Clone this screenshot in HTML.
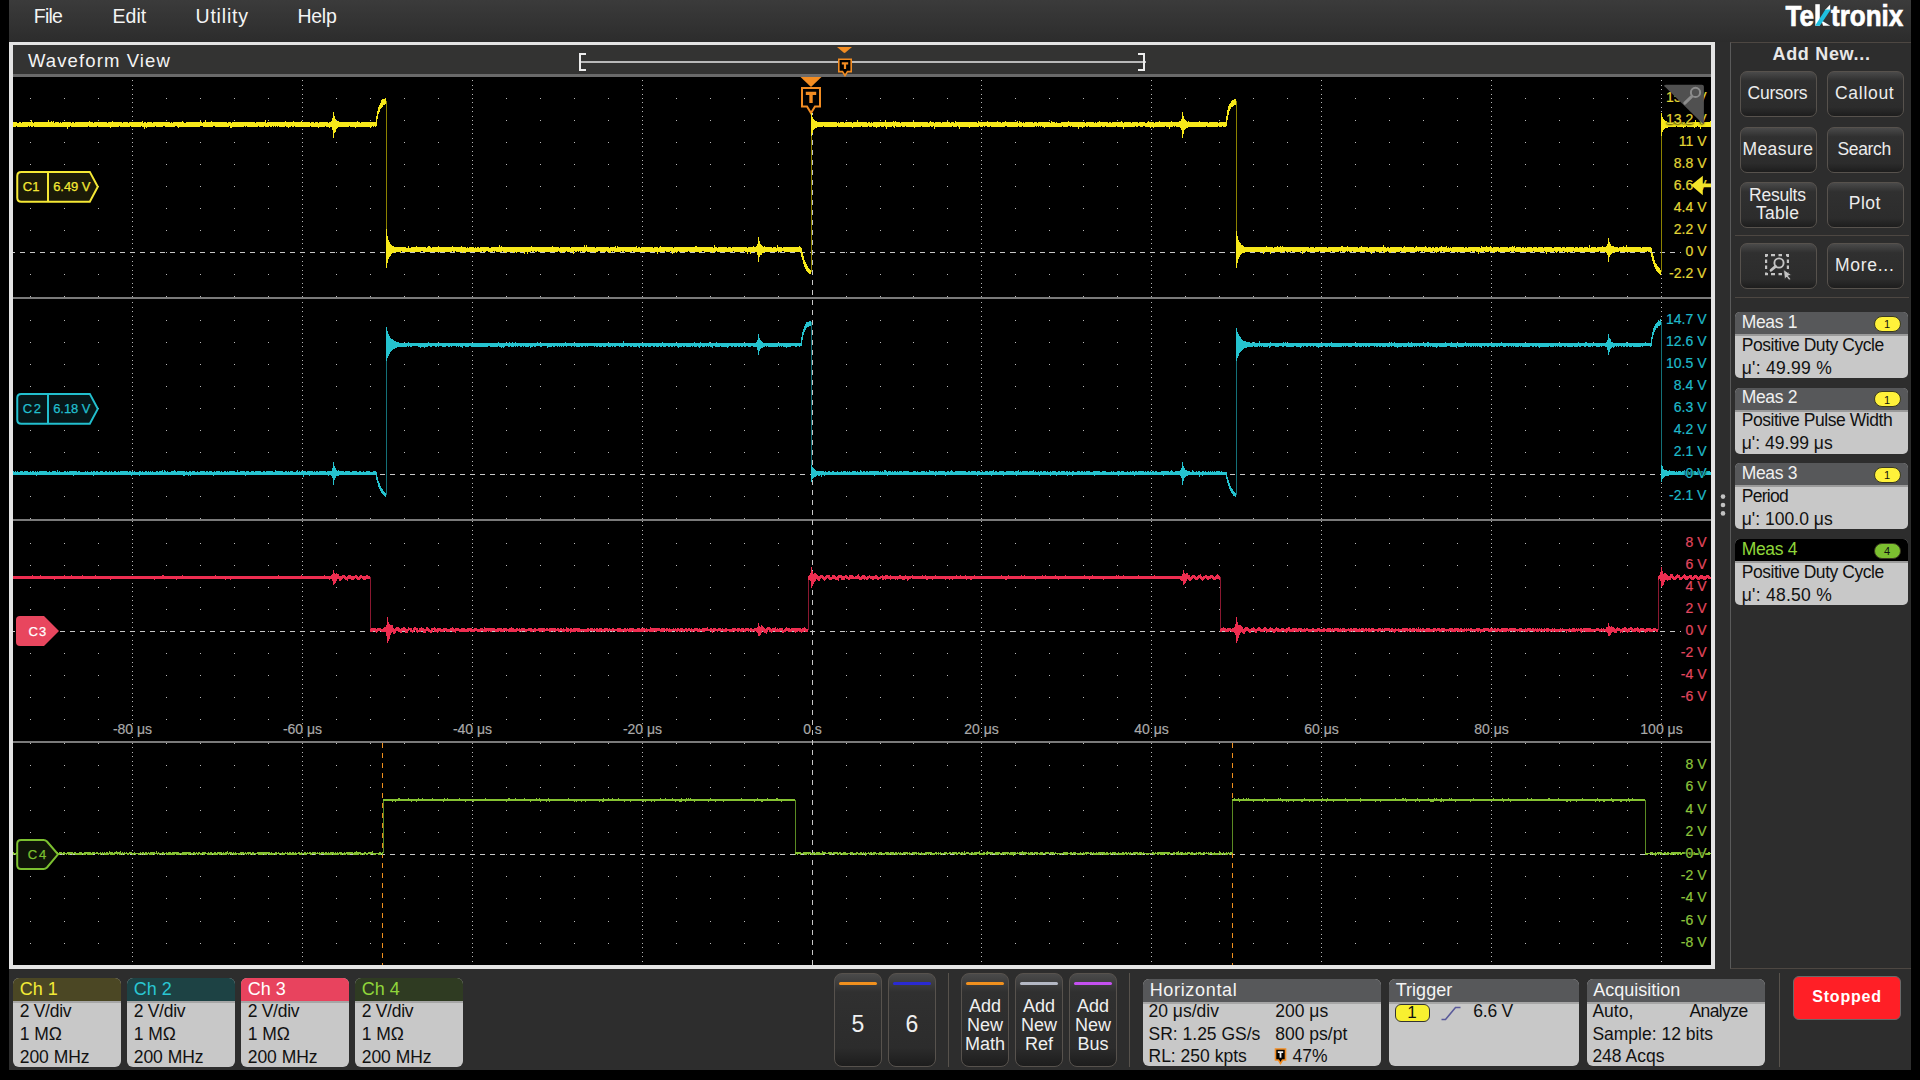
<!DOCTYPE html>
<html><head><meta charset="utf-8">
<style>
html,body{margin:0;padding:0;}
body{width:1920px;height:1080px;overflow:hidden;background:#000;position:relative;font-family:"Liberation Sans",sans-serif;}
.a{position:absolute;}
.t{position:absolute;white-space:pre;}
</style></head><body>
<div class="a" style="left:9px;top:0px;width:1902px;height:1070px;background:#2d2d2d;"></div>
<div class="a" style="left:9px;top:0px;width:1902px;height:42px;background:linear-gradient(#3b3b3b,#2c2c2c);"></div>
<div class="t" style="left:33.75px;top:6.59px;font-size:19.5px;line-height:19.5px;color:#f4f4f4;letter-spacing:-0.765px;">File</div>
<div class="t" style="left:112.50px;top:6.59px;font-size:19.5px;line-height:19.5px;color:#f4f4f4;letter-spacing:0.037px;">Edit</div>
<div class="t" style="left:195.50px;top:6.59px;font-size:19.5px;line-height:19.5px;color:#f4f4f4;letter-spacing:0.804px;">Utility</div>
<div class="t" style="left:297.60px;top:6.59px;font-size:19.5px;line-height:19.5px;color:#f4f4f4;letter-spacing:-0.324px;">Help</div>
<svg class="a" style="left:0;top:0" width="1920" height="40"><text x="1785.6" y="25.8" font-family="Liberation Sans" font-weight="bold" font-size="30" fill="#fff" stroke="#fff" stroke-width="0.7" textLength="28.5" lengthAdjust="spacingAndGlyphs">Te</text><rect x="1815.3" y="4.2" width="4.5" height="21.6" fill="#fff"/><path d="M1821.5 20.5 L1830.3 25.8 H1823 Z" fill="#fff"/><path d="M1825 10 L1830.2 4.6 V10 Z" fill="#fff"/><path d="M1815.1 25.8 H1819.9 L1830.8 9.4 H1825.4 Z" fill="#1fc0e0"/><text x="1831" y="25.8" font-family="Liberation Sans" font-weight="bold" font-size="30" fill="#fff" stroke="#fff" stroke-width="0.7" textLength="72.2" lengthAdjust="spacingAndGlyphs">tronix</text></svg>
<div class="a" style="left:9px;top:42px;width:1706px;height:927px;background:#e4e4e4;"></div>
<div class="a" style="left:13px;top:45px;width:1698px;height:29px;background:#333332;"></div>
<div class="a" style="left:13px;top:74px;width:1698px;height:3px;background:#6a6a6a;"></div>
<div class="a" style="left:13px;top:77px;width:1698px;height:888px;background:#000;"></div>
<div class="t" style="left:27.90px;top:51.74px;font-size:18.5px;line-height:18.5px;color:#f4f4f4;letter-spacing:1.119px;">Waveform View</div>
<svg class="a" style="left:0;top:0" width="1920" height="120" shape-rendering="crispEdges"><rect x="579" y="61" width="567" height="2" fill="#b9b9b9"/><path d="M579 53h7v1.6h-5.4V69.4H586V71h-7z" fill="#ececec"/><path d="M1145 53h-7v1.6h5.4V69.4H1138V71h7z" fill="#ececec"/></svg>
<svg class="a" style="left:0;top:0" width="1920" height="120"><path d="M837 47 H852 L845.5 52.5 Q844.5 53.3 843.5 52.5 Z" fill="#f28c22"/><path d="M838.8 59.2 H851.2 V71.6 H847.5 L845 75.5 L842.5 71.6 H838.8 Z" fill="#000" stroke="#f28c22" stroke-width="1.6"/><path d="M841.8 62.3 H848.2 V64.4 H846.1 V69 H843.9 V64.4 H841.8 Z" fill="#f28c22"/><path d="M800.5 77 H821.5 L811 87 Z" fill="#f28c22"/><path d="M802 88 H820 V106.5 H815 L811 113 L807 106.5 H802 Z" fill="#000" stroke="#f28c22" stroke-width="2"/><path d="M805.8 91.8 H816.2 V95 H812.7 V103 H809.3 V95 H805.8 Z" fill="#f28c22"/></svg>
<div class="a" style="left:1730px;top:42px;width:181px;height:927px;background:#2d2d2d;border-left:1px solid #5a5a5a;border-top:1px solid #4d4742;border-bottom:1px solid #4d4742;box-sizing:border-box;"></div>
<div class="t" style="left:1772.50px;top:45.36px;font-size:18px;line-height:18px;color:#e8e8e8;font-weight:bold;letter-spacing:0.683px;">Add New...</div>
<div class="a" style="left:1740px;top:71px;width:77px;height:46px;background:linear-gradient(#4a4a4a 0%,#303030 20%,#2c2c2c 80%,#1d1d1d 100%);border:1.6px solid #57524d;border-radius:7px;box-sizing:border-box;"></div>
<div class="t" style="left:1747.50px;top:84.54px;font-size:17.5px;line-height:17.5px;color:#ececec;letter-spacing:-0.208px;">Cursors</div>
<div class="a" style="left:1827px;top:71px;width:77px;height:46px;background:linear-gradient(#4a4a4a 0%,#303030 20%,#2c2c2c 80%,#1d1d1d 100%);border:1.6px solid #57524d;border-radius:7px;box-sizing:border-box;"></div>
<div class="t" style="left:1835.00px;top:84.54px;font-size:17.5px;line-height:17.5px;color:#ececec;letter-spacing:0.706px;">Callout</div>
<div class="a" style="left:1740px;top:127px;width:77px;height:46px;background:linear-gradient(#4a4a4a 0%,#303030 20%,#2c2c2c 80%,#1d1d1d 100%);border:1.6px solid #57524d;border-radius:7px;box-sizing:border-box;"></div>
<div class="t" style="left:1742.50px;top:140.79px;font-size:17.5px;line-height:17.5px;color:#ececec;letter-spacing:0.404px;">Measure</div>
<div class="a" style="left:1827px;top:127px;width:77px;height:46px;background:linear-gradient(#4a4a4a 0%,#303030 20%,#2c2c2c 80%,#1d1d1d 100%);border:1.6px solid #57524d;border-radius:7px;box-sizing:border-box;"></div>
<div class="t" style="left:1837.50px;top:140.79px;font-size:17.5px;line-height:17.5px;color:#ececec;letter-spacing:-0.345px;">Search</div>
<div class="a" style="left:1740px;top:182px;width:77px;height:46px;background:linear-gradient(#4a4a4a 0%,#303030 20%,#2c2c2c 80%,#1d1d1d 100%);border:1.6px solid #57524d;border-radius:7px;box-sizing:border-box;"></div>
<div class="t" style="left:1749.00px;top:187.04px;font-size:17.5px;line-height:17.5px;color:#ececec;letter-spacing:-0.227px;">Results</div>
<div class="a" style="left:1827px;top:182px;width:77px;height:46px;background:linear-gradient(#4a4a4a 0%,#303030 20%,#2c2c2c 80%,#1d1d1d 100%);border:1.6px solid #57524d;border-radius:7px;box-sizing:border-box;"></div>
<div class="t" style="left:1848.75px;top:194.79px;font-size:17.5px;line-height:17.5px;color:#ececec;letter-spacing:0.521px;">Plot</div>
<div class="a" style="left:1740px;top:243px;width:77px;height:46px;background:linear-gradient(#4a4a4a 0%,#303030 20%,#2c2c2c 80%,#1d1d1d 100%);border:1.6px solid #57524d;border-radius:7px;box-sizing:border-box;"></div>
<div class="a" style="left:1827px;top:243px;width:77px;height:46px;background:linear-gradient(#4a4a4a 0%,#303030 20%,#2c2c2c 80%,#1d1d1d 100%);border:1.6px solid #57524d;border-radius:7px;box-sizing:border-box;"></div>
<div class="t" style="left:1835.00px;top:256.79px;font-size:17.5px;line-height:17.5px;color:#ececec;letter-spacing:0.721px;">More...</div>
<div class="t" style="left:1756.00px;top:205.04px;font-size:17.5px;line-height:17.5px;color:#ececec;letter-spacing:0.294px;">Table</div>
<div class="a" style="left:1735px;top:235px;width:174px;height:1px;background:#4d4742;"></div>
<div class="a" style="left:1735px;top:297px;width:174px;height:1px;background:#4d4742;"></div>
<svg class="a" style="left:1760px;top:248px" width="40" height="36"><path d="M5 6h3v2.2h-3zM11 6h4v2.2h-4zM18.5 6h3.5v2.2h-3.5zM26 6h3v2.2h-3zM5 25h3v2.2h-3zM11 25h4v2.2h-4zM18.5 25h3.5v2.2h-3.5zM26 25h3v2.2h-3zM5 6h2.2v3h-2.2zM5 11.5h2.2v3.5h-2.2zM5 17.5h2.2v3.5h-2.2zM5 24.5h2.2v2.7h-2.2zM26.8 6h2.2v3h-2.2zM26.8 11.5h2.2v3.5h-2.2zM26.8 17.5h2.2v3.5h-2.2zM26.8 24.5h2.2v2.7h-2.2z" fill="#c4c4c4"/><circle cx="19" cy="15" r="4.6" fill="none" stroke="#c4c4c4" stroke-width="1.9"/><path d="M15.6 18.4 L11 22.3" stroke="#c4c4c4" stroke-width="2.8" stroke-linecap="round"/><path d="M23.5 21.5 L31.5 27 L28.3 27.8 L30.8 31 L29 32.3 L26.6 29 L24.6 31.5 Z" fill="#c4c4c4" stroke="#2c2c2c" stroke-width="0.8"/></svg>
<div class="a" style="left:1735px;top:312px;width:173px;height:66px;background:#c8c8c8;border-radius:5px;overflow:hidden;"></div>
<div class="a" style="left:1735px;top:312px;width:173px;height:22px;background:#57585a;border-radius:5px 5px 0 0;"></div>
<div class="a" style="left:1735px;top:334px;width:173px;height:2px;background:#9a9a9a;"></div>
<div class="a" style="left:1873.75px;top:315.5px;width:27px;height:16px;background:#fff23a;border:1px solid #3a3a20;border-radius:8px;box-sizing:border-box;"></div>
<div class="t" style="left:1883.95px;top:319.09px;font-size:11px;line-height:11px;color:#111;">1</div>
<div class="t" style="left:1741.70px;top:313.59px;font-size:17.5px;line-height:17.5px;color:#f0f0f0;letter-spacing:-0.320px;">Meas 1</div>
<div class="t" style="left:1741.70px;top:336.79px;font-size:17.5px;line-height:17.5px;color:#111;letter-spacing:-0.459px;">Positive Duty Cycle</div>
<div class="t" style="left:1741.70px;top:359.69px;font-size:17.5px;line-height:17.5px;color:#111;letter-spacing:0.267px;">μ': 49.99 %</div>
<div class="a" style="left:1735px;top:387.5px;width:173px;height:66px;background:#c8c8c8;border-radius:5px;overflow:hidden;"></div>
<div class="a" style="left:1735px;top:387.5px;width:173px;height:22px;background:#57585a;border-radius:5px 5px 0 0;"></div>
<div class="a" style="left:1735px;top:409.5px;width:173px;height:2px;background:#9a9a9a;"></div>
<div class="a" style="left:1873.75px;top:391.0px;width:27px;height:16px;background:#fff23a;border:1px solid #3a3a20;border-radius:8px;box-sizing:border-box;"></div>
<div class="t" style="left:1883.95px;top:394.59px;font-size:11px;line-height:11px;color:#111;">1</div>
<div class="t" style="left:1741.70px;top:389.09px;font-size:17.5px;line-height:17.5px;color:#f0f0f0;letter-spacing:-0.320px;">Meas 2</div>
<div class="t" style="left:1741.70px;top:412.29px;font-size:17.5px;line-height:17.5px;color:#111;letter-spacing:-0.448px;">Positive Pulse Width</div>
<div class="t" style="left:1741.70px;top:435.19px;font-size:17.5px;line-height:17.5px;color:#111;letter-spacing:0.032px;">μ': 49.99 μs</div>
<div class="a" style="left:1735px;top:463px;width:173px;height:66px;background:#c8c8c8;border-radius:5px;overflow:hidden;"></div>
<div class="a" style="left:1735px;top:463px;width:173px;height:22px;background:#57585a;border-radius:5px 5px 0 0;"></div>
<div class="a" style="left:1735px;top:485px;width:173px;height:2px;background:#9a9a9a;"></div>
<div class="a" style="left:1873.75px;top:466.5px;width:27px;height:16px;background:#fff23a;border:1px solid #3a3a20;border-radius:8px;box-sizing:border-box;"></div>
<div class="t" style="left:1883.95px;top:470.09px;font-size:11px;line-height:11px;color:#111;">1</div>
<div class="t" style="left:1741.70px;top:464.59px;font-size:17.5px;line-height:17.5px;color:#f0f0f0;letter-spacing:-0.320px;">Meas 3</div>
<div class="t" style="left:1741.70px;top:487.79px;font-size:17.5px;line-height:17.5px;color:#111;letter-spacing:-0.715px;">Period</div>
<div class="t" style="left:1741.70px;top:510.69px;font-size:17.5px;line-height:17.5px;color:#111;letter-spacing:0.032px;">μ': 100.0 μs</div>
<div class="a" style="left:1735px;top:539px;width:173px;height:66px;background:#c8c8c8;border-radius:5px;overflow:hidden;"></div>
<div class="a" style="left:1735px;top:539px;width:173px;height:22px;background:#000;border-radius:5px 5px 0 0;"></div>
<div class="a" style="left:1735px;top:561px;width:173px;height:2px;background:#9a9a9a;"></div>
<div class="a" style="left:1873.75px;top:542.5px;width:27px;height:16px;background:#7cc030;border:1px solid #3a3a20;border-radius:8px;box-sizing:border-box;"></div>
<div class="t" style="left:1883.95px;top:546.09px;font-size:11px;line-height:11px;color:#111;">4</div>
<div class="t" style="left:1741.70px;top:540.59px;font-size:17.5px;line-height:17.5px;color:#8fd63a;letter-spacing:-0.320px;">Meas 4</div>
<div class="t" style="left:1741.70px;top:563.79px;font-size:17.5px;line-height:17.5px;color:#111;letter-spacing:-0.459px;">Positive Duty Cycle</div>
<div class="t" style="left:1741.70px;top:586.69px;font-size:17.5px;line-height:17.5px;color:#111;letter-spacing:0.267px;">μ': 48.50 %</div>
<svg class="a" style="left:1718px;top:494px" width="10" height="24"><circle cx="5" cy="2.6" r="2.3" fill="#c2c2c2"/><circle cx="5" cy="11" r="2.3" fill="#c2c2c2"/><circle cx="5" cy="19.4" r="2.3" fill="#c2c2c2"/></svg>
<div class="a" style="left:13px;top:978px;width:108px;height:89px;background:#c8c8c8;border-radius:6px;overflow:hidden;"></div>
<div class="a" style="left:13px;top:978px;width:108px;height:22.7px;background:#4b4724;border-radius:6px 6px 0 0;"></div>
<div class="a" style="left:13px;top:1000.7px;width:108px;height:2.3px;background:#a6a6a6;"></div>
<div class="t" style="left:19.70px;top:980.36px;font-size:18px;line-height:18px;color:#f2ea36;">Ch 1</div>
<div class="t" style="left:19.70px;top:1003.49px;font-size:17.5px;line-height:17.5px;color:#111;letter-spacing:-0.277px;">2 V/div</div>
<div class="t" style="left:19.70px;top:1026.29px;font-size:17.5px;line-height:17.5px;color:#111;">1 MΩ</div>
<div class="t" style="left:19.70px;top:1048.79px;font-size:17.5px;line-height:17.5px;color:#111;letter-spacing:-0.017px;">200 MHz</div>
<div class="a" style="left:127px;top:978px;width:108px;height:89px;background:#c8c8c8;border-radius:6px;overflow:hidden;"></div>
<div class="a" style="left:127px;top:978px;width:108px;height:22.7px;background:#1d4244;border-radius:6px 6px 0 0;"></div>
<div class="a" style="left:127px;top:1000.7px;width:108px;height:2.3px;background:#a6a6a6;"></div>
<div class="t" style="left:133.70px;top:980.36px;font-size:18px;line-height:18px;color:#2ac7d3;">Ch 2</div>
<div class="t" style="left:133.70px;top:1003.49px;font-size:17.5px;line-height:17.5px;color:#111;letter-spacing:-0.277px;">2 V/div</div>
<div class="t" style="left:133.70px;top:1026.29px;font-size:17.5px;line-height:17.5px;color:#111;">1 MΩ</div>
<div class="t" style="left:133.70px;top:1048.79px;font-size:17.5px;line-height:17.5px;color:#111;letter-spacing:-0.017px;">200 MHz</div>
<div class="a" style="left:241px;top:978px;width:108px;height:89px;background:#c8c8c8;border-radius:6px;overflow:hidden;"></div>
<div class="a" style="left:241px;top:978px;width:108px;height:22.7px;background:#e8435e;border-radius:6px 6px 0 0;"></div>
<div class="a" style="left:241px;top:1000.7px;width:108px;height:2.3px;background:#a6a6a6;"></div>
<div class="t" style="left:247.70px;top:980.36px;font-size:18px;line-height:18px;color:#ffffff;">Ch 3</div>
<div class="t" style="left:247.70px;top:1003.49px;font-size:17.5px;line-height:17.5px;color:#111;letter-spacing:-0.277px;">2 V/div</div>
<div class="t" style="left:247.70px;top:1026.29px;font-size:17.5px;line-height:17.5px;color:#111;">1 MΩ</div>
<div class="t" style="left:247.70px;top:1048.79px;font-size:17.5px;line-height:17.5px;color:#111;letter-spacing:-0.017px;">200 MHz</div>
<div class="a" style="left:355px;top:978px;width:108px;height:89px;background:#c8c8c8;border-radius:6px;overflow:hidden;"></div>
<div class="a" style="left:355px;top:978px;width:108px;height:22.7px;background:#2f3b22;border-radius:6px 6px 0 0;"></div>
<div class="a" style="left:355px;top:1000.7px;width:108px;height:2.3px;background:#a6a6a6;"></div>
<div class="t" style="left:361.70px;top:980.36px;font-size:18px;line-height:18px;color:#8fd63a;">Ch 4</div>
<div class="t" style="left:361.70px;top:1003.49px;font-size:17.5px;line-height:17.5px;color:#111;letter-spacing:-0.277px;">2 V/div</div>
<div class="t" style="left:361.70px;top:1026.29px;font-size:17.5px;line-height:17.5px;color:#111;">1 MΩ</div>
<div class="t" style="left:361.70px;top:1048.79px;font-size:17.5px;line-height:17.5px;color:#111;letter-spacing:-0.017px;">200 MHz</div>
<div class="a" style="left:834px;top:973px;width:48px;height:94px;background:linear-gradient(#4a4a4a 0%,#303030 20%,#2c2c2c 80%,#1d1d1d 100%);border:1.6px solid #57524d;border-radius:7px;box-sizing:border-box;border-radius:8px;"></div>
<div class="a" style="left:839px;top:982px;width:38px;height:3px;background:#f0901e;border-radius:2px;"></div>
<div class="t" style="left:851.62px;top:1012.83px;font-size:23px;line-height:23px;color:#f0f0f0;">5</div>
<div class="a" style="left:888px;top:973px;width:48px;height:94px;background:linear-gradient(#4a4a4a 0%,#303030 20%,#2c2c2c 80%,#1d1d1d 100%);border:1.6px solid #57524d;border-radius:7px;box-sizing:border-box;border-radius:8px;"></div>
<div class="a" style="left:893px;top:982px;width:38px;height:3px;background:#2a2ad2;border-radius:2px;"></div>
<div class="t" style="left:905.62px;top:1012.83px;font-size:23px;line-height:23px;color:#f0f0f0;">6</div>
<div class="a" style="left:948px;top:973px;width:1px;height:94px;background:#57524c;"></div>
<div class="a" style="left:961px;top:973px;width:48px;height:94px;background:linear-gradient(#4a4a4a 0%,#303030 20%,#2c2c2c 80%,#1d1d1d 100%);border:1.6px solid #57524d;border-radius:7px;box-sizing:border-box;border-radius:8px;"></div>
<div class="a" style="left:966px;top:982px;width:38px;height:3px;background:#f0901e;border-radius:2px;"></div>
<div class="t" style="left:968.98px;top:997.06px;font-size:18px;line-height:18px;color:#f0f0f0;">Add</div>
<div class="t" style="left:966.96px;top:1016.16px;font-size:18px;line-height:18px;color:#f0f0f0;">New</div>
<div class="t" style="left:964.98px;top:1035.36px;font-size:18px;line-height:18px;color:#f0f0f0;">Math</div>
<div class="a" style="left:1015px;top:973px;width:48px;height:94px;background:linear-gradient(#4a4a4a 0%,#303030 20%,#2c2c2c 80%,#1d1d1d 100%);border:1.6px solid #57524d;border-radius:7px;box-sizing:border-box;border-radius:8px;"></div>
<div class="a" style="left:1020px;top:982px;width:38px;height:3px;background:#b4b8c4;border-radius:2px;"></div>
<div class="t" style="left:1022.98px;top:997.06px;font-size:18px;line-height:18px;color:#f0f0f0;">Add</div>
<div class="t" style="left:1020.96px;top:1016.16px;font-size:18px;line-height:18px;color:#f0f0f0;">New</div>
<div class="t" style="left:1024.96px;top:1035.36px;font-size:18px;line-height:18px;color:#f0f0f0;">Ref</div>
<div class="a" style="left:1069px;top:973px;width:48px;height:94px;background:linear-gradient(#4a4a4a 0%,#303030 20%,#2c2c2c 80%,#1d1d1d 100%);border:1.6px solid #57524d;border-radius:7px;box-sizing:border-box;border-radius:8px;"></div>
<div class="a" style="left:1074px;top:982px;width:38px;height:3px;background:#c450f0;border-radius:2px;"></div>
<div class="t" style="left:1076.98px;top:997.06px;font-size:18px;line-height:18px;color:#f0f0f0;">Add</div>
<div class="t" style="left:1074.95px;top:1016.16px;font-size:18px;line-height:18px;color:#f0f0f0;">New</div>
<div class="t" style="left:1077.47px;top:1035.36px;font-size:18px;line-height:18px;color:#f0f0f0;">Bus</div>
<div class="a" style="left:1129px;top:973px;width:1px;height:94px;background:#57524c;"></div>
<div class="a" style="left:1143px;top:979px;width:238px;height:87px;background:#c8c8c8;border-radius:6px;overflow:hidden;"></div>
<div class="a" style="left:1143px;top:979px;width:238px;height:22.7px;background:#57585a;border-radius:6px 6px 0 0;"></div>
<div class="a" style="left:1143px;top:1001.7px;width:238px;height:2.3px;background:#a6a6a6;"></div>
<div class="t" style="left:1149.70px;top:980.86px;font-size:18px;line-height:18px;color:#f4f4f4;letter-spacing:0.667px;">Horizontal</div>
<div class="t" style="left:1148.50px;top:1003.29px;font-size:17.5px;line-height:17.5px;color:#111;">20 μs/div</div>
<div class="t" style="left:1148.50px;top:1026.29px;font-size:17.5px;line-height:17.5px;color:#111;">SR: 1.25 GS/s</div>
<div class="t" style="left:1148.50px;top:1047.79px;font-size:17.5px;line-height:17.5px;color:#111;">RL: 250 kpts</div>
<div class="t" style="left:1275.30px;top:1003.29px;font-size:17.5px;line-height:17.5px;color:#111;">200 μs</div>
<div class="t" style="left:1275.30px;top:1026.29px;font-size:17.5px;line-height:17.5px;color:#111;">800 ps/pt</div>
<div class="t" style="left:1292.50px;top:1047.79px;font-size:17.5px;line-height:17.5px;color:#111;">47%</div>
<svg class="a" style="left:1274px;top:1048px" width="14" height="18"><path d="M1.5 1 H11.5 V12 H8.5 L6.5 15.5 L4.5 12 H1.5 Z" fill="#000" stroke="#f28c22" stroke-width="1.6"/><path d="M3.8 3.2 H9.2 V5 H7.4 V9.8 H5.6 V5 H3.8 Z" fill="#f0f0f0"/></svg>
<div class="a" style="left:1389px;top:979px;width:190px;height:87px;background:#c8c8c8;border-radius:6px;overflow:hidden;"></div>
<div class="a" style="left:1389px;top:979px;width:190px;height:22.7px;background:#57585a;border-radius:6px 6px 0 0;"></div>
<div class="a" style="left:1389px;top:1001.7px;width:190px;height:2.3px;background:#a6a6a6;"></div>
<div class="t" style="left:1395.80px;top:980.86px;font-size:18px;line-height:18px;color:#f4f4f4;">Trigger</div>
<div class="a" style="left:1394.7px;top:1003.7px;width:35px;height:18px;background:#f8f030;border:1px solid #333;border-radius:6px;box-sizing:border-box;"></div>
<div class="t" style="left:1407.28px;top:1003.71px;font-size:17px;line-height:17px;color:#111;">1</div>
<svg class="a" style="left:1440px;top:1005px" width="24" height="17"><path d="M1.5 14.5 H5.5 L15.5 2.5 H20.5" fill="none" stroke="#5a5a9a" stroke-width="1.6"/></svg>
<div class="t" style="left:1473.30px;top:1003.29px;font-size:17.5px;line-height:17.5px;color:#111;letter-spacing:-0.216px;">6.6 V</div>
<div class="a" style="left:1587px;top:979px;width:178px;height:87px;background:#c8c8c8;border-radius:6px;overflow:hidden;"></div>
<div class="a" style="left:1587px;top:979px;width:178px;height:22.7px;background:#57585a;border-radius:6px 6px 0 0;"></div>
<div class="a" style="left:1587px;top:1001.7px;width:178px;height:2.3px;background:#a6a6a6;"></div>
<div class="t" style="left:1593.30px;top:981.36px;font-size:18px;line-height:18px;color:#f4f4f4;">Acquisition</div>
<div class="t" style="left:1592.40px;top:1003.29px;font-size:17.5px;line-height:17.5px;color:#111;">Auto,</div>
<div class="t" style="left:1689.40px;top:1003.29px;font-size:17.5px;line-height:17.5px;color:#111;letter-spacing:-0.583px;">Analyze</div>
<div class="t" style="left:1592.40px;top:1025.79px;font-size:17.5px;line-height:17.5px;color:#111;">Sample: 12 bits</div>
<div class="t" style="left:1592.40px;top:1047.79px;font-size:17.5px;line-height:17.5px;color:#111;">248 Acqs</div>
<div class="a" style="left:1779px;top:973px;width:1px;height:94px;background:#57524c;"></div>
<div class="a" style="left:1792.5px;top:976.3px;width:108px;height:44px;background:#ff1f26;border:1.5px solid #6a6a6a;border-radius:6px;box-sizing:border-box;"></div>
<div class="t" style="left:1812.30px;top:989.06px;font-size:16px;line-height:16px;color:#ffffff;font-weight:bold;letter-spacing:0.783px;">Stopped</div>
<svg class="a" style="left:0;top:0" width="1920" height="1080" shape-rendering="crispEdges">
<defs><clipPath id="pc"><rect x="13" y="77" width="1698" height="888"/></clipPath></defs>
<g clip-path="url(#pc)">
<path d="M30 98h1v1h-1zM64 98h1v1h-1zM98 98h1v1h-1zM166 98h1v1h-1zM200 98h1v1h-1zM234 98h1v1h-1zM268 98h1v1h-1zM336 98h1v1h-1zM370 98h1v1h-1zM404 98h1v1h-1zM438 98h1v1h-1zM506 98h1v1h-1zM540 98h1v1h-1zM574 98h1v1h-1zM608 98h1v1h-1zM676 98h1v1h-1zM710 98h1v1h-1zM744 98h1v1h-1zM778 98h1v1h-1zM846 98h1v1h-1zM880 98h1v1h-1zM913 98h1v1h-1zM947 98h1v1h-1zM1015 98h1v1h-1zM1049 98h1v1h-1zM1083 98h1v1h-1zM1117 98h1v1h-1zM1185 98h1v1h-1zM1219 98h1v1h-1zM1253 98h1v1h-1zM1287 98h1v1h-1zM1355 98h1v1h-1zM1389 98h1v1h-1zM1423 98h1v1h-1zM1457 98h1v1h-1zM1525 98h1v1h-1zM1559 98h1v1h-1zM1593 98h1v1h-1zM1627 98h1v1h-1zM30 120h1v1h-1zM64 120h1v1h-1zM98 120h1v1h-1zM166 120h1v1h-1zM200 120h1v1h-1zM234 120h1v1h-1zM268 120h1v1h-1zM336 120h1v1h-1zM370 120h1v1h-1zM404 120h1v1h-1zM438 120h1v1h-1zM506 120h1v1h-1zM540 120h1v1h-1zM574 120h1v1h-1zM608 120h1v1h-1zM676 120h1v1h-1zM710 120h1v1h-1zM744 120h1v1h-1zM778 120h1v1h-1zM846 120h1v1h-1zM880 120h1v1h-1zM913 120h1v1h-1zM947 120h1v1h-1zM1015 120h1v1h-1zM1049 120h1v1h-1zM1083 120h1v1h-1zM1117 120h1v1h-1zM1185 120h1v1h-1zM1219 120h1v1h-1zM1253 120h1v1h-1zM1287 120h1v1h-1zM1355 120h1v1h-1zM1389 120h1v1h-1zM1423 120h1v1h-1zM1457 120h1v1h-1zM1525 120h1v1h-1zM1559 120h1v1h-1zM1593 120h1v1h-1zM1627 120h1v1h-1zM30 142h1v1h-1zM64 142h1v1h-1zM98 142h1v1h-1zM166 142h1v1h-1zM200 142h1v1h-1zM234 142h1v1h-1zM268 142h1v1h-1zM336 142h1v1h-1zM370 142h1v1h-1zM404 142h1v1h-1zM438 142h1v1h-1zM506 142h1v1h-1zM540 142h1v1h-1zM574 142h1v1h-1zM608 142h1v1h-1zM676 142h1v1h-1zM710 142h1v1h-1zM744 142h1v1h-1zM778 142h1v1h-1zM846 142h1v1h-1zM880 142h1v1h-1zM913 142h1v1h-1zM947 142h1v1h-1zM1015 142h1v1h-1zM1049 142h1v1h-1zM1083 142h1v1h-1zM1117 142h1v1h-1zM1185 142h1v1h-1zM1219 142h1v1h-1zM1253 142h1v1h-1zM1287 142h1v1h-1zM1355 142h1v1h-1zM1389 142h1v1h-1zM1423 142h1v1h-1zM1457 142h1v1h-1zM1525 142h1v1h-1zM1559 142h1v1h-1zM1593 142h1v1h-1zM1627 142h1v1h-1zM30 164h1v1h-1zM64 164h1v1h-1zM98 164h1v1h-1zM166 164h1v1h-1zM200 164h1v1h-1zM234 164h1v1h-1zM268 164h1v1h-1zM336 164h1v1h-1zM370 164h1v1h-1zM404 164h1v1h-1zM438 164h1v1h-1zM506 164h1v1h-1zM540 164h1v1h-1zM574 164h1v1h-1zM608 164h1v1h-1zM676 164h1v1h-1zM710 164h1v1h-1zM744 164h1v1h-1zM778 164h1v1h-1zM846 164h1v1h-1zM880 164h1v1h-1zM913 164h1v1h-1zM947 164h1v1h-1zM1015 164h1v1h-1zM1049 164h1v1h-1zM1083 164h1v1h-1zM1117 164h1v1h-1zM1185 164h1v1h-1zM1219 164h1v1h-1zM1253 164h1v1h-1zM1287 164h1v1h-1zM1355 164h1v1h-1zM1389 164h1v1h-1zM1423 164h1v1h-1zM1457 164h1v1h-1zM1525 164h1v1h-1zM1559 164h1v1h-1zM1593 164h1v1h-1zM1627 164h1v1h-1zM30 186h1v1h-1zM64 186h1v1h-1zM98 186h1v1h-1zM166 186h1v1h-1zM200 186h1v1h-1zM234 186h1v1h-1zM268 186h1v1h-1zM336 186h1v1h-1zM370 186h1v1h-1zM404 186h1v1h-1zM438 186h1v1h-1zM506 186h1v1h-1zM540 186h1v1h-1zM574 186h1v1h-1zM608 186h1v1h-1zM676 186h1v1h-1zM710 186h1v1h-1zM744 186h1v1h-1zM778 186h1v1h-1zM846 186h1v1h-1zM880 186h1v1h-1zM913 186h1v1h-1zM947 186h1v1h-1zM1015 186h1v1h-1zM1049 186h1v1h-1zM1083 186h1v1h-1zM1117 186h1v1h-1zM1185 186h1v1h-1zM1219 186h1v1h-1zM1253 186h1v1h-1zM1287 186h1v1h-1zM1355 186h1v1h-1zM1389 186h1v1h-1zM1423 186h1v1h-1zM1457 186h1v1h-1zM1525 186h1v1h-1zM1559 186h1v1h-1zM1593 186h1v1h-1zM1627 186h1v1h-1zM30 208h1v1h-1zM64 208h1v1h-1zM98 208h1v1h-1zM166 208h1v1h-1zM200 208h1v1h-1zM234 208h1v1h-1zM268 208h1v1h-1zM336 208h1v1h-1zM370 208h1v1h-1zM404 208h1v1h-1zM438 208h1v1h-1zM506 208h1v1h-1zM540 208h1v1h-1zM574 208h1v1h-1zM608 208h1v1h-1zM676 208h1v1h-1zM710 208h1v1h-1zM744 208h1v1h-1zM778 208h1v1h-1zM846 208h1v1h-1zM880 208h1v1h-1zM913 208h1v1h-1zM947 208h1v1h-1zM1015 208h1v1h-1zM1049 208h1v1h-1zM1083 208h1v1h-1zM1117 208h1v1h-1zM1185 208h1v1h-1zM1219 208h1v1h-1zM1253 208h1v1h-1zM1287 208h1v1h-1zM1355 208h1v1h-1zM1389 208h1v1h-1zM1423 208h1v1h-1zM1457 208h1v1h-1zM1525 208h1v1h-1zM1559 208h1v1h-1zM1593 208h1v1h-1zM1627 208h1v1h-1zM30 230h1v1h-1zM64 230h1v1h-1zM98 230h1v1h-1zM166 230h1v1h-1zM200 230h1v1h-1zM234 230h1v1h-1zM268 230h1v1h-1zM336 230h1v1h-1zM370 230h1v1h-1zM404 230h1v1h-1zM438 230h1v1h-1zM506 230h1v1h-1zM540 230h1v1h-1zM574 230h1v1h-1zM608 230h1v1h-1zM676 230h1v1h-1zM710 230h1v1h-1zM744 230h1v1h-1zM778 230h1v1h-1zM846 230h1v1h-1zM880 230h1v1h-1zM913 230h1v1h-1zM947 230h1v1h-1zM1015 230h1v1h-1zM1049 230h1v1h-1zM1083 230h1v1h-1zM1117 230h1v1h-1zM1185 230h1v1h-1zM1219 230h1v1h-1zM1253 230h1v1h-1zM1287 230h1v1h-1zM1355 230h1v1h-1zM1389 230h1v1h-1zM1423 230h1v1h-1zM1457 230h1v1h-1zM1525 230h1v1h-1zM1559 230h1v1h-1zM1593 230h1v1h-1zM1627 230h1v1h-1zM30 252h1v1h-1zM64 252h1v1h-1zM98 252h1v1h-1zM166 252h1v1h-1zM200 252h1v1h-1zM234 252h1v1h-1zM268 252h1v1h-1zM336 252h1v1h-1zM370 252h1v1h-1zM404 252h1v1h-1zM438 252h1v1h-1zM506 252h1v1h-1zM540 252h1v1h-1zM574 252h1v1h-1zM608 252h1v1h-1zM676 252h1v1h-1zM710 252h1v1h-1zM744 252h1v1h-1zM778 252h1v1h-1zM846 252h1v1h-1zM880 252h1v1h-1zM913 252h1v1h-1zM947 252h1v1h-1zM1015 252h1v1h-1zM1049 252h1v1h-1zM1083 252h1v1h-1zM1117 252h1v1h-1zM1185 252h1v1h-1zM1219 252h1v1h-1zM1253 252h1v1h-1zM1287 252h1v1h-1zM1355 252h1v1h-1zM1389 252h1v1h-1zM1423 252h1v1h-1zM1457 252h1v1h-1zM1525 252h1v1h-1zM1559 252h1v1h-1zM1593 252h1v1h-1zM1627 252h1v1h-1zM30 274h1v1h-1zM64 274h1v1h-1zM98 274h1v1h-1zM166 274h1v1h-1zM200 274h1v1h-1zM234 274h1v1h-1zM268 274h1v1h-1zM336 274h1v1h-1zM370 274h1v1h-1zM404 274h1v1h-1zM438 274h1v1h-1zM506 274h1v1h-1zM540 274h1v1h-1zM574 274h1v1h-1zM608 274h1v1h-1zM676 274h1v1h-1zM710 274h1v1h-1zM744 274h1v1h-1zM778 274h1v1h-1zM846 274h1v1h-1zM880 274h1v1h-1zM913 274h1v1h-1zM947 274h1v1h-1zM1015 274h1v1h-1zM1049 274h1v1h-1zM1083 274h1v1h-1zM1117 274h1v1h-1zM1185 274h1v1h-1zM1219 274h1v1h-1zM1253 274h1v1h-1zM1287 274h1v1h-1zM1355 274h1v1h-1zM1389 274h1v1h-1zM1423 274h1v1h-1zM1457 274h1v1h-1zM1525 274h1v1h-1zM1559 274h1v1h-1zM1593 274h1v1h-1zM1627 274h1v1h-1zM30 296h1v1h-1zM64 296h1v1h-1zM98 296h1v1h-1zM166 296h1v1h-1zM200 296h1v1h-1zM234 296h1v1h-1zM268 296h1v1h-1zM336 296h1v1h-1zM370 296h1v1h-1zM404 296h1v1h-1zM438 296h1v1h-1zM506 296h1v1h-1zM540 296h1v1h-1zM574 296h1v1h-1zM608 296h1v1h-1zM676 296h1v1h-1zM710 296h1v1h-1zM744 296h1v1h-1zM778 296h1v1h-1zM846 296h1v1h-1zM880 296h1v1h-1zM913 296h1v1h-1zM947 296h1v1h-1zM1015 296h1v1h-1zM1049 296h1v1h-1zM1083 296h1v1h-1zM1117 296h1v1h-1zM1185 296h1v1h-1zM1219 296h1v1h-1zM1253 296h1v1h-1zM1287 296h1v1h-1zM1355 296h1v1h-1zM1389 296h1v1h-1zM1423 296h1v1h-1zM1457 296h1v1h-1zM1525 296h1v1h-1zM1559 296h1v1h-1zM1593 296h1v1h-1zM1627 296h1v1h-1zM30 320h1v1h-1zM64 320h1v1h-1zM98 320h1v1h-1zM166 320h1v1h-1zM200 320h1v1h-1zM234 320h1v1h-1zM268 320h1v1h-1zM336 320h1v1h-1zM370 320h1v1h-1zM404 320h1v1h-1zM438 320h1v1h-1zM506 320h1v1h-1zM540 320h1v1h-1zM574 320h1v1h-1zM608 320h1v1h-1zM676 320h1v1h-1zM710 320h1v1h-1zM744 320h1v1h-1zM778 320h1v1h-1zM846 320h1v1h-1zM880 320h1v1h-1zM913 320h1v1h-1zM947 320h1v1h-1zM1015 320h1v1h-1zM1049 320h1v1h-1zM1083 320h1v1h-1zM1117 320h1v1h-1zM1185 320h1v1h-1zM1219 320h1v1h-1zM1253 320h1v1h-1zM1287 320h1v1h-1zM1355 320h1v1h-1zM1389 320h1v1h-1zM1423 320h1v1h-1zM1457 320h1v1h-1zM1525 320h1v1h-1zM1559 320h1v1h-1zM1593 320h1v1h-1zM1627 320h1v1h-1zM30 342h1v1h-1zM64 342h1v1h-1zM98 342h1v1h-1zM166 342h1v1h-1zM200 342h1v1h-1zM234 342h1v1h-1zM268 342h1v1h-1zM336 342h1v1h-1zM370 342h1v1h-1zM404 342h1v1h-1zM438 342h1v1h-1zM506 342h1v1h-1zM540 342h1v1h-1zM574 342h1v1h-1zM608 342h1v1h-1zM676 342h1v1h-1zM710 342h1v1h-1zM744 342h1v1h-1zM778 342h1v1h-1zM846 342h1v1h-1zM880 342h1v1h-1zM913 342h1v1h-1zM947 342h1v1h-1zM1015 342h1v1h-1zM1049 342h1v1h-1zM1083 342h1v1h-1zM1117 342h1v1h-1zM1185 342h1v1h-1zM1219 342h1v1h-1zM1253 342h1v1h-1zM1287 342h1v1h-1zM1355 342h1v1h-1zM1389 342h1v1h-1zM1423 342h1v1h-1zM1457 342h1v1h-1zM1525 342h1v1h-1zM1559 342h1v1h-1zM1593 342h1v1h-1zM1627 342h1v1h-1zM30 364h1v1h-1zM64 364h1v1h-1zM98 364h1v1h-1zM166 364h1v1h-1zM200 364h1v1h-1zM234 364h1v1h-1zM268 364h1v1h-1zM336 364h1v1h-1zM370 364h1v1h-1zM404 364h1v1h-1zM438 364h1v1h-1zM506 364h1v1h-1zM540 364h1v1h-1zM574 364h1v1h-1zM608 364h1v1h-1zM676 364h1v1h-1zM710 364h1v1h-1zM744 364h1v1h-1zM778 364h1v1h-1zM846 364h1v1h-1zM880 364h1v1h-1zM913 364h1v1h-1zM947 364h1v1h-1zM1015 364h1v1h-1zM1049 364h1v1h-1zM1083 364h1v1h-1zM1117 364h1v1h-1zM1185 364h1v1h-1zM1219 364h1v1h-1zM1253 364h1v1h-1zM1287 364h1v1h-1zM1355 364h1v1h-1zM1389 364h1v1h-1zM1423 364h1v1h-1zM1457 364h1v1h-1zM1525 364h1v1h-1zM1559 364h1v1h-1zM1593 364h1v1h-1zM1627 364h1v1h-1zM30 386h1v1h-1zM64 386h1v1h-1zM98 386h1v1h-1zM166 386h1v1h-1zM200 386h1v1h-1zM234 386h1v1h-1zM268 386h1v1h-1zM336 386h1v1h-1zM370 386h1v1h-1zM404 386h1v1h-1zM438 386h1v1h-1zM506 386h1v1h-1zM540 386h1v1h-1zM574 386h1v1h-1zM608 386h1v1h-1zM676 386h1v1h-1zM710 386h1v1h-1zM744 386h1v1h-1zM778 386h1v1h-1zM846 386h1v1h-1zM880 386h1v1h-1zM913 386h1v1h-1zM947 386h1v1h-1zM1015 386h1v1h-1zM1049 386h1v1h-1zM1083 386h1v1h-1zM1117 386h1v1h-1zM1185 386h1v1h-1zM1219 386h1v1h-1zM1253 386h1v1h-1zM1287 386h1v1h-1zM1355 386h1v1h-1zM1389 386h1v1h-1zM1423 386h1v1h-1zM1457 386h1v1h-1zM1525 386h1v1h-1zM1559 386h1v1h-1zM1593 386h1v1h-1zM1627 386h1v1h-1zM30 408h1v1h-1zM64 408h1v1h-1zM98 408h1v1h-1zM166 408h1v1h-1zM200 408h1v1h-1zM234 408h1v1h-1zM268 408h1v1h-1zM336 408h1v1h-1zM370 408h1v1h-1zM404 408h1v1h-1zM438 408h1v1h-1zM506 408h1v1h-1zM540 408h1v1h-1zM574 408h1v1h-1zM608 408h1v1h-1zM676 408h1v1h-1zM710 408h1v1h-1zM744 408h1v1h-1zM778 408h1v1h-1zM846 408h1v1h-1zM880 408h1v1h-1zM913 408h1v1h-1zM947 408h1v1h-1zM1015 408h1v1h-1zM1049 408h1v1h-1zM1083 408h1v1h-1zM1117 408h1v1h-1zM1185 408h1v1h-1zM1219 408h1v1h-1zM1253 408h1v1h-1zM1287 408h1v1h-1zM1355 408h1v1h-1zM1389 408h1v1h-1zM1423 408h1v1h-1zM1457 408h1v1h-1zM1525 408h1v1h-1zM1559 408h1v1h-1zM1593 408h1v1h-1zM1627 408h1v1h-1zM30 430h1v1h-1zM64 430h1v1h-1zM98 430h1v1h-1zM166 430h1v1h-1zM200 430h1v1h-1zM234 430h1v1h-1zM268 430h1v1h-1zM336 430h1v1h-1zM370 430h1v1h-1zM404 430h1v1h-1zM438 430h1v1h-1zM506 430h1v1h-1zM540 430h1v1h-1zM574 430h1v1h-1zM608 430h1v1h-1zM676 430h1v1h-1zM710 430h1v1h-1zM744 430h1v1h-1zM778 430h1v1h-1zM846 430h1v1h-1zM880 430h1v1h-1zM913 430h1v1h-1zM947 430h1v1h-1zM1015 430h1v1h-1zM1049 430h1v1h-1zM1083 430h1v1h-1zM1117 430h1v1h-1zM1185 430h1v1h-1zM1219 430h1v1h-1zM1253 430h1v1h-1zM1287 430h1v1h-1zM1355 430h1v1h-1zM1389 430h1v1h-1zM1423 430h1v1h-1zM1457 430h1v1h-1zM1525 430h1v1h-1zM1559 430h1v1h-1zM1593 430h1v1h-1zM1627 430h1v1h-1zM30 452h1v1h-1zM64 452h1v1h-1zM98 452h1v1h-1zM166 452h1v1h-1zM200 452h1v1h-1zM234 452h1v1h-1zM268 452h1v1h-1zM336 452h1v1h-1zM370 452h1v1h-1zM404 452h1v1h-1zM438 452h1v1h-1zM506 452h1v1h-1zM540 452h1v1h-1zM574 452h1v1h-1zM608 452h1v1h-1zM676 452h1v1h-1zM710 452h1v1h-1zM744 452h1v1h-1zM778 452h1v1h-1zM846 452h1v1h-1zM880 452h1v1h-1zM913 452h1v1h-1zM947 452h1v1h-1zM1015 452h1v1h-1zM1049 452h1v1h-1zM1083 452h1v1h-1zM1117 452h1v1h-1zM1185 452h1v1h-1zM1219 452h1v1h-1zM1253 452h1v1h-1zM1287 452h1v1h-1zM1355 452h1v1h-1zM1389 452h1v1h-1zM1423 452h1v1h-1zM1457 452h1v1h-1zM1525 452h1v1h-1zM1559 452h1v1h-1zM1593 452h1v1h-1zM1627 452h1v1h-1zM30 474h1v1h-1zM64 474h1v1h-1zM98 474h1v1h-1zM166 474h1v1h-1zM200 474h1v1h-1zM234 474h1v1h-1zM268 474h1v1h-1zM336 474h1v1h-1zM370 474h1v1h-1zM404 474h1v1h-1zM438 474h1v1h-1zM506 474h1v1h-1zM540 474h1v1h-1zM574 474h1v1h-1zM608 474h1v1h-1zM676 474h1v1h-1zM710 474h1v1h-1zM744 474h1v1h-1zM778 474h1v1h-1zM846 474h1v1h-1zM880 474h1v1h-1zM913 474h1v1h-1zM947 474h1v1h-1zM1015 474h1v1h-1zM1049 474h1v1h-1zM1083 474h1v1h-1zM1117 474h1v1h-1zM1185 474h1v1h-1zM1219 474h1v1h-1zM1253 474h1v1h-1zM1287 474h1v1h-1zM1355 474h1v1h-1zM1389 474h1v1h-1zM1423 474h1v1h-1zM1457 474h1v1h-1zM1525 474h1v1h-1zM1559 474h1v1h-1zM1593 474h1v1h-1zM1627 474h1v1h-1zM30 496h1v1h-1zM64 496h1v1h-1zM98 496h1v1h-1zM166 496h1v1h-1zM200 496h1v1h-1zM234 496h1v1h-1zM268 496h1v1h-1zM336 496h1v1h-1zM370 496h1v1h-1zM404 496h1v1h-1zM438 496h1v1h-1zM506 496h1v1h-1zM540 496h1v1h-1zM574 496h1v1h-1zM608 496h1v1h-1zM676 496h1v1h-1zM710 496h1v1h-1zM744 496h1v1h-1zM778 496h1v1h-1zM846 496h1v1h-1zM880 496h1v1h-1zM913 496h1v1h-1zM947 496h1v1h-1zM1015 496h1v1h-1zM1049 496h1v1h-1zM1083 496h1v1h-1zM1117 496h1v1h-1zM1185 496h1v1h-1zM1219 496h1v1h-1zM1253 496h1v1h-1zM1287 496h1v1h-1zM1355 496h1v1h-1zM1389 496h1v1h-1zM1423 496h1v1h-1zM1457 496h1v1h-1zM1525 496h1v1h-1zM1559 496h1v1h-1zM1593 496h1v1h-1zM1627 496h1v1h-1zM30 518h1v1h-1zM64 518h1v1h-1zM98 518h1v1h-1zM166 518h1v1h-1zM200 518h1v1h-1zM234 518h1v1h-1zM268 518h1v1h-1zM336 518h1v1h-1zM370 518h1v1h-1zM404 518h1v1h-1zM438 518h1v1h-1zM506 518h1v1h-1zM540 518h1v1h-1zM574 518h1v1h-1zM608 518h1v1h-1zM676 518h1v1h-1zM710 518h1v1h-1zM744 518h1v1h-1zM778 518h1v1h-1zM846 518h1v1h-1zM880 518h1v1h-1zM913 518h1v1h-1zM947 518h1v1h-1zM1015 518h1v1h-1zM1049 518h1v1h-1zM1083 518h1v1h-1zM1117 518h1v1h-1zM1185 518h1v1h-1zM1219 518h1v1h-1zM1253 518h1v1h-1zM1287 518h1v1h-1zM1355 518h1v1h-1zM1389 518h1v1h-1zM1423 518h1v1h-1zM1457 518h1v1h-1zM1525 518h1v1h-1zM1559 518h1v1h-1zM1593 518h1v1h-1zM1627 518h1v1h-1zM30 543h1v1h-1zM64 543h1v1h-1zM98 543h1v1h-1zM166 543h1v1h-1zM200 543h1v1h-1zM234 543h1v1h-1zM268 543h1v1h-1zM336 543h1v1h-1zM370 543h1v1h-1zM404 543h1v1h-1zM438 543h1v1h-1zM506 543h1v1h-1zM540 543h1v1h-1zM574 543h1v1h-1zM608 543h1v1h-1zM676 543h1v1h-1zM710 543h1v1h-1zM744 543h1v1h-1zM778 543h1v1h-1zM846 543h1v1h-1zM880 543h1v1h-1zM913 543h1v1h-1zM947 543h1v1h-1zM1015 543h1v1h-1zM1049 543h1v1h-1zM1083 543h1v1h-1zM1117 543h1v1h-1zM1185 543h1v1h-1zM1219 543h1v1h-1zM1253 543h1v1h-1zM1287 543h1v1h-1zM1355 543h1v1h-1zM1389 543h1v1h-1zM1423 543h1v1h-1zM1457 543h1v1h-1zM1525 543h1v1h-1zM1559 543h1v1h-1zM1593 543h1v1h-1zM1627 543h1v1h-1zM30 565h1v1h-1zM64 565h1v1h-1zM98 565h1v1h-1zM166 565h1v1h-1zM200 565h1v1h-1zM234 565h1v1h-1zM268 565h1v1h-1zM336 565h1v1h-1zM370 565h1v1h-1zM404 565h1v1h-1zM438 565h1v1h-1zM506 565h1v1h-1zM540 565h1v1h-1zM574 565h1v1h-1zM608 565h1v1h-1zM676 565h1v1h-1zM710 565h1v1h-1zM744 565h1v1h-1zM778 565h1v1h-1zM846 565h1v1h-1zM880 565h1v1h-1zM913 565h1v1h-1zM947 565h1v1h-1zM1015 565h1v1h-1zM1049 565h1v1h-1zM1083 565h1v1h-1zM1117 565h1v1h-1zM1185 565h1v1h-1zM1219 565h1v1h-1zM1253 565h1v1h-1zM1287 565h1v1h-1zM1355 565h1v1h-1zM1389 565h1v1h-1zM1423 565h1v1h-1zM1457 565h1v1h-1zM1525 565h1v1h-1zM1559 565h1v1h-1zM1593 565h1v1h-1zM1627 565h1v1h-1zM30 587h1v1h-1zM64 587h1v1h-1zM98 587h1v1h-1zM166 587h1v1h-1zM200 587h1v1h-1zM234 587h1v1h-1zM268 587h1v1h-1zM336 587h1v1h-1zM370 587h1v1h-1zM404 587h1v1h-1zM438 587h1v1h-1zM506 587h1v1h-1zM540 587h1v1h-1zM574 587h1v1h-1zM608 587h1v1h-1zM676 587h1v1h-1zM710 587h1v1h-1zM744 587h1v1h-1zM778 587h1v1h-1zM846 587h1v1h-1zM880 587h1v1h-1zM913 587h1v1h-1zM947 587h1v1h-1zM1015 587h1v1h-1zM1049 587h1v1h-1zM1083 587h1v1h-1zM1117 587h1v1h-1zM1185 587h1v1h-1zM1219 587h1v1h-1zM1253 587h1v1h-1zM1287 587h1v1h-1zM1355 587h1v1h-1zM1389 587h1v1h-1zM1423 587h1v1h-1zM1457 587h1v1h-1zM1525 587h1v1h-1zM1559 587h1v1h-1zM1593 587h1v1h-1zM1627 587h1v1h-1zM30 609h1v1h-1zM64 609h1v1h-1zM98 609h1v1h-1zM166 609h1v1h-1zM200 609h1v1h-1zM234 609h1v1h-1zM268 609h1v1h-1zM336 609h1v1h-1zM370 609h1v1h-1zM404 609h1v1h-1zM438 609h1v1h-1zM506 609h1v1h-1zM540 609h1v1h-1zM574 609h1v1h-1zM608 609h1v1h-1zM676 609h1v1h-1zM710 609h1v1h-1zM744 609h1v1h-1zM778 609h1v1h-1zM846 609h1v1h-1zM880 609h1v1h-1zM913 609h1v1h-1zM947 609h1v1h-1zM1015 609h1v1h-1zM1049 609h1v1h-1zM1083 609h1v1h-1zM1117 609h1v1h-1zM1185 609h1v1h-1zM1219 609h1v1h-1zM1253 609h1v1h-1zM1287 609h1v1h-1zM1355 609h1v1h-1zM1389 609h1v1h-1zM1423 609h1v1h-1zM1457 609h1v1h-1zM1525 609h1v1h-1zM1559 609h1v1h-1zM1593 609h1v1h-1zM1627 609h1v1h-1zM30 631h1v1h-1zM64 631h1v1h-1zM98 631h1v1h-1zM166 631h1v1h-1zM200 631h1v1h-1zM234 631h1v1h-1zM268 631h1v1h-1zM336 631h1v1h-1zM370 631h1v1h-1zM404 631h1v1h-1zM438 631h1v1h-1zM506 631h1v1h-1zM540 631h1v1h-1zM574 631h1v1h-1zM608 631h1v1h-1zM676 631h1v1h-1zM710 631h1v1h-1zM744 631h1v1h-1zM778 631h1v1h-1zM846 631h1v1h-1zM880 631h1v1h-1zM913 631h1v1h-1zM947 631h1v1h-1zM1015 631h1v1h-1zM1049 631h1v1h-1zM1083 631h1v1h-1zM1117 631h1v1h-1zM1185 631h1v1h-1zM1219 631h1v1h-1zM1253 631h1v1h-1zM1287 631h1v1h-1zM1355 631h1v1h-1zM1389 631h1v1h-1zM1423 631h1v1h-1zM1457 631h1v1h-1zM1525 631h1v1h-1zM1559 631h1v1h-1zM1593 631h1v1h-1zM1627 631h1v1h-1zM30 653h1v1h-1zM64 653h1v1h-1zM98 653h1v1h-1zM166 653h1v1h-1zM200 653h1v1h-1zM234 653h1v1h-1zM268 653h1v1h-1zM336 653h1v1h-1zM370 653h1v1h-1zM404 653h1v1h-1zM438 653h1v1h-1zM506 653h1v1h-1zM540 653h1v1h-1zM574 653h1v1h-1zM608 653h1v1h-1zM676 653h1v1h-1zM710 653h1v1h-1zM744 653h1v1h-1zM778 653h1v1h-1zM846 653h1v1h-1zM880 653h1v1h-1zM913 653h1v1h-1zM947 653h1v1h-1zM1015 653h1v1h-1zM1049 653h1v1h-1zM1083 653h1v1h-1zM1117 653h1v1h-1zM1185 653h1v1h-1zM1219 653h1v1h-1zM1253 653h1v1h-1zM1287 653h1v1h-1zM1355 653h1v1h-1zM1389 653h1v1h-1zM1423 653h1v1h-1zM1457 653h1v1h-1zM1525 653h1v1h-1zM1559 653h1v1h-1zM1593 653h1v1h-1zM1627 653h1v1h-1zM30 675h1v1h-1zM64 675h1v1h-1zM98 675h1v1h-1zM166 675h1v1h-1zM200 675h1v1h-1zM234 675h1v1h-1zM268 675h1v1h-1zM336 675h1v1h-1zM370 675h1v1h-1zM404 675h1v1h-1zM438 675h1v1h-1zM506 675h1v1h-1zM540 675h1v1h-1zM574 675h1v1h-1zM608 675h1v1h-1zM676 675h1v1h-1zM710 675h1v1h-1zM744 675h1v1h-1zM778 675h1v1h-1zM846 675h1v1h-1zM880 675h1v1h-1zM913 675h1v1h-1zM947 675h1v1h-1zM1015 675h1v1h-1zM1049 675h1v1h-1zM1083 675h1v1h-1zM1117 675h1v1h-1zM1185 675h1v1h-1zM1219 675h1v1h-1zM1253 675h1v1h-1zM1287 675h1v1h-1zM1355 675h1v1h-1zM1389 675h1v1h-1zM1423 675h1v1h-1zM1457 675h1v1h-1zM1525 675h1v1h-1zM1559 675h1v1h-1zM1593 675h1v1h-1zM1627 675h1v1h-1zM30 697h1v1h-1zM64 697h1v1h-1zM98 697h1v1h-1zM166 697h1v1h-1zM200 697h1v1h-1zM234 697h1v1h-1zM268 697h1v1h-1zM336 697h1v1h-1zM370 697h1v1h-1zM404 697h1v1h-1zM438 697h1v1h-1zM506 697h1v1h-1zM540 697h1v1h-1zM574 697h1v1h-1zM608 697h1v1h-1zM676 697h1v1h-1zM710 697h1v1h-1zM744 697h1v1h-1zM778 697h1v1h-1zM846 697h1v1h-1zM880 697h1v1h-1zM913 697h1v1h-1zM947 697h1v1h-1zM1015 697h1v1h-1zM1049 697h1v1h-1zM1083 697h1v1h-1zM1117 697h1v1h-1zM1185 697h1v1h-1zM1219 697h1v1h-1zM1253 697h1v1h-1zM1287 697h1v1h-1zM1355 697h1v1h-1zM1389 697h1v1h-1zM1423 697h1v1h-1zM1457 697h1v1h-1zM1525 697h1v1h-1zM1559 697h1v1h-1zM1593 697h1v1h-1zM1627 697h1v1h-1zM30 719h1v1h-1zM64 719h1v1h-1zM98 719h1v1h-1zM166 719h1v1h-1zM200 719h1v1h-1zM234 719h1v1h-1zM268 719h1v1h-1zM336 719h1v1h-1zM370 719h1v1h-1zM404 719h1v1h-1zM438 719h1v1h-1zM506 719h1v1h-1zM540 719h1v1h-1zM574 719h1v1h-1zM608 719h1v1h-1zM676 719h1v1h-1zM710 719h1v1h-1zM744 719h1v1h-1zM778 719h1v1h-1zM846 719h1v1h-1zM880 719h1v1h-1zM913 719h1v1h-1zM947 719h1v1h-1zM1015 719h1v1h-1zM1049 719h1v1h-1zM1083 719h1v1h-1zM1117 719h1v1h-1zM1185 719h1v1h-1zM1219 719h1v1h-1zM1253 719h1v1h-1zM1287 719h1v1h-1zM1355 719h1v1h-1zM1389 719h1v1h-1zM1423 719h1v1h-1zM1457 719h1v1h-1zM1525 719h1v1h-1zM1559 719h1v1h-1zM1593 719h1v1h-1zM1627 719h1v1h-1zM30 743h1v1h-1zM64 743h1v1h-1zM98 743h1v1h-1zM166 743h1v1h-1zM200 743h1v1h-1zM234 743h1v1h-1zM268 743h1v1h-1zM336 743h1v1h-1zM370 743h1v1h-1zM404 743h1v1h-1zM438 743h1v1h-1zM506 743h1v1h-1zM540 743h1v1h-1zM574 743h1v1h-1zM608 743h1v1h-1zM676 743h1v1h-1zM710 743h1v1h-1zM744 743h1v1h-1zM778 743h1v1h-1zM846 743h1v1h-1zM880 743h1v1h-1zM913 743h1v1h-1zM947 743h1v1h-1zM1015 743h1v1h-1zM1049 743h1v1h-1zM1083 743h1v1h-1zM1117 743h1v1h-1zM1185 743h1v1h-1zM1219 743h1v1h-1zM1253 743h1v1h-1zM1287 743h1v1h-1zM1355 743h1v1h-1zM1389 743h1v1h-1zM1423 743h1v1h-1zM1457 743h1v1h-1zM1525 743h1v1h-1zM1559 743h1v1h-1zM1593 743h1v1h-1zM1627 743h1v1h-1zM30 765h1v1h-1zM64 765h1v1h-1zM98 765h1v1h-1zM166 765h1v1h-1zM200 765h1v1h-1zM234 765h1v1h-1zM268 765h1v1h-1zM336 765h1v1h-1zM370 765h1v1h-1zM404 765h1v1h-1zM438 765h1v1h-1zM506 765h1v1h-1zM540 765h1v1h-1zM574 765h1v1h-1zM608 765h1v1h-1zM676 765h1v1h-1zM710 765h1v1h-1zM744 765h1v1h-1zM778 765h1v1h-1zM846 765h1v1h-1zM880 765h1v1h-1zM913 765h1v1h-1zM947 765h1v1h-1zM1015 765h1v1h-1zM1049 765h1v1h-1zM1083 765h1v1h-1zM1117 765h1v1h-1zM1185 765h1v1h-1zM1219 765h1v1h-1zM1253 765h1v1h-1zM1287 765h1v1h-1zM1355 765h1v1h-1zM1389 765h1v1h-1zM1423 765h1v1h-1zM1457 765h1v1h-1zM1525 765h1v1h-1zM1559 765h1v1h-1zM1593 765h1v1h-1zM1627 765h1v1h-1zM30 787h1v1h-1zM64 787h1v1h-1zM98 787h1v1h-1zM166 787h1v1h-1zM200 787h1v1h-1zM234 787h1v1h-1zM268 787h1v1h-1zM336 787h1v1h-1zM370 787h1v1h-1zM404 787h1v1h-1zM438 787h1v1h-1zM506 787h1v1h-1zM540 787h1v1h-1zM574 787h1v1h-1zM608 787h1v1h-1zM676 787h1v1h-1zM710 787h1v1h-1zM744 787h1v1h-1zM778 787h1v1h-1zM846 787h1v1h-1zM880 787h1v1h-1zM913 787h1v1h-1zM947 787h1v1h-1zM1015 787h1v1h-1zM1049 787h1v1h-1zM1083 787h1v1h-1zM1117 787h1v1h-1zM1185 787h1v1h-1zM1219 787h1v1h-1zM1253 787h1v1h-1zM1287 787h1v1h-1zM1355 787h1v1h-1zM1389 787h1v1h-1zM1423 787h1v1h-1zM1457 787h1v1h-1zM1525 787h1v1h-1zM1559 787h1v1h-1zM1593 787h1v1h-1zM1627 787h1v1h-1zM30 810h1v1h-1zM64 810h1v1h-1zM98 810h1v1h-1zM166 810h1v1h-1zM200 810h1v1h-1zM234 810h1v1h-1zM268 810h1v1h-1zM336 810h1v1h-1zM370 810h1v1h-1zM404 810h1v1h-1zM438 810h1v1h-1zM506 810h1v1h-1zM540 810h1v1h-1zM574 810h1v1h-1zM608 810h1v1h-1zM676 810h1v1h-1zM710 810h1v1h-1zM744 810h1v1h-1zM778 810h1v1h-1zM846 810h1v1h-1zM880 810h1v1h-1zM913 810h1v1h-1zM947 810h1v1h-1zM1015 810h1v1h-1zM1049 810h1v1h-1zM1083 810h1v1h-1zM1117 810h1v1h-1zM1185 810h1v1h-1zM1219 810h1v1h-1zM1253 810h1v1h-1zM1287 810h1v1h-1zM1355 810h1v1h-1zM1389 810h1v1h-1zM1423 810h1v1h-1zM1457 810h1v1h-1zM1525 810h1v1h-1zM1559 810h1v1h-1zM1593 810h1v1h-1zM1627 810h1v1h-1zM30 832h1v1h-1zM64 832h1v1h-1zM98 832h1v1h-1zM166 832h1v1h-1zM200 832h1v1h-1zM234 832h1v1h-1zM268 832h1v1h-1zM336 832h1v1h-1zM370 832h1v1h-1zM404 832h1v1h-1zM438 832h1v1h-1zM506 832h1v1h-1zM540 832h1v1h-1zM574 832h1v1h-1zM608 832h1v1h-1zM676 832h1v1h-1zM710 832h1v1h-1zM744 832h1v1h-1zM778 832h1v1h-1zM846 832h1v1h-1zM880 832h1v1h-1zM913 832h1v1h-1zM947 832h1v1h-1zM1015 832h1v1h-1zM1049 832h1v1h-1zM1083 832h1v1h-1zM1117 832h1v1h-1zM1185 832h1v1h-1zM1219 832h1v1h-1zM1253 832h1v1h-1zM1287 832h1v1h-1zM1355 832h1v1h-1zM1389 832h1v1h-1zM1423 832h1v1h-1zM1457 832h1v1h-1zM1525 832h1v1h-1zM1559 832h1v1h-1zM1593 832h1v1h-1zM1627 832h1v1h-1zM30 854h1v1h-1zM64 854h1v1h-1zM98 854h1v1h-1zM166 854h1v1h-1zM200 854h1v1h-1zM234 854h1v1h-1zM268 854h1v1h-1zM336 854h1v1h-1zM370 854h1v1h-1zM404 854h1v1h-1zM438 854h1v1h-1zM506 854h1v1h-1zM540 854h1v1h-1zM574 854h1v1h-1zM608 854h1v1h-1zM676 854h1v1h-1zM710 854h1v1h-1zM744 854h1v1h-1zM778 854h1v1h-1zM846 854h1v1h-1zM880 854h1v1h-1zM913 854h1v1h-1zM947 854h1v1h-1zM1015 854h1v1h-1zM1049 854h1v1h-1zM1083 854h1v1h-1zM1117 854h1v1h-1zM1185 854h1v1h-1zM1219 854h1v1h-1zM1253 854h1v1h-1zM1287 854h1v1h-1zM1355 854h1v1h-1zM1389 854h1v1h-1zM1423 854h1v1h-1zM1457 854h1v1h-1zM1525 854h1v1h-1zM1559 854h1v1h-1zM1593 854h1v1h-1zM1627 854h1v1h-1zM30 876h1v1h-1zM64 876h1v1h-1zM98 876h1v1h-1zM166 876h1v1h-1zM200 876h1v1h-1zM234 876h1v1h-1zM268 876h1v1h-1zM336 876h1v1h-1zM370 876h1v1h-1zM404 876h1v1h-1zM438 876h1v1h-1zM506 876h1v1h-1zM540 876h1v1h-1zM574 876h1v1h-1zM608 876h1v1h-1zM676 876h1v1h-1zM710 876h1v1h-1zM744 876h1v1h-1zM778 876h1v1h-1zM846 876h1v1h-1zM880 876h1v1h-1zM913 876h1v1h-1zM947 876h1v1h-1zM1015 876h1v1h-1zM1049 876h1v1h-1zM1083 876h1v1h-1zM1117 876h1v1h-1zM1185 876h1v1h-1zM1219 876h1v1h-1zM1253 876h1v1h-1zM1287 876h1v1h-1zM1355 876h1v1h-1zM1389 876h1v1h-1zM1423 876h1v1h-1zM1457 876h1v1h-1zM1525 876h1v1h-1zM1559 876h1v1h-1zM1593 876h1v1h-1zM1627 876h1v1h-1zM30 898h1v1h-1zM64 898h1v1h-1zM98 898h1v1h-1zM166 898h1v1h-1zM200 898h1v1h-1zM234 898h1v1h-1zM268 898h1v1h-1zM336 898h1v1h-1zM370 898h1v1h-1zM404 898h1v1h-1zM438 898h1v1h-1zM506 898h1v1h-1zM540 898h1v1h-1zM574 898h1v1h-1zM608 898h1v1h-1zM676 898h1v1h-1zM710 898h1v1h-1zM744 898h1v1h-1zM778 898h1v1h-1zM846 898h1v1h-1zM880 898h1v1h-1zM913 898h1v1h-1zM947 898h1v1h-1zM1015 898h1v1h-1zM1049 898h1v1h-1zM1083 898h1v1h-1zM1117 898h1v1h-1zM1185 898h1v1h-1zM1219 898h1v1h-1zM1253 898h1v1h-1zM1287 898h1v1h-1zM1355 898h1v1h-1zM1389 898h1v1h-1zM1423 898h1v1h-1zM1457 898h1v1h-1zM1525 898h1v1h-1zM1559 898h1v1h-1zM1593 898h1v1h-1zM1627 898h1v1h-1zM30 921h1v1h-1zM64 921h1v1h-1zM98 921h1v1h-1zM166 921h1v1h-1zM200 921h1v1h-1zM234 921h1v1h-1zM268 921h1v1h-1zM336 921h1v1h-1zM370 921h1v1h-1zM404 921h1v1h-1zM438 921h1v1h-1zM506 921h1v1h-1zM540 921h1v1h-1zM574 921h1v1h-1zM608 921h1v1h-1zM676 921h1v1h-1zM710 921h1v1h-1zM744 921h1v1h-1zM778 921h1v1h-1zM846 921h1v1h-1zM880 921h1v1h-1zM913 921h1v1h-1zM947 921h1v1h-1zM1015 921h1v1h-1zM1049 921h1v1h-1zM1083 921h1v1h-1zM1117 921h1v1h-1zM1185 921h1v1h-1zM1219 921h1v1h-1zM1253 921h1v1h-1zM1287 921h1v1h-1zM1355 921h1v1h-1zM1389 921h1v1h-1zM1423 921h1v1h-1zM1457 921h1v1h-1zM1525 921h1v1h-1zM1559 921h1v1h-1zM1593 921h1v1h-1zM1627 921h1v1h-1zM30 943h1v1h-1zM64 943h1v1h-1zM98 943h1v1h-1zM166 943h1v1h-1zM200 943h1v1h-1zM234 943h1v1h-1zM268 943h1v1h-1zM336 943h1v1h-1zM370 943h1v1h-1zM404 943h1v1h-1zM438 943h1v1h-1zM506 943h1v1h-1zM540 943h1v1h-1zM574 943h1v1h-1zM608 943h1v1h-1zM676 943h1v1h-1zM710 943h1v1h-1zM744 943h1v1h-1zM778 943h1v1h-1zM846 943h1v1h-1zM880 943h1v1h-1zM913 943h1v1h-1zM947 943h1v1h-1zM1015 943h1v1h-1zM1049 943h1v1h-1zM1083 943h1v1h-1zM1117 943h1v1h-1zM1185 943h1v1h-1zM1219 943h1v1h-1zM1253 943h1v1h-1zM1287 943h1v1h-1zM1355 943h1v1h-1zM1389 943h1v1h-1zM1423 943h1v1h-1zM1457 943h1v1h-1zM1525 943h1v1h-1zM1559 943h1v1h-1zM1593 943h1v1h-1zM1627 943h1v1h-1zM132 80h1v1h-1zM132 85h1v1h-1zM132 89h1v1h-1zM132 94h1v1h-1zM132 98h1v1h-1zM132 102h1v1h-1zM132 107h1v1h-1zM132 111h1v1h-1zM132 116h1v1h-1zM132 120h1v1h-1zM132 124h1v1h-1zM132 129h1v1h-1zM132 133h1v1h-1zM132 138h1v1h-1zM132 142h1v1h-1zM132 146h1v1h-1zM132 151h1v1h-1zM132 155h1v1h-1zM132 160h1v1h-1zM132 164h1v1h-1zM132 168h1v1h-1zM132 173h1v1h-1zM132 177h1v1h-1zM132 182h1v1h-1zM132 186h1v1h-1zM132 190h1v1h-1zM132 195h1v1h-1zM132 199h1v1h-1zM132 204h1v1h-1zM132 208h1v1h-1zM132 212h1v1h-1zM132 217h1v1h-1zM132 221h1v1h-1zM132 226h1v1h-1zM132 230h1v1h-1zM132 234h1v1h-1zM132 239h1v1h-1zM132 243h1v1h-1zM132 248h1v1h-1zM132 252h1v1h-1zM132 256h1v1h-1zM132 261h1v1h-1zM132 265h1v1h-1zM132 270h1v1h-1zM132 274h1v1h-1zM132 278h1v1h-1zM132 283h1v1h-1zM132 287h1v1h-1zM132 292h1v1h-1zM132 296h1v1h-1zM302 80h1v1h-1zM302 85h1v1h-1zM302 89h1v1h-1zM302 94h1v1h-1zM302 98h1v1h-1zM302 102h1v1h-1zM302 107h1v1h-1zM302 111h1v1h-1zM302 116h1v1h-1zM302 120h1v1h-1zM302 124h1v1h-1zM302 129h1v1h-1zM302 133h1v1h-1zM302 138h1v1h-1zM302 142h1v1h-1zM302 146h1v1h-1zM302 151h1v1h-1zM302 155h1v1h-1zM302 160h1v1h-1zM302 164h1v1h-1zM302 168h1v1h-1zM302 173h1v1h-1zM302 177h1v1h-1zM302 182h1v1h-1zM302 186h1v1h-1zM302 190h1v1h-1zM302 195h1v1h-1zM302 199h1v1h-1zM302 204h1v1h-1zM302 208h1v1h-1zM302 212h1v1h-1zM302 217h1v1h-1zM302 221h1v1h-1zM302 226h1v1h-1zM302 230h1v1h-1zM302 234h1v1h-1zM302 239h1v1h-1zM302 243h1v1h-1zM302 248h1v1h-1zM302 252h1v1h-1zM302 256h1v1h-1zM302 261h1v1h-1zM302 265h1v1h-1zM302 270h1v1h-1zM302 274h1v1h-1zM302 278h1v1h-1zM302 283h1v1h-1zM302 287h1v1h-1zM302 292h1v1h-1zM302 296h1v1h-1zM472 80h1v1h-1zM472 85h1v1h-1zM472 89h1v1h-1zM472 94h1v1h-1zM472 98h1v1h-1zM472 102h1v1h-1zM472 107h1v1h-1zM472 111h1v1h-1zM472 116h1v1h-1zM472 120h1v1h-1zM472 124h1v1h-1zM472 129h1v1h-1zM472 133h1v1h-1zM472 138h1v1h-1zM472 142h1v1h-1zM472 146h1v1h-1zM472 151h1v1h-1zM472 155h1v1h-1zM472 160h1v1h-1zM472 164h1v1h-1zM472 168h1v1h-1zM472 173h1v1h-1zM472 177h1v1h-1zM472 182h1v1h-1zM472 186h1v1h-1zM472 190h1v1h-1zM472 195h1v1h-1zM472 199h1v1h-1zM472 204h1v1h-1zM472 208h1v1h-1zM472 212h1v1h-1zM472 217h1v1h-1zM472 221h1v1h-1zM472 226h1v1h-1zM472 230h1v1h-1zM472 234h1v1h-1zM472 239h1v1h-1zM472 243h1v1h-1zM472 248h1v1h-1zM472 252h1v1h-1zM472 256h1v1h-1zM472 261h1v1h-1zM472 265h1v1h-1zM472 270h1v1h-1zM472 274h1v1h-1zM472 278h1v1h-1zM472 283h1v1h-1zM472 287h1v1h-1zM472 292h1v1h-1zM472 296h1v1h-1zM642 80h1v1h-1zM642 85h1v1h-1zM642 89h1v1h-1zM642 94h1v1h-1zM642 98h1v1h-1zM642 102h1v1h-1zM642 107h1v1h-1zM642 111h1v1h-1zM642 116h1v1h-1zM642 120h1v1h-1zM642 124h1v1h-1zM642 129h1v1h-1zM642 133h1v1h-1zM642 138h1v1h-1zM642 142h1v1h-1zM642 146h1v1h-1zM642 151h1v1h-1zM642 155h1v1h-1zM642 160h1v1h-1zM642 164h1v1h-1zM642 168h1v1h-1zM642 173h1v1h-1zM642 177h1v1h-1zM642 182h1v1h-1zM642 186h1v1h-1zM642 190h1v1h-1zM642 195h1v1h-1zM642 199h1v1h-1zM642 204h1v1h-1zM642 208h1v1h-1zM642 212h1v1h-1zM642 217h1v1h-1zM642 221h1v1h-1zM642 226h1v1h-1zM642 230h1v1h-1zM642 234h1v1h-1zM642 239h1v1h-1zM642 243h1v1h-1zM642 248h1v1h-1zM642 252h1v1h-1zM642 256h1v1h-1zM642 261h1v1h-1zM642 265h1v1h-1zM642 270h1v1h-1zM642 274h1v1h-1zM642 278h1v1h-1zM642 283h1v1h-1zM642 287h1v1h-1zM642 292h1v1h-1zM642 296h1v1h-1zM981 80h1v1h-1zM981 85h1v1h-1zM981 89h1v1h-1zM981 94h1v1h-1zM981 98h1v1h-1zM981 102h1v1h-1zM981 107h1v1h-1zM981 111h1v1h-1zM981 116h1v1h-1zM981 120h1v1h-1zM981 124h1v1h-1zM981 129h1v1h-1zM981 133h1v1h-1zM981 138h1v1h-1zM981 142h1v1h-1zM981 146h1v1h-1zM981 151h1v1h-1zM981 155h1v1h-1zM981 160h1v1h-1zM981 164h1v1h-1zM981 168h1v1h-1zM981 173h1v1h-1zM981 177h1v1h-1zM981 182h1v1h-1zM981 186h1v1h-1zM981 190h1v1h-1zM981 195h1v1h-1zM981 199h1v1h-1zM981 204h1v1h-1zM981 208h1v1h-1zM981 212h1v1h-1zM981 217h1v1h-1zM981 221h1v1h-1zM981 226h1v1h-1zM981 230h1v1h-1zM981 234h1v1h-1zM981 239h1v1h-1zM981 243h1v1h-1zM981 248h1v1h-1zM981 252h1v1h-1zM981 256h1v1h-1zM981 261h1v1h-1zM981 265h1v1h-1zM981 270h1v1h-1zM981 274h1v1h-1zM981 278h1v1h-1zM981 283h1v1h-1zM981 287h1v1h-1zM981 292h1v1h-1zM981 296h1v1h-1zM1151 80h1v1h-1zM1151 85h1v1h-1zM1151 89h1v1h-1zM1151 94h1v1h-1zM1151 98h1v1h-1zM1151 102h1v1h-1zM1151 107h1v1h-1zM1151 111h1v1h-1zM1151 116h1v1h-1zM1151 120h1v1h-1zM1151 124h1v1h-1zM1151 129h1v1h-1zM1151 133h1v1h-1zM1151 138h1v1h-1zM1151 142h1v1h-1zM1151 146h1v1h-1zM1151 151h1v1h-1zM1151 155h1v1h-1zM1151 160h1v1h-1zM1151 164h1v1h-1zM1151 168h1v1h-1zM1151 173h1v1h-1zM1151 177h1v1h-1zM1151 182h1v1h-1zM1151 186h1v1h-1zM1151 190h1v1h-1zM1151 195h1v1h-1zM1151 199h1v1h-1zM1151 204h1v1h-1zM1151 208h1v1h-1zM1151 212h1v1h-1zM1151 217h1v1h-1zM1151 221h1v1h-1zM1151 226h1v1h-1zM1151 230h1v1h-1zM1151 234h1v1h-1zM1151 239h1v1h-1zM1151 243h1v1h-1zM1151 248h1v1h-1zM1151 252h1v1h-1zM1151 256h1v1h-1zM1151 261h1v1h-1zM1151 265h1v1h-1zM1151 270h1v1h-1zM1151 274h1v1h-1zM1151 278h1v1h-1zM1151 283h1v1h-1zM1151 287h1v1h-1zM1151 292h1v1h-1zM1151 296h1v1h-1zM1321 80h1v1h-1zM1321 85h1v1h-1zM1321 89h1v1h-1zM1321 94h1v1h-1zM1321 98h1v1h-1zM1321 102h1v1h-1zM1321 107h1v1h-1zM1321 111h1v1h-1zM1321 116h1v1h-1zM1321 120h1v1h-1zM1321 124h1v1h-1zM1321 129h1v1h-1zM1321 133h1v1h-1zM1321 138h1v1h-1zM1321 142h1v1h-1zM1321 146h1v1h-1zM1321 151h1v1h-1zM1321 155h1v1h-1zM1321 160h1v1h-1zM1321 164h1v1h-1zM1321 168h1v1h-1zM1321 173h1v1h-1zM1321 177h1v1h-1zM1321 182h1v1h-1zM1321 186h1v1h-1zM1321 190h1v1h-1zM1321 195h1v1h-1zM1321 199h1v1h-1zM1321 204h1v1h-1zM1321 208h1v1h-1zM1321 212h1v1h-1zM1321 217h1v1h-1zM1321 221h1v1h-1zM1321 226h1v1h-1zM1321 230h1v1h-1zM1321 234h1v1h-1zM1321 239h1v1h-1zM1321 243h1v1h-1zM1321 248h1v1h-1zM1321 252h1v1h-1zM1321 256h1v1h-1zM1321 261h1v1h-1zM1321 265h1v1h-1zM1321 270h1v1h-1zM1321 274h1v1h-1zM1321 278h1v1h-1zM1321 283h1v1h-1zM1321 287h1v1h-1zM1321 292h1v1h-1zM1321 296h1v1h-1zM1491 80h1v1h-1zM1491 85h1v1h-1zM1491 89h1v1h-1zM1491 94h1v1h-1zM1491 98h1v1h-1zM1491 102h1v1h-1zM1491 107h1v1h-1zM1491 111h1v1h-1zM1491 116h1v1h-1zM1491 120h1v1h-1zM1491 124h1v1h-1zM1491 129h1v1h-1zM1491 133h1v1h-1zM1491 138h1v1h-1zM1491 142h1v1h-1zM1491 146h1v1h-1zM1491 151h1v1h-1zM1491 155h1v1h-1zM1491 160h1v1h-1zM1491 164h1v1h-1zM1491 168h1v1h-1zM1491 173h1v1h-1zM1491 177h1v1h-1zM1491 182h1v1h-1zM1491 186h1v1h-1zM1491 190h1v1h-1zM1491 195h1v1h-1zM1491 199h1v1h-1zM1491 204h1v1h-1zM1491 208h1v1h-1zM1491 212h1v1h-1zM1491 217h1v1h-1zM1491 221h1v1h-1zM1491 226h1v1h-1zM1491 230h1v1h-1zM1491 234h1v1h-1zM1491 239h1v1h-1zM1491 243h1v1h-1zM1491 248h1v1h-1zM1491 252h1v1h-1zM1491 256h1v1h-1zM1491 261h1v1h-1zM1491 265h1v1h-1zM1491 270h1v1h-1zM1491 274h1v1h-1zM1491 278h1v1h-1zM1491 283h1v1h-1zM1491 287h1v1h-1zM1491 292h1v1h-1zM1491 296h1v1h-1zM1661 80h1v1h-1zM1661 85h1v1h-1zM1661 89h1v1h-1zM1661 94h1v1h-1zM1661 98h1v1h-1zM1661 102h1v1h-1zM1661 107h1v1h-1zM1661 111h1v1h-1zM1661 116h1v1h-1zM1661 120h1v1h-1zM1661 124h1v1h-1zM1661 129h1v1h-1zM1661 133h1v1h-1zM1661 138h1v1h-1zM1661 142h1v1h-1zM1661 146h1v1h-1zM1661 151h1v1h-1zM1661 155h1v1h-1zM1661 160h1v1h-1zM1661 164h1v1h-1zM1661 168h1v1h-1zM1661 173h1v1h-1zM1661 177h1v1h-1zM1661 182h1v1h-1zM1661 186h1v1h-1zM1661 190h1v1h-1zM1661 195h1v1h-1zM1661 199h1v1h-1zM1661 204h1v1h-1zM1661 208h1v1h-1zM1661 212h1v1h-1zM1661 217h1v1h-1zM1661 221h1v1h-1zM1661 226h1v1h-1zM1661 230h1v1h-1zM1661 234h1v1h-1zM1661 239h1v1h-1zM1661 243h1v1h-1zM1661 248h1v1h-1zM1661 252h1v1h-1zM1661 256h1v1h-1zM1661 261h1v1h-1zM1661 265h1v1h-1zM1661 270h1v1h-1zM1661 274h1v1h-1zM1661 278h1v1h-1zM1661 283h1v1h-1zM1661 287h1v1h-1zM1661 292h1v1h-1zM1661 296h1v1h-1zM132 302h1v1h-1zM132 307h1v1h-1zM132 311h1v1h-1zM132 316h1v1h-1zM132 320h1v1h-1zM132 324h1v1h-1zM132 329h1v1h-1zM132 333h1v1h-1zM132 338h1v1h-1zM132 342h1v1h-1zM132 346h1v1h-1zM132 351h1v1h-1zM132 355h1v1h-1zM132 360h1v1h-1zM132 364h1v1h-1zM132 368h1v1h-1zM132 373h1v1h-1zM132 377h1v1h-1zM132 382h1v1h-1zM132 386h1v1h-1zM132 390h1v1h-1zM132 395h1v1h-1zM132 399h1v1h-1zM132 404h1v1h-1zM132 408h1v1h-1zM132 412h1v1h-1zM132 417h1v1h-1zM132 421h1v1h-1zM132 426h1v1h-1zM132 430h1v1h-1zM132 434h1v1h-1zM132 439h1v1h-1zM132 443h1v1h-1zM132 448h1v1h-1zM132 452h1v1h-1zM132 456h1v1h-1zM132 461h1v1h-1zM132 465h1v1h-1zM132 470h1v1h-1zM132 474h1v1h-1zM132 478h1v1h-1zM132 483h1v1h-1zM132 487h1v1h-1zM132 492h1v1h-1zM132 496h1v1h-1zM132 500h1v1h-1zM132 505h1v1h-1zM132 509h1v1h-1zM132 514h1v1h-1zM132 518h1v1h-1zM302 302h1v1h-1zM302 307h1v1h-1zM302 311h1v1h-1zM302 316h1v1h-1zM302 320h1v1h-1zM302 324h1v1h-1zM302 329h1v1h-1zM302 333h1v1h-1zM302 338h1v1h-1zM302 342h1v1h-1zM302 346h1v1h-1zM302 351h1v1h-1zM302 355h1v1h-1zM302 360h1v1h-1zM302 364h1v1h-1zM302 368h1v1h-1zM302 373h1v1h-1zM302 377h1v1h-1zM302 382h1v1h-1zM302 386h1v1h-1zM302 390h1v1h-1zM302 395h1v1h-1zM302 399h1v1h-1zM302 404h1v1h-1zM302 408h1v1h-1zM302 412h1v1h-1zM302 417h1v1h-1zM302 421h1v1h-1zM302 426h1v1h-1zM302 430h1v1h-1zM302 434h1v1h-1zM302 439h1v1h-1zM302 443h1v1h-1zM302 448h1v1h-1zM302 452h1v1h-1zM302 456h1v1h-1zM302 461h1v1h-1zM302 465h1v1h-1zM302 470h1v1h-1zM302 474h1v1h-1zM302 478h1v1h-1zM302 483h1v1h-1zM302 487h1v1h-1zM302 492h1v1h-1zM302 496h1v1h-1zM302 500h1v1h-1zM302 505h1v1h-1zM302 509h1v1h-1zM302 514h1v1h-1zM302 518h1v1h-1zM472 302h1v1h-1zM472 307h1v1h-1zM472 311h1v1h-1zM472 316h1v1h-1zM472 320h1v1h-1zM472 324h1v1h-1zM472 329h1v1h-1zM472 333h1v1h-1zM472 338h1v1h-1zM472 342h1v1h-1zM472 346h1v1h-1zM472 351h1v1h-1zM472 355h1v1h-1zM472 360h1v1h-1zM472 364h1v1h-1zM472 368h1v1h-1zM472 373h1v1h-1zM472 377h1v1h-1zM472 382h1v1h-1zM472 386h1v1h-1zM472 390h1v1h-1zM472 395h1v1h-1zM472 399h1v1h-1zM472 404h1v1h-1zM472 408h1v1h-1zM472 412h1v1h-1zM472 417h1v1h-1zM472 421h1v1h-1zM472 426h1v1h-1zM472 430h1v1h-1zM472 434h1v1h-1zM472 439h1v1h-1zM472 443h1v1h-1zM472 448h1v1h-1zM472 452h1v1h-1zM472 456h1v1h-1zM472 461h1v1h-1zM472 465h1v1h-1zM472 470h1v1h-1zM472 474h1v1h-1zM472 478h1v1h-1zM472 483h1v1h-1zM472 487h1v1h-1zM472 492h1v1h-1zM472 496h1v1h-1zM472 500h1v1h-1zM472 505h1v1h-1zM472 509h1v1h-1zM472 514h1v1h-1zM472 518h1v1h-1zM642 302h1v1h-1zM642 307h1v1h-1zM642 311h1v1h-1zM642 316h1v1h-1zM642 320h1v1h-1zM642 324h1v1h-1zM642 329h1v1h-1zM642 333h1v1h-1zM642 338h1v1h-1zM642 342h1v1h-1zM642 346h1v1h-1zM642 351h1v1h-1zM642 355h1v1h-1zM642 360h1v1h-1zM642 364h1v1h-1zM642 368h1v1h-1zM642 373h1v1h-1zM642 377h1v1h-1zM642 382h1v1h-1zM642 386h1v1h-1zM642 390h1v1h-1zM642 395h1v1h-1zM642 399h1v1h-1zM642 404h1v1h-1zM642 408h1v1h-1zM642 412h1v1h-1zM642 417h1v1h-1zM642 421h1v1h-1zM642 426h1v1h-1zM642 430h1v1h-1zM642 434h1v1h-1zM642 439h1v1h-1zM642 443h1v1h-1zM642 448h1v1h-1zM642 452h1v1h-1zM642 456h1v1h-1zM642 461h1v1h-1zM642 465h1v1h-1zM642 470h1v1h-1zM642 474h1v1h-1zM642 478h1v1h-1zM642 483h1v1h-1zM642 487h1v1h-1zM642 492h1v1h-1zM642 496h1v1h-1zM642 500h1v1h-1zM642 505h1v1h-1zM642 509h1v1h-1zM642 514h1v1h-1zM642 518h1v1h-1zM981 302h1v1h-1zM981 307h1v1h-1zM981 311h1v1h-1zM981 316h1v1h-1zM981 320h1v1h-1zM981 324h1v1h-1zM981 329h1v1h-1zM981 333h1v1h-1zM981 338h1v1h-1zM981 342h1v1h-1zM981 346h1v1h-1zM981 351h1v1h-1zM981 355h1v1h-1zM981 360h1v1h-1zM981 364h1v1h-1zM981 368h1v1h-1zM981 373h1v1h-1zM981 377h1v1h-1zM981 382h1v1h-1zM981 386h1v1h-1zM981 390h1v1h-1zM981 395h1v1h-1zM981 399h1v1h-1zM981 404h1v1h-1zM981 408h1v1h-1zM981 412h1v1h-1zM981 417h1v1h-1zM981 421h1v1h-1zM981 426h1v1h-1zM981 430h1v1h-1zM981 434h1v1h-1zM981 439h1v1h-1zM981 443h1v1h-1zM981 448h1v1h-1zM981 452h1v1h-1zM981 456h1v1h-1zM981 461h1v1h-1zM981 465h1v1h-1zM981 470h1v1h-1zM981 474h1v1h-1zM981 478h1v1h-1zM981 483h1v1h-1zM981 487h1v1h-1zM981 492h1v1h-1zM981 496h1v1h-1zM981 500h1v1h-1zM981 505h1v1h-1zM981 509h1v1h-1zM981 514h1v1h-1zM981 518h1v1h-1zM1151 302h1v1h-1zM1151 307h1v1h-1zM1151 311h1v1h-1zM1151 316h1v1h-1zM1151 320h1v1h-1zM1151 324h1v1h-1zM1151 329h1v1h-1zM1151 333h1v1h-1zM1151 338h1v1h-1zM1151 342h1v1h-1zM1151 346h1v1h-1zM1151 351h1v1h-1zM1151 355h1v1h-1zM1151 360h1v1h-1zM1151 364h1v1h-1zM1151 368h1v1h-1zM1151 373h1v1h-1zM1151 377h1v1h-1zM1151 382h1v1h-1zM1151 386h1v1h-1zM1151 390h1v1h-1zM1151 395h1v1h-1zM1151 399h1v1h-1zM1151 404h1v1h-1zM1151 408h1v1h-1zM1151 412h1v1h-1zM1151 417h1v1h-1zM1151 421h1v1h-1zM1151 426h1v1h-1zM1151 430h1v1h-1zM1151 434h1v1h-1zM1151 439h1v1h-1zM1151 443h1v1h-1zM1151 448h1v1h-1zM1151 452h1v1h-1zM1151 456h1v1h-1zM1151 461h1v1h-1zM1151 465h1v1h-1zM1151 470h1v1h-1zM1151 474h1v1h-1zM1151 478h1v1h-1zM1151 483h1v1h-1zM1151 487h1v1h-1zM1151 492h1v1h-1zM1151 496h1v1h-1zM1151 500h1v1h-1zM1151 505h1v1h-1zM1151 509h1v1h-1zM1151 514h1v1h-1zM1151 518h1v1h-1zM1321 302h1v1h-1zM1321 307h1v1h-1zM1321 311h1v1h-1zM1321 316h1v1h-1zM1321 320h1v1h-1zM1321 324h1v1h-1zM1321 329h1v1h-1zM1321 333h1v1h-1zM1321 338h1v1h-1zM1321 342h1v1h-1zM1321 346h1v1h-1zM1321 351h1v1h-1zM1321 355h1v1h-1zM1321 360h1v1h-1zM1321 364h1v1h-1zM1321 368h1v1h-1zM1321 373h1v1h-1zM1321 377h1v1h-1zM1321 382h1v1h-1zM1321 386h1v1h-1zM1321 390h1v1h-1zM1321 395h1v1h-1zM1321 399h1v1h-1zM1321 404h1v1h-1zM1321 408h1v1h-1zM1321 412h1v1h-1zM1321 417h1v1h-1zM1321 421h1v1h-1zM1321 426h1v1h-1zM1321 430h1v1h-1zM1321 434h1v1h-1zM1321 439h1v1h-1zM1321 443h1v1h-1zM1321 448h1v1h-1zM1321 452h1v1h-1zM1321 456h1v1h-1zM1321 461h1v1h-1zM1321 465h1v1h-1zM1321 470h1v1h-1zM1321 474h1v1h-1zM1321 478h1v1h-1zM1321 483h1v1h-1zM1321 487h1v1h-1zM1321 492h1v1h-1zM1321 496h1v1h-1zM1321 500h1v1h-1zM1321 505h1v1h-1zM1321 509h1v1h-1zM1321 514h1v1h-1zM1321 518h1v1h-1zM1491 302h1v1h-1zM1491 307h1v1h-1zM1491 311h1v1h-1zM1491 316h1v1h-1zM1491 320h1v1h-1zM1491 324h1v1h-1zM1491 329h1v1h-1zM1491 333h1v1h-1zM1491 338h1v1h-1zM1491 342h1v1h-1zM1491 346h1v1h-1zM1491 351h1v1h-1zM1491 355h1v1h-1zM1491 360h1v1h-1zM1491 364h1v1h-1zM1491 368h1v1h-1zM1491 373h1v1h-1zM1491 377h1v1h-1zM1491 382h1v1h-1zM1491 386h1v1h-1zM1491 390h1v1h-1zM1491 395h1v1h-1zM1491 399h1v1h-1zM1491 404h1v1h-1zM1491 408h1v1h-1zM1491 412h1v1h-1zM1491 417h1v1h-1zM1491 421h1v1h-1zM1491 426h1v1h-1zM1491 430h1v1h-1zM1491 434h1v1h-1zM1491 439h1v1h-1zM1491 443h1v1h-1zM1491 448h1v1h-1zM1491 452h1v1h-1zM1491 456h1v1h-1zM1491 461h1v1h-1zM1491 465h1v1h-1zM1491 470h1v1h-1zM1491 474h1v1h-1zM1491 478h1v1h-1zM1491 483h1v1h-1zM1491 487h1v1h-1zM1491 492h1v1h-1zM1491 496h1v1h-1zM1491 500h1v1h-1zM1491 505h1v1h-1zM1491 509h1v1h-1zM1491 514h1v1h-1zM1491 518h1v1h-1zM1661 302h1v1h-1zM1661 307h1v1h-1zM1661 311h1v1h-1zM1661 316h1v1h-1zM1661 320h1v1h-1zM1661 324h1v1h-1zM1661 329h1v1h-1zM1661 333h1v1h-1zM1661 338h1v1h-1zM1661 342h1v1h-1zM1661 346h1v1h-1zM1661 351h1v1h-1zM1661 355h1v1h-1zM1661 360h1v1h-1zM1661 364h1v1h-1zM1661 368h1v1h-1zM1661 373h1v1h-1zM1661 377h1v1h-1zM1661 382h1v1h-1zM1661 386h1v1h-1zM1661 390h1v1h-1zM1661 395h1v1h-1zM1661 399h1v1h-1zM1661 404h1v1h-1zM1661 408h1v1h-1zM1661 412h1v1h-1zM1661 417h1v1h-1zM1661 421h1v1h-1zM1661 426h1v1h-1zM1661 430h1v1h-1zM1661 434h1v1h-1zM1661 439h1v1h-1zM1661 443h1v1h-1zM1661 448h1v1h-1zM1661 452h1v1h-1zM1661 456h1v1h-1zM1661 461h1v1h-1zM1661 465h1v1h-1zM1661 470h1v1h-1zM1661 474h1v1h-1zM1661 478h1v1h-1zM1661 483h1v1h-1zM1661 487h1v1h-1zM1661 492h1v1h-1zM1661 496h1v1h-1zM1661 500h1v1h-1zM1661 505h1v1h-1zM1661 509h1v1h-1zM1661 514h1v1h-1zM1661 518h1v1h-1zM132 521h1v1h-1zM132 525h1v1h-1zM132 530h1v1h-1zM132 534h1v1h-1zM132 539h1v1h-1zM132 543h1v1h-1zM132 547h1v1h-1zM132 552h1v1h-1zM132 556h1v1h-1zM132 561h1v1h-1zM132 565h1v1h-1zM132 569h1v1h-1zM132 574h1v1h-1zM132 578h1v1h-1zM132 583h1v1h-1zM132 587h1v1h-1zM132 591h1v1h-1zM132 596h1v1h-1zM132 600h1v1h-1zM132 605h1v1h-1zM132 609h1v1h-1zM132 613h1v1h-1zM132 618h1v1h-1zM132 622h1v1h-1zM132 627h1v1h-1zM132 631h1v1h-1zM132 635h1v1h-1zM132 640h1v1h-1zM132 644h1v1h-1zM132 649h1v1h-1zM132 653h1v1h-1zM132 657h1v1h-1zM132 662h1v1h-1zM132 666h1v1h-1zM132 671h1v1h-1zM132 675h1v1h-1zM132 679h1v1h-1zM132 684h1v1h-1zM132 688h1v1h-1zM132 693h1v1h-1zM132 697h1v1h-1zM132 701h1v1h-1zM132 706h1v1h-1zM132 710h1v1h-1zM132 715h1v1h-1zM132 719h1v1h-1zM132 723h1v1h-1zM132 728h1v1h-1zM132 732h1v1h-1zM132 737h1v1h-1zM302 521h1v1h-1zM302 525h1v1h-1zM302 530h1v1h-1zM302 534h1v1h-1zM302 539h1v1h-1zM302 543h1v1h-1zM302 547h1v1h-1zM302 552h1v1h-1zM302 556h1v1h-1zM302 561h1v1h-1zM302 565h1v1h-1zM302 569h1v1h-1zM302 574h1v1h-1zM302 578h1v1h-1zM302 583h1v1h-1zM302 587h1v1h-1zM302 591h1v1h-1zM302 596h1v1h-1zM302 600h1v1h-1zM302 605h1v1h-1zM302 609h1v1h-1zM302 613h1v1h-1zM302 618h1v1h-1zM302 622h1v1h-1zM302 627h1v1h-1zM302 631h1v1h-1zM302 635h1v1h-1zM302 640h1v1h-1zM302 644h1v1h-1zM302 649h1v1h-1zM302 653h1v1h-1zM302 657h1v1h-1zM302 662h1v1h-1zM302 666h1v1h-1zM302 671h1v1h-1zM302 675h1v1h-1zM302 679h1v1h-1zM302 684h1v1h-1zM302 688h1v1h-1zM302 693h1v1h-1zM302 697h1v1h-1zM302 701h1v1h-1zM302 706h1v1h-1zM302 710h1v1h-1zM302 715h1v1h-1zM302 719h1v1h-1zM302 723h1v1h-1zM302 728h1v1h-1zM302 732h1v1h-1zM302 737h1v1h-1zM472 521h1v1h-1zM472 525h1v1h-1zM472 530h1v1h-1zM472 534h1v1h-1zM472 539h1v1h-1zM472 543h1v1h-1zM472 547h1v1h-1zM472 552h1v1h-1zM472 556h1v1h-1zM472 561h1v1h-1zM472 565h1v1h-1zM472 569h1v1h-1zM472 574h1v1h-1zM472 578h1v1h-1zM472 583h1v1h-1zM472 587h1v1h-1zM472 591h1v1h-1zM472 596h1v1h-1zM472 600h1v1h-1zM472 605h1v1h-1zM472 609h1v1h-1zM472 613h1v1h-1zM472 618h1v1h-1zM472 622h1v1h-1zM472 627h1v1h-1zM472 631h1v1h-1zM472 635h1v1h-1zM472 640h1v1h-1zM472 644h1v1h-1zM472 649h1v1h-1zM472 653h1v1h-1zM472 657h1v1h-1zM472 662h1v1h-1zM472 666h1v1h-1zM472 671h1v1h-1zM472 675h1v1h-1zM472 679h1v1h-1zM472 684h1v1h-1zM472 688h1v1h-1zM472 693h1v1h-1zM472 697h1v1h-1zM472 701h1v1h-1zM472 706h1v1h-1zM472 710h1v1h-1zM472 715h1v1h-1zM472 719h1v1h-1zM472 723h1v1h-1zM472 728h1v1h-1zM472 732h1v1h-1zM472 737h1v1h-1zM642 521h1v1h-1zM642 525h1v1h-1zM642 530h1v1h-1zM642 534h1v1h-1zM642 539h1v1h-1zM642 543h1v1h-1zM642 547h1v1h-1zM642 552h1v1h-1zM642 556h1v1h-1zM642 561h1v1h-1zM642 565h1v1h-1zM642 569h1v1h-1zM642 574h1v1h-1zM642 578h1v1h-1zM642 583h1v1h-1zM642 587h1v1h-1zM642 591h1v1h-1zM642 596h1v1h-1zM642 600h1v1h-1zM642 605h1v1h-1zM642 609h1v1h-1zM642 613h1v1h-1zM642 618h1v1h-1zM642 622h1v1h-1zM642 627h1v1h-1zM642 631h1v1h-1zM642 635h1v1h-1zM642 640h1v1h-1zM642 644h1v1h-1zM642 649h1v1h-1zM642 653h1v1h-1zM642 657h1v1h-1zM642 662h1v1h-1zM642 666h1v1h-1zM642 671h1v1h-1zM642 675h1v1h-1zM642 679h1v1h-1zM642 684h1v1h-1zM642 688h1v1h-1zM642 693h1v1h-1zM642 697h1v1h-1zM642 701h1v1h-1zM642 706h1v1h-1zM642 710h1v1h-1zM642 715h1v1h-1zM642 719h1v1h-1zM642 723h1v1h-1zM642 728h1v1h-1zM642 732h1v1h-1zM642 737h1v1h-1zM981 521h1v1h-1zM981 525h1v1h-1zM981 530h1v1h-1zM981 534h1v1h-1zM981 539h1v1h-1zM981 543h1v1h-1zM981 547h1v1h-1zM981 552h1v1h-1zM981 556h1v1h-1zM981 561h1v1h-1zM981 565h1v1h-1zM981 569h1v1h-1zM981 574h1v1h-1zM981 578h1v1h-1zM981 583h1v1h-1zM981 587h1v1h-1zM981 591h1v1h-1zM981 596h1v1h-1zM981 600h1v1h-1zM981 605h1v1h-1zM981 609h1v1h-1zM981 613h1v1h-1zM981 618h1v1h-1zM981 622h1v1h-1zM981 627h1v1h-1zM981 631h1v1h-1zM981 635h1v1h-1zM981 640h1v1h-1zM981 644h1v1h-1zM981 649h1v1h-1zM981 653h1v1h-1zM981 657h1v1h-1zM981 662h1v1h-1zM981 666h1v1h-1zM981 671h1v1h-1zM981 675h1v1h-1zM981 679h1v1h-1zM981 684h1v1h-1zM981 688h1v1h-1zM981 693h1v1h-1zM981 697h1v1h-1zM981 701h1v1h-1zM981 706h1v1h-1zM981 710h1v1h-1zM981 715h1v1h-1zM981 719h1v1h-1zM981 723h1v1h-1zM981 728h1v1h-1zM981 732h1v1h-1zM981 737h1v1h-1zM1151 521h1v1h-1zM1151 525h1v1h-1zM1151 530h1v1h-1zM1151 534h1v1h-1zM1151 539h1v1h-1zM1151 543h1v1h-1zM1151 547h1v1h-1zM1151 552h1v1h-1zM1151 556h1v1h-1zM1151 561h1v1h-1zM1151 565h1v1h-1zM1151 569h1v1h-1zM1151 574h1v1h-1zM1151 578h1v1h-1zM1151 583h1v1h-1zM1151 587h1v1h-1zM1151 591h1v1h-1zM1151 596h1v1h-1zM1151 600h1v1h-1zM1151 605h1v1h-1zM1151 609h1v1h-1zM1151 613h1v1h-1zM1151 618h1v1h-1zM1151 622h1v1h-1zM1151 627h1v1h-1zM1151 631h1v1h-1zM1151 635h1v1h-1zM1151 640h1v1h-1zM1151 644h1v1h-1zM1151 649h1v1h-1zM1151 653h1v1h-1zM1151 657h1v1h-1zM1151 662h1v1h-1zM1151 666h1v1h-1zM1151 671h1v1h-1zM1151 675h1v1h-1zM1151 679h1v1h-1zM1151 684h1v1h-1zM1151 688h1v1h-1zM1151 693h1v1h-1zM1151 697h1v1h-1zM1151 701h1v1h-1zM1151 706h1v1h-1zM1151 710h1v1h-1zM1151 715h1v1h-1zM1151 719h1v1h-1zM1151 723h1v1h-1zM1151 728h1v1h-1zM1151 732h1v1h-1zM1151 737h1v1h-1zM1321 521h1v1h-1zM1321 525h1v1h-1zM1321 530h1v1h-1zM1321 534h1v1h-1zM1321 539h1v1h-1zM1321 543h1v1h-1zM1321 547h1v1h-1zM1321 552h1v1h-1zM1321 556h1v1h-1zM1321 561h1v1h-1zM1321 565h1v1h-1zM1321 569h1v1h-1zM1321 574h1v1h-1zM1321 578h1v1h-1zM1321 583h1v1h-1zM1321 587h1v1h-1zM1321 591h1v1h-1zM1321 596h1v1h-1zM1321 600h1v1h-1zM1321 605h1v1h-1zM1321 609h1v1h-1zM1321 613h1v1h-1zM1321 618h1v1h-1zM1321 622h1v1h-1zM1321 627h1v1h-1zM1321 631h1v1h-1zM1321 635h1v1h-1zM1321 640h1v1h-1zM1321 644h1v1h-1zM1321 649h1v1h-1zM1321 653h1v1h-1zM1321 657h1v1h-1zM1321 662h1v1h-1zM1321 666h1v1h-1zM1321 671h1v1h-1zM1321 675h1v1h-1zM1321 679h1v1h-1zM1321 684h1v1h-1zM1321 688h1v1h-1zM1321 693h1v1h-1zM1321 697h1v1h-1zM1321 701h1v1h-1zM1321 706h1v1h-1zM1321 710h1v1h-1zM1321 715h1v1h-1zM1321 719h1v1h-1zM1321 723h1v1h-1zM1321 728h1v1h-1zM1321 732h1v1h-1zM1321 737h1v1h-1zM1491 521h1v1h-1zM1491 525h1v1h-1zM1491 530h1v1h-1zM1491 534h1v1h-1zM1491 539h1v1h-1zM1491 543h1v1h-1zM1491 547h1v1h-1zM1491 552h1v1h-1zM1491 556h1v1h-1zM1491 561h1v1h-1zM1491 565h1v1h-1zM1491 569h1v1h-1zM1491 574h1v1h-1zM1491 578h1v1h-1zM1491 583h1v1h-1zM1491 587h1v1h-1zM1491 591h1v1h-1zM1491 596h1v1h-1zM1491 600h1v1h-1zM1491 605h1v1h-1zM1491 609h1v1h-1zM1491 613h1v1h-1zM1491 618h1v1h-1zM1491 622h1v1h-1zM1491 627h1v1h-1zM1491 631h1v1h-1zM1491 635h1v1h-1zM1491 640h1v1h-1zM1491 644h1v1h-1zM1491 649h1v1h-1zM1491 653h1v1h-1zM1491 657h1v1h-1zM1491 662h1v1h-1zM1491 666h1v1h-1zM1491 671h1v1h-1zM1491 675h1v1h-1zM1491 679h1v1h-1zM1491 684h1v1h-1zM1491 688h1v1h-1zM1491 693h1v1h-1zM1491 697h1v1h-1zM1491 701h1v1h-1zM1491 706h1v1h-1zM1491 710h1v1h-1zM1491 715h1v1h-1zM1491 719h1v1h-1zM1491 723h1v1h-1zM1491 728h1v1h-1zM1491 732h1v1h-1zM1491 737h1v1h-1zM1661 521h1v1h-1zM1661 525h1v1h-1zM1661 530h1v1h-1zM1661 534h1v1h-1zM1661 539h1v1h-1zM1661 543h1v1h-1zM1661 547h1v1h-1zM1661 552h1v1h-1zM1661 556h1v1h-1zM1661 561h1v1h-1zM1661 565h1v1h-1zM1661 569h1v1h-1zM1661 574h1v1h-1zM1661 578h1v1h-1zM1661 583h1v1h-1zM1661 587h1v1h-1zM1661 591h1v1h-1zM1661 596h1v1h-1zM1661 600h1v1h-1zM1661 605h1v1h-1zM1661 609h1v1h-1zM1661 613h1v1h-1zM1661 618h1v1h-1zM1661 622h1v1h-1zM1661 627h1v1h-1zM1661 631h1v1h-1zM1661 635h1v1h-1zM1661 640h1v1h-1zM1661 644h1v1h-1zM1661 649h1v1h-1zM1661 653h1v1h-1zM1661 657h1v1h-1zM1661 662h1v1h-1zM1661 666h1v1h-1zM1661 671h1v1h-1zM1661 675h1v1h-1zM1661 679h1v1h-1zM1661 684h1v1h-1zM1661 688h1v1h-1zM1661 693h1v1h-1zM1661 697h1v1h-1zM1661 701h1v1h-1zM1661 706h1v1h-1zM1661 710h1v1h-1zM1661 715h1v1h-1zM1661 719h1v1h-1zM1661 723h1v1h-1zM1661 728h1v1h-1zM1661 732h1v1h-1zM1661 737h1v1h-1zM132 743h1v1h-1zM132 747h1v1h-1zM132 752h1v1h-1zM132 756h1v1h-1zM132 761h1v1h-1zM132 765h1v1h-1zM132 770h1v1h-1zM132 774h1v1h-1zM132 779h1v1h-1zM132 783h1v1h-1zM132 787h1v1h-1zM132 792h1v1h-1zM132 796h1v1h-1zM132 801h1v1h-1zM132 805h1v1h-1zM132 810h1v1h-1zM132 814h1v1h-1zM132 818h1v1h-1zM132 823h1v1h-1zM132 827h1v1h-1zM132 832h1v1h-1zM132 836h1v1h-1zM132 841h1v1h-1zM132 845h1v1h-1zM132 850h1v1h-1zM132 854h1v1h-1zM132 858h1v1h-1zM132 863h1v1h-1zM132 867h1v1h-1zM132 872h1v1h-1zM132 876h1v1h-1zM132 881h1v1h-1zM132 885h1v1h-1zM132 890h1v1h-1zM132 894h1v1h-1zM132 898h1v1h-1zM132 903h1v1h-1zM132 907h1v1h-1zM132 912h1v1h-1zM132 916h1v1h-1zM132 921h1v1h-1zM132 925h1v1h-1zM132 929h1v1h-1zM132 934h1v1h-1zM132 938h1v1h-1zM132 943h1v1h-1zM132 947h1v1h-1zM132 952h1v1h-1zM132 956h1v1h-1zM132 961h1v1h-1zM302 743h1v1h-1zM302 747h1v1h-1zM302 752h1v1h-1zM302 756h1v1h-1zM302 761h1v1h-1zM302 765h1v1h-1zM302 770h1v1h-1zM302 774h1v1h-1zM302 779h1v1h-1zM302 783h1v1h-1zM302 787h1v1h-1zM302 792h1v1h-1zM302 796h1v1h-1zM302 801h1v1h-1zM302 805h1v1h-1zM302 810h1v1h-1zM302 814h1v1h-1zM302 818h1v1h-1zM302 823h1v1h-1zM302 827h1v1h-1zM302 832h1v1h-1zM302 836h1v1h-1zM302 841h1v1h-1zM302 845h1v1h-1zM302 850h1v1h-1zM302 854h1v1h-1zM302 858h1v1h-1zM302 863h1v1h-1zM302 867h1v1h-1zM302 872h1v1h-1zM302 876h1v1h-1zM302 881h1v1h-1zM302 885h1v1h-1zM302 890h1v1h-1zM302 894h1v1h-1zM302 898h1v1h-1zM302 903h1v1h-1zM302 907h1v1h-1zM302 912h1v1h-1zM302 916h1v1h-1zM302 921h1v1h-1zM302 925h1v1h-1zM302 929h1v1h-1zM302 934h1v1h-1zM302 938h1v1h-1zM302 943h1v1h-1zM302 947h1v1h-1zM302 952h1v1h-1zM302 956h1v1h-1zM302 961h1v1h-1zM472 743h1v1h-1zM472 747h1v1h-1zM472 752h1v1h-1zM472 756h1v1h-1zM472 761h1v1h-1zM472 765h1v1h-1zM472 770h1v1h-1zM472 774h1v1h-1zM472 779h1v1h-1zM472 783h1v1h-1zM472 787h1v1h-1zM472 792h1v1h-1zM472 796h1v1h-1zM472 801h1v1h-1zM472 805h1v1h-1zM472 810h1v1h-1zM472 814h1v1h-1zM472 818h1v1h-1zM472 823h1v1h-1zM472 827h1v1h-1zM472 832h1v1h-1zM472 836h1v1h-1zM472 841h1v1h-1zM472 845h1v1h-1zM472 850h1v1h-1zM472 854h1v1h-1zM472 858h1v1h-1zM472 863h1v1h-1zM472 867h1v1h-1zM472 872h1v1h-1zM472 876h1v1h-1zM472 881h1v1h-1zM472 885h1v1h-1zM472 890h1v1h-1zM472 894h1v1h-1zM472 898h1v1h-1zM472 903h1v1h-1zM472 907h1v1h-1zM472 912h1v1h-1zM472 916h1v1h-1zM472 921h1v1h-1zM472 925h1v1h-1zM472 929h1v1h-1zM472 934h1v1h-1zM472 938h1v1h-1zM472 943h1v1h-1zM472 947h1v1h-1zM472 952h1v1h-1zM472 956h1v1h-1zM472 961h1v1h-1zM642 743h1v1h-1zM642 747h1v1h-1zM642 752h1v1h-1zM642 756h1v1h-1zM642 761h1v1h-1zM642 765h1v1h-1zM642 770h1v1h-1zM642 774h1v1h-1zM642 779h1v1h-1zM642 783h1v1h-1zM642 787h1v1h-1zM642 792h1v1h-1zM642 796h1v1h-1zM642 801h1v1h-1zM642 805h1v1h-1zM642 810h1v1h-1zM642 814h1v1h-1zM642 818h1v1h-1zM642 823h1v1h-1zM642 827h1v1h-1zM642 832h1v1h-1zM642 836h1v1h-1zM642 841h1v1h-1zM642 845h1v1h-1zM642 850h1v1h-1zM642 854h1v1h-1zM642 858h1v1h-1zM642 863h1v1h-1zM642 867h1v1h-1zM642 872h1v1h-1zM642 876h1v1h-1zM642 881h1v1h-1zM642 885h1v1h-1zM642 890h1v1h-1zM642 894h1v1h-1zM642 898h1v1h-1zM642 903h1v1h-1zM642 907h1v1h-1zM642 912h1v1h-1zM642 916h1v1h-1zM642 921h1v1h-1zM642 925h1v1h-1zM642 929h1v1h-1zM642 934h1v1h-1zM642 938h1v1h-1zM642 943h1v1h-1zM642 947h1v1h-1zM642 952h1v1h-1zM642 956h1v1h-1zM642 961h1v1h-1zM981 743h1v1h-1zM981 747h1v1h-1zM981 752h1v1h-1zM981 756h1v1h-1zM981 761h1v1h-1zM981 765h1v1h-1zM981 770h1v1h-1zM981 774h1v1h-1zM981 779h1v1h-1zM981 783h1v1h-1zM981 787h1v1h-1zM981 792h1v1h-1zM981 796h1v1h-1zM981 801h1v1h-1zM981 805h1v1h-1zM981 810h1v1h-1zM981 814h1v1h-1zM981 818h1v1h-1zM981 823h1v1h-1zM981 827h1v1h-1zM981 832h1v1h-1zM981 836h1v1h-1zM981 841h1v1h-1zM981 845h1v1h-1zM981 850h1v1h-1zM981 854h1v1h-1zM981 858h1v1h-1zM981 863h1v1h-1zM981 867h1v1h-1zM981 872h1v1h-1zM981 876h1v1h-1zM981 881h1v1h-1zM981 885h1v1h-1zM981 890h1v1h-1zM981 894h1v1h-1zM981 898h1v1h-1zM981 903h1v1h-1zM981 907h1v1h-1zM981 912h1v1h-1zM981 916h1v1h-1zM981 921h1v1h-1zM981 925h1v1h-1zM981 929h1v1h-1zM981 934h1v1h-1zM981 938h1v1h-1zM981 943h1v1h-1zM981 947h1v1h-1zM981 952h1v1h-1zM981 956h1v1h-1zM981 961h1v1h-1zM1151 743h1v1h-1zM1151 747h1v1h-1zM1151 752h1v1h-1zM1151 756h1v1h-1zM1151 761h1v1h-1zM1151 765h1v1h-1zM1151 770h1v1h-1zM1151 774h1v1h-1zM1151 779h1v1h-1zM1151 783h1v1h-1zM1151 787h1v1h-1zM1151 792h1v1h-1zM1151 796h1v1h-1zM1151 801h1v1h-1zM1151 805h1v1h-1zM1151 810h1v1h-1zM1151 814h1v1h-1zM1151 818h1v1h-1zM1151 823h1v1h-1zM1151 827h1v1h-1zM1151 832h1v1h-1zM1151 836h1v1h-1zM1151 841h1v1h-1zM1151 845h1v1h-1zM1151 850h1v1h-1zM1151 854h1v1h-1zM1151 858h1v1h-1zM1151 863h1v1h-1zM1151 867h1v1h-1zM1151 872h1v1h-1zM1151 876h1v1h-1zM1151 881h1v1h-1zM1151 885h1v1h-1zM1151 890h1v1h-1zM1151 894h1v1h-1zM1151 898h1v1h-1zM1151 903h1v1h-1zM1151 907h1v1h-1zM1151 912h1v1h-1zM1151 916h1v1h-1zM1151 921h1v1h-1zM1151 925h1v1h-1zM1151 929h1v1h-1zM1151 934h1v1h-1zM1151 938h1v1h-1zM1151 943h1v1h-1zM1151 947h1v1h-1zM1151 952h1v1h-1zM1151 956h1v1h-1zM1151 961h1v1h-1zM1321 743h1v1h-1zM1321 747h1v1h-1zM1321 752h1v1h-1zM1321 756h1v1h-1zM1321 761h1v1h-1zM1321 765h1v1h-1zM1321 770h1v1h-1zM1321 774h1v1h-1zM1321 779h1v1h-1zM1321 783h1v1h-1zM1321 787h1v1h-1zM1321 792h1v1h-1zM1321 796h1v1h-1zM1321 801h1v1h-1zM1321 805h1v1h-1zM1321 810h1v1h-1zM1321 814h1v1h-1zM1321 818h1v1h-1zM1321 823h1v1h-1zM1321 827h1v1h-1zM1321 832h1v1h-1zM1321 836h1v1h-1zM1321 841h1v1h-1zM1321 845h1v1h-1zM1321 850h1v1h-1zM1321 854h1v1h-1zM1321 858h1v1h-1zM1321 863h1v1h-1zM1321 867h1v1h-1zM1321 872h1v1h-1zM1321 876h1v1h-1zM1321 881h1v1h-1zM1321 885h1v1h-1zM1321 890h1v1h-1zM1321 894h1v1h-1zM1321 898h1v1h-1zM1321 903h1v1h-1zM1321 907h1v1h-1zM1321 912h1v1h-1zM1321 916h1v1h-1zM1321 921h1v1h-1zM1321 925h1v1h-1zM1321 929h1v1h-1zM1321 934h1v1h-1zM1321 938h1v1h-1zM1321 943h1v1h-1zM1321 947h1v1h-1zM1321 952h1v1h-1zM1321 956h1v1h-1zM1321 961h1v1h-1zM1491 743h1v1h-1zM1491 747h1v1h-1zM1491 752h1v1h-1zM1491 756h1v1h-1zM1491 761h1v1h-1zM1491 765h1v1h-1zM1491 770h1v1h-1zM1491 774h1v1h-1zM1491 779h1v1h-1zM1491 783h1v1h-1zM1491 787h1v1h-1zM1491 792h1v1h-1zM1491 796h1v1h-1zM1491 801h1v1h-1zM1491 805h1v1h-1zM1491 810h1v1h-1zM1491 814h1v1h-1zM1491 818h1v1h-1zM1491 823h1v1h-1zM1491 827h1v1h-1zM1491 832h1v1h-1zM1491 836h1v1h-1zM1491 841h1v1h-1zM1491 845h1v1h-1zM1491 850h1v1h-1zM1491 854h1v1h-1zM1491 858h1v1h-1zM1491 863h1v1h-1zM1491 867h1v1h-1zM1491 872h1v1h-1zM1491 876h1v1h-1zM1491 881h1v1h-1zM1491 885h1v1h-1zM1491 890h1v1h-1zM1491 894h1v1h-1zM1491 898h1v1h-1zM1491 903h1v1h-1zM1491 907h1v1h-1zM1491 912h1v1h-1zM1491 916h1v1h-1zM1491 921h1v1h-1zM1491 925h1v1h-1zM1491 929h1v1h-1zM1491 934h1v1h-1zM1491 938h1v1h-1zM1491 943h1v1h-1zM1491 947h1v1h-1zM1491 952h1v1h-1zM1491 956h1v1h-1zM1491 961h1v1h-1zM1661 743h1v1h-1zM1661 747h1v1h-1zM1661 752h1v1h-1zM1661 756h1v1h-1zM1661 761h1v1h-1zM1661 765h1v1h-1zM1661 770h1v1h-1zM1661 774h1v1h-1zM1661 779h1v1h-1zM1661 783h1v1h-1zM1661 787h1v1h-1zM1661 792h1v1h-1zM1661 796h1v1h-1zM1661 801h1v1h-1zM1661 805h1v1h-1zM1661 810h1v1h-1zM1661 814h1v1h-1zM1661 818h1v1h-1zM1661 823h1v1h-1zM1661 827h1v1h-1zM1661 832h1v1h-1zM1661 836h1v1h-1zM1661 841h1v1h-1zM1661 845h1v1h-1zM1661 850h1v1h-1zM1661 854h1v1h-1zM1661 858h1v1h-1zM1661 863h1v1h-1zM1661 867h1v1h-1zM1661 872h1v1h-1zM1661 876h1v1h-1zM1661 881h1v1h-1zM1661 885h1v1h-1zM1661 890h1v1h-1zM1661 894h1v1h-1zM1661 898h1v1h-1zM1661 903h1v1h-1zM1661 907h1v1h-1zM1661 912h1v1h-1zM1661 916h1v1h-1zM1661 921h1v1h-1zM1661 925h1v1h-1zM1661 929h1v1h-1zM1661 934h1v1h-1zM1661 938h1v1h-1zM1661 943h1v1h-1zM1661 947h1v1h-1zM1661 952h1v1h-1zM1661 956h1v1h-1zM1661 961h1v1h-1z" fill="#b8b8b8"/>
<rect x="13" y="297" width="1698" height="2" fill="#7a7a7a"/>
<rect x="13" y="519" width="1698" height="2" fill="#7a7a7a"/>
<rect x="13" y="741" width="1698" height="2" fill="#7a7a7a"/>
<path d="M13 252h2v1h-2zM20 252h5v1h-5zM30 252h5v1h-5zM40 252h5v1h-5zM50 252h5v1h-5zM60 252h5v1h-5zM70 252h5v1h-5zM80 252h5v1h-5zM90 252h5v1h-5zM100 252h5v1h-5zM110 252h5v1h-5zM120 252h5v1h-5zM130 252h5v1h-5zM140 252h5v1h-5zM150 252h5v1h-5zM160 252h5v1h-5zM170 252h5v1h-5zM180 252h5v1h-5zM190 252h5v1h-5zM200 252h5v1h-5zM210 252h5v1h-5zM220 252h5v1h-5zM230 252h5v1h-5zM240 252h5v1h-5zM250 252h5v1h-5zM260 252h5v1h-5zM270 252h5v1h-5zM280 252h5v1h-5zM290 252h5v1h-5zM300 252h5v1h-5zM310 252h5v1h-5zM320 252h5v1h-5zM330 252h5v1h-5zM340 252h5v1h-5zM350 252h5v1h-5zM360 252h5v1h-5zM370 252h5v1h-5zM380 252h5v1h-5zM390 252h5v1h-5zM400 252h5v1h-5zM410 252h5v1h-5zM420 252h5v1h-5zM430 252h5v1h-5zM440 252h5v1h-5zM450 252h5v1h-5zM460 252h5v1h-5zM470 252h5v1h-5zM480 252h5v1h-5zM490 252h5v1h-5zM500 252h5v1h-5zM510 252h5v1h-5zM520 252h5v1h-5zM530 252h5v1h-5zM540 252h5v1h-5zM550 252h5v1h-5zM560 252h5v1h-5zM570 252h5v1h-5zM580 252h5v1h-5zM590 252h5v1h-5zM600 252h5v1h-5zM610 252h5v1h-5zM620 252h5v1h-5zM630 252h5v1h-5zM640 252h5v1h-5zM650 252h5v1h-5zM660 252h5v1h-5zM670 252h5v1h-5zM680 252h5v1h-5zM690 252h5v1h-5zM700 252h5v1h-5zM710 252h5v1h-5zM720 252h5v1h-5zM730 252h5v1h-5zM740 252h5v1h-5zM750 252h5v1h-5zM760 252h5v1h-5zM770 252h5v1h-5zM780 252h5v1h-5zM790 252h5v1h-5zM800 252h5v1h-5zM810 252h5v1h-5zM820 252h5v1h-5zM830 252h5v1h-5zM840 252h5v1h-5zM850 252h5v1h-5zM860 252h5v1h-5zM870 252h5v1h-5zM880 252h5v1h-5zM890 252h5v1h-5zM900 252h5v1h-5zM910 252h5v1h-5zM920 252h5v1h-5zM930 252h5v1h-5zM940 252h5v1h-5zM950 252h5v1h-5zM960 252h5v1h-5zM970 252h5v1h-5zM980 252h5v1h-5zM990 252h5v1h-5zM1000 252h5v1h-5zM1010 252h5v1h-5zM1020 252h5v1h-5zM1030 252h5v1h-5zM1040 252h5v1h-5zM1050 252h5v1h-5zM1060 252h5v1h-5zM1070 252h5v1h-5zM1080 252h5v1h-5zM1090 252h5v1h-5zM1100 252h5v1h-5zM1110 252h5v1h-5zM1120 252h5v1h-5zM1130 252h5v1h-5zM1140 252h5v1h-5zM1150 252h5v1h-5zM1160 252h5v1h-5zM1170 252h5v1h-5zM1180 252h5v1h-5zM1190 252h5v1h-5zM1200 252h5v1h-5zM1210 252h5v1h-5zM1220 252h5v1h-5zM1230 252h5v1h-5zM1240 252h5v1h-5zM1250 252h5v1h-5zM1260 252h5v1h-5zM1270 252h5v1h-5zM1280 252h5v1h-5zM1290 252h5v1h-5zM1300 252h5v1h-5zM1310 252h5v1h-5zM1320 252h5v1h-5zM1330 252h5v1h-5zM1340 252h5v1h-5zM1350 252h5v1h-5zM1360 252h5v1h-5zM1370 252h5v1h-5zM1380 252h5v1h-5zM1390 252h5v1h-5zM1400 252h5v1h-5zM1410 252h5v1h-5zM1420 252h5v1h-5zM1430 252h5v1h-5zM1440 252h5v1h-5zM1450 252h5v1h-5zM1460 252h5v1h-5zM1470 252h5v1h-5zM1480 252h5v1h-5zM1490 252h5v1h-5zM1500 252h5v1h-5zM1510 252h5v1h-5zM1520 252h5v1h-5zM1530 252h5v1h-5zM1540 252h5v1h-5zM1550 252h5v1h-5zM1560 252h5v1h-5zM1570 252h5v1h-5zM1580 252h5v1h-5zM1590 252h5v1h-5zM1600 252h5v1h-5zM1610 252h5v1h-5zM1620 252h5v1h-5zM1630 252h5v1h-5zM1640 252h5v1h-5zM1650 252h5v1h-5zM1660 252h5v1h-5zM1670 252h5v1h-5zM1680 252h1v1h-1z" fill="#c8c8c8"/>
<path d="M13 474h2v1h-2zM20 474h5v1h-5zM30 474h5v1h-5zM40 474h5v1h-5zM50 474h5v1h-5zM60 474h5v1h-5zM70 474h5v1h-5zM80 474h5v1h-5zM90 474h5v1h-5zM100 474h5v1h-5zM110 474h5v1h-5zM120 474h5v1h-5zM130 474h5v1h-5zM140 474h5v1h-5zM150 474h5v1h-5zM160 474h5v1h-5zM170 474h5v1h-5zM180 474h5v1h-5zM190 474h5v1h-5zM200 474h5v1h-5zM210 474h5v1h-5zM220 474h5v1h-5zM230 474h5v1h-5zM240 474h5v1h-5zM250 474h5v1h-5zM260 474h5v1h-5zM270 474h5v1h-5zM280 474h5v1h-5zM290 474h5v1h-5zM300 474h5v1h-5zM310 474h5v1h-5zM320 474h5v1h-5zM330 474h5v1h-5zM340 474h5v1h-5zM350 474h5v1h-5zM360 474h5v1h-5zM370 474h5v1h-5zM380 474h5v1h-5zM390 474h5v1h-5zM400 474h5v1h-5zM410 474h5v1h-5zM420 474h5v1h-5zM430 474h5v1h-5zM440 474h5v1h-5zM450 474h5v1h-5zM460 474h5v1h-5zM470 474h5v1h-5zM480 474h5v1h-5zM490 474h5v1h-5zM500 474h5v1h-5zM510 474h5v1h-5zM520 474h5v1h-5zM530 474h5v1h-5zM540 474h5v1h-5zM550 474h5v1h-5zM560 474h5v1h-5zM570 474h5v1h-5zM580 474h5v1h-5zM590 474h5v1h-5zM600 474h5v1h-5zM610 474h5v1h-5zM620 474h5v1h-5zM630 474h5v1h-5zM640 474h5v1h-5zM650 474h5v1h-5zM660 474h5v1h-5zM670 474h5v1h-5zM680 474h5v1h-5zM690 474h5v1h-5zM700 474h5v1h-5zM710 474h5v1h-5zM720 474h5v1h-5zM730 474h5v1h-5zM740 474h5v1h-5zM750 474h5v1h-5zM760 474h5v1h-5zM770 474h5v1h-5zM780 474h5v1h-5zM790 474h5v1h-5zM800 474h5v1h-5zM810 474h5v1h-5zM820 474h5v1h-5zM830 474h5v1h-5zM840 474h5v1h-5zM850 474h5v1h-5zM860 474h5v1h-5zM870 474h5v1h-5zM880 474h5v1h-5zM890 474h5v1h-5zM900 474h5v1h-5zM910 474h5v1h-5zM920 474h5v1h-5zM930 474h5v1h-5zM940 474h5v1h-5zM950 474h5v1h-5zM960 474h5v1h-5zM970 474h5v1h-5zM980 474h5v1h-5zM990 474h5v1h-5zM1000 474h5v1h-5zM1010 474h5v1h-5zM1020 474h5v1h-5zM1030 474h5v1h-5zM1040 474h5v1h-5zM1050 474h5v1h-5zM1060 474h5v1h-5zM1070 474h5v1h-5zM1080 474h5v1h-5zM1090 474h5v1h-5zM1100 474h5v1h-5zM1110 474h5v1h-5zM1120 474h5v1h-5zM1130 474h5v1h-5zM1140 474h5v1h-5zM1150 474h5v1h-5zM1160 474h5v1h-5zM1170 474h5v1h-5zM1180 474h5v1h-5zM1190 474h5v1h-5zM1200 474h5v1h-5zM1210 474h5v1h-5zM1220 474h5v1h-5zM1230 474h5v1h-5zM1240 474h5v1h-5zM1250 474h5v1h-5zM1260 474h5v1h-5zM1270 474h5v1h-5zM1280 474h5v1h-5zM1290 474h5v1h-5zM1300 474h5v1h-5zM1310 474h5v1h-5zM1320 474h5v1h-5zM1330 474h5v1h-5zM1340 474h5v1h-5zM1350 474h5v1h-5zM1360 474h5v1h-5zM1370 474h5v1h-5zM1380 474h5v1h-5zM1390 474h5v1h-5zM1400 474h5v1h-5zM1410 474h5v1h-5zM1420 474h5v1h-5zM1430 474h5v1h-5zM1440 474h5v1h-5zM1450 474h5v1h-5zM1460 474h5v1h-5zM1470 474h5v1h-5zM1480 474h5v1h-5zM1490 474h5v1h-5zM1500 474h5v1h-5zM1510 474h5v1h-5zM1520 474h5v1h-5zM1530 474h5v1h-5zM1540 474h5v1h-5zM1550 474h5v1h-5zM1560 474h5v1h-5zM1570 474h5v1h-5zM1580 474h5v1h-5zM1590 474h5v1h-5zM1600 474h5v1h-5zM1610 474h5v1h-5zM1620 474h5v1h-5zM1630 474h5v1h-5zM1640 474h5v1h-5zM1650 474h5v1h-5zM1660 474h5v1h-5zM1670 474h5v1h-5zM1680 474h1v1h-1z" fill="#c8c8c8"/>
<path d="M13 631h2v1h-2zM20 631h5v1h-5zM30 631h5v1h-5zM40 631h5v1h-5zM50 631h5v1h-5zM60 631h5v1h-5zM70 631h5v1h-5zM80 631h5v1h-5zM90 631h5v1h-5zM100 631h5v1h-5zM110 631h5v1h-5zM120 631h5v1h-5zM130 631h5v1h-5zM140 631h5v1h-5zM150 631h5v1h-5zM160 631h5v1h-5zM170 631h5v1h-5zM180 631h5v1h-5zM190 631h5v1h-5zM200 631h5v1h-5zM210 631h5v1h-5zM220 631h5v1h-5zM230 631h5v1h-5zM240 631h5v1h-5zM250 631h5v1h-5zM260 631h5v1h-5zM270 631h5v1h-5zM280 631h5v1h-5zM290 631h5v1h-5zM300 631h5v1h-5zM310 631h5v1h-5zM320 631h5v1h-5zM330 631h5v1h-5zM340 631h5v1h-5zM350 631h5v1h-5zM360 631h5v1h-5zM370 631h5v1h-5zM380 631h5v1h-5zM390 631h5v1h-5zM400 631h5v1h-5zM410 631h5v1h-5zM420 631h5v1h-5zM430 631h5v1h-5zM440 631h5v1h-5zM450 631h5v1h-5zM460 631h5v1h-5zM470 631h5v1h-5zM480 631h5v1h-5zM490 631h5v1h-5zM500 631h5v1h-5zM510 631h5v1h-5zM520 631h5v1h-5zM530 631h5v1h-5zM540 631h5v1h-5zM550 631h5v1h-5zM560 631h5v1h-5zM570 631h5v1h-5zM580 631h5v1h-5zM590 631h5v1h-5zM600 631h5v1h-5zM610 631h5v1h-5zM620 631h5v1h-5zM630 631h5v1h-5zM640 631h5v1h-5zM650 631h5v1h-5zM660 631h5v1h-5zM670 631h5v1h-5zM680 631h5v1h-5zM690 631h5v1h-5zM700 631h5v1h-5zM710 631h5v1h-5zM720 631h5v1h-5zM730 631h5v1h-5zM740 631h5v1h-5zM750 631h5v1h-5zM760 631h5v1h-5zM770 631h5v1h-5zM780 631h5v1h-5zM790 631h5v1h-5zM800 631h5v1h-5zM810 631h5v1h-5zM820 631h5v1h-5zM830 631h5v1h-5zM840 631h5v1h-5zM850 631h5v1h-5zM860 631h5v1h-5zM870 631h5v1h-5zM880 631h5v1h-5zM890 631h5v1h-5zM900 631h5v1h-5zM910 631h5v1h-5zM920 631h5v1h-5zM930 631h5v1h-5zM940 631h5v1h-5zM950 631h5v1h-5zM960 631h5v1h-5zM970 631h5v1h-5zM980 631h5v1h-5zM990 631h5v1h-5zM1000 631h5v1h-5zM1010 631h5v1h-5zM1020 631h5v1h-5zM1030 631h5v1h-5zM1040 631h5v1h-5zM1050 631h5v1h-5zM1060 631h5v1h-5zM1070 631h5v1h-5zM1080 631h5v1h-5zM1090 631h5v1h-5zM1100 631h5v1h-5zM1110 631h5v1h-5zM1120 631h5v1h-5zM1130 631h5v1h-5zM1140 631h5v1h-5zM1150 631h5v1h-5zM1160 631h5v1h-5zM1170 631h5v1h-5zM1180 631h5v1h-5zM1190 631h5v1h-5zM1200 631h5v1h-5zM1210 631h5v1h-5zM1220 631h5v1h-5zM1230 631h5v1h-5zM1240 631h5v1h-5zM1250 631h5v1h-5zM1260 631h5v1h-5zM1270 631h5v1h-5zM1280 631h5v1h-5zM1290 631h5v1h-5zM1300 631h5v1h-5zM1310 631h5v1h-5zM1320 631h5v1h-5zM1330 631h5v1h-5zM1340 631h5v1h-5zM1350 631h5v1h-5zM1360 631h5v1h-5zM1370 631h5v1h-5zM1380 631h5v1h-5zM1390 631h5v1h-5zM1400 631h5v1h-5zM1410 631h5v1h-5zM1420 631h5v1h-5zM1430 631h5v1h-5zM1440 631h5v1h-5zM1450 631h5v1h-5zM1460 631h5v1h-5zM1470 631h5v1h-5zM1480 631h5v1h-5zM1490 631h5v1h-5zM1500 631h5v1h-5zM1510 631h5v1h-5zM1520 631h5v1h-5zM1530 631h5v1h-5zM1540 631h5v1h-5zM1550 631h5v1h-5zM1560 631h5v1h-5zM1570 631h5v1h-5zM1580 631h5v1h-5zM1590 631h5v1h-5zM1600 631h5v1h-5zM1610 631h5v1h-5zM1620 631h5v1h-5zM1630 631h5v1h-5zM1640 631h5v1h-5zM1650 631h5v1h-5zM1660 631h5v1h-5zM1670 631h5v1h-5zM1680 631h1v1h-1z" fill="#c8c8c8"/>
<path d="M13 854h2v1h-2zM20 854h5v1h-5zM30 854h5v1h-5zM40 854h5v1h-5zM50 854h5v1h-5zM60 854h5v1h-5zM70 854h5v1h-5zM80 854h5v1h-5zM90 854h5v1h-5zM100 854h5v1h-5zM110 854h5v1h-5zM120 854h5v1h-5zM130 854h5v1h-5zM140 854h5v1h-5zM150 854h5v1h-5zM160 854h5v1h-5zM170 854h5v1h-5zM180 854h5v1h-5zM190 854h5v1h-5zM200 854h5v1h-5zM210 854h5v1h-5zM220 854h5v1h-5zM230 854h5v1h-5zM240 854h5v1h-5zM250 854h5v1h-5zM260 854h5v1h-5zM270 854h5v1h-5zM280 854h5v1h-5zM290 854h5v1h-5zM300 854h5v1h-5zM310 854h5v1h-5zM320 854h5v1h-5zM330 854h5v1h-5zM340 854h5v1h-5zM350 854h5v1h-5zM360 854h5v1h-5zM370 854h5v1h-5zM380 854h5v1h-5zM390 854h5v1h-5zM400 854h5v1h-5zM410 854h5v1h-5zM420 854h5v1h-5zM430 854h5v1h-5zM440 854h5v1h-5zM450 854h5v1h-5zM460 854h5v1h-5zM470 854h5v1h-5zM480 854h5v1h-5zM490 854h5v1h-5zM500 854h5v1h-5zM510 854h5v1h-5zM520 854h5v1h-5zM530 854h5v1h-5zM540 854h5v1h-5zM550 854h5v1h-5zM560 854h5v1h-5zM570 854h5v1h-5zM580 854h5v1h-5zM590 854h5v1h-5zM600 854h5v1h-5zM610 854h5v1h-5zM620 854h5v1h-5zM630 854h5v1h-5zM640 854h5v1h-5zM650 854h5v1h-5zM660 854h5v1h-5zM670 854h5v1h-5zM680 854h5v1h-5zM690 854h5v1h-5zM700 854h5v1h-5zM710 854h5v1h-5zM720 854h5v1h-5zM730 854h5v1h-5zM740 854h5v1h-5zM750 854h5v1h-5zM760 854h5v1h-5zM770 854h5v1h-5zM780 854h5v1h-5zM790 854h5v1h-5zM800 854h5v1h-5zM810 854h5v1h-5zM820 854h5v1h-5zM830 854h5v1h-5zM840 854h5v1h-5zM850 854h5v1h-5zM860 854h5v1h-5zM870 854h5v1h-5zM880 854h5v1h-5zM890 854h5v1h-5zM900 854h5v1h-5zM910 854h5v1h-5zM920 854h5v1h-5zM930 854h5v1h-5zM940 854h5v1h-5zM950 854h5v1h-5zM960 854h5v1h-5zM970 854h5v1h-5zM980 854h5v1h-5zM990 854h5v1h-5zM1000 854h5v1h-5zM1010 854h5v1h-5zM1020 854h5v1h-5zM1030 854h5v1h-5zM1040 854h5v1h-5zM1050 854h5v1h-5zM1060 854h5v1h-5zM1070 854h5v1h-5zM1080 854h5v1h-5zM1090 854h5v1h-5zM1100 854h5v1h-5zM1110 854h5v1h-5zM1120 854h5v1h-5zM1130 854h5v1h-5zM1140 854h5v1h-5zM1150 854h5v1h-5zM1160 854h5v1h-5zM1170 854h5v1h-5zM1180 854h5v1h-5zM1190 854h5v1h-5zM1200 854h5v1h-5zM1210 854h5v1h-5zM1220 854h5v1h-5zM1230 854h5v1h-5zM1240 854h5v1h-5zM1250 854h5v1h-5zM1260 854h5v1h-5zM1270 854h5v1h-5zM1280 854h5v1h-5zM1290 854h5v1h-5zM1300 854h5v1h-5zM1310 854h5v1h-5zM1320 854h5v1h-5zM1330 854h5v1h-5zM1340 854h5v1h-5zM1350 854h5v1h-5zM1360 854h5v1h-5zM1370 854h5v1h-5zM1380 854h5v1h-5zM1390 854h5v1h-5zM1400 854h5v1h-5zM1410 854h5v1h-5zM1420 854h5v1h-5zM1430 854h5v1h-5zM1440 854h5v1h-5zM1450 854h5v1h-5zM1460 854h5v1h-5zM1470 854h5v1h-5zM1480 854h5v1h-5zM1490 854h5v1h-5zM1500 854h5v1h-5zM1510 854h5v1h-5zM1520 854h5v1h-5zM1530 854h5v1h-5zM1540 854h5v1h-5zM1550 854h5v1h-5zM1560 854h5v1h-5zM1570 854h5v1h-5zM1580 854h5v1h-5zM1590 854h5v1h-5zM1600 854h5v1h-5zM1610 854h5v1h-5zM1620 854h5v1h-5zM1630 854h5v1h-5zM1640 854h5v1h-5zM1650 854h5v1h-5zM1660 854h5v1h-5zM1670 854h5v1h-5zM1680 854h1v1h-1z" fill="#c8c8c8"/>
<path d="M812 113h1v2h-1zM812 120h1v5h-1zM812 130h1v5h-1zM812 140h1v5h-1zM812 150h1v5h-1zM812 160h1v5h-1zM812 170h1v5h-1zM812 180h1v5h-1zM812 190h1v5h-1zM812 200h1v5h-1zM812 210h1v5h-1zM812 220h1v5h-1zM812 230h1v5h-1zM812 240h1v5h-1zM812 250h1v5h-1zM812 260h1v5h-1zM812 270h1v5h-1zM812 280h1v5h-1zM812 290h1v5h-1zM812 300h1v5h-1zM812 310h1v5h-1zM812 320h1v5h-1zM812 330h1v5h-1zM812 340h1v5h-1zM812 350h1v5h-1zM812 360h1v5h-1zM812 370h1v5h-1zM812 380h1v5h-1zM812 390h1v5h-1zM812 400h1v5h-1zM812 410h1v5h-1zM812 420h1v5h-1zM812 430h1v5h-1zM812 440h1v5h-1zM812 450h1v5h-1zM812 460h1v5h-1zM812 470h1v5h-1zM812 480h1v5h-1zM812 490h1v5h-1zM812 500h1v5h-1zM812 510h1v5h-1zM812 520h1v5h-1zM812 530h1v5h-1zM812 540h1v5h-1zM812 550h1v5h-1zM812 560h1v5h-1zM812 570h1v5h-1zM812 580h1v5h-1zM812 590h1v5h-1zM812 600h1v5h-1zM812 610h1v5h-1zM812 620h1v5h-1zM812 630h1v5h-1zM812 640h1v5h-1zM812 650h1v5h-1zM812 660h1v5h-1zM812 670h1v5h-1zM812 680h1v5h-1zM812 690h1v5h-1zM812 700h1v5h-1zM812 710h1v5h-1zM812 720h1v5h-1zM812 730h1v5h-1zM812 740h1v5h-1zM812 750h1v5h-1zM812 760h1v5h-1zM812 770h1v5h-1zM812 780h1v5h-1zM812 790h1v5h-1zM812 800h1v5h-1zM812 810h1v5h-1zM812 820h1v5h-1zM812 830h1v5h-1zM812 840h1v5h-1zM812 850h1v5h-1zM812 860h1v5h-1zM812 870h1v5h-1zM812 880h1v5h-1zM812 890h1v5h-1zM812 900h1v5h-1zM812 910h1v5h-1zM812 920h1v5h-1zM812 930h1v5h-1zM812 940h1v5h-1zM812 950h1v5h-1zM812 960h1v5h-1z" fill="#c8c8c8"/>
<path d="M382 743h1v5h-1zM382 753h1v5h-1zM382 763h1v5h-1zM382 773h1v5h-1zM382 783h1v5h-1zM382 793h1v5h-1zM382 803h1v5h-1zM382 813h1v5h-1zM382 823h1v5h-1zM382 833h1v5h-1zM382 843h1v5h-1zM382 853h1v5h-1zM382 863h1v5h-1zM382 873h1v5h-1zM382 883h1v5h-1zM382 893h1v5h-1zM382 903h1v5h-1zM382 913h1v5h-1zM382 923h1v5h-1zM382 933h1v5h-1zM382 943h1v5h-1zM382 953h1v5h-1zM382 963h1v2h-1z" fill="#f0901e"/>
<path d="M1232 743h1v5h-1zM1232 753h1v5h-1zM1232 763h1v5h-1zM1232 773h1v5h-1zM1232 783h1v5h-1zM1232 793h1v5h-1zM1232 803h1v5h-1zM1232 813h1v5h-1zM1232 823h1v5h-1zM1232 833h1v5h-1zM1232 843h1v5h-1zM1232 853h1v5h-1zM1232 863h1v5h-1zM1232 873h1v5h-1zM1232 883h1v5h-1zM1232 893h1v5h-1zM1232 903h1v5h-1zM1232 913h1v5h-1zM1232 923h1v5h-1zM1232 933h1v5h-1zM1232 943h1v5h-1zM1232 953h1v5h-1zM1232 963h1v2h-1z" fill="#f0901e"/>
<path d="M386 101h1V249h-1zM811 124h1V272h-1zM1236 101h1V249h-1zM1661 124h1V272h-1z" fill="#8c8200"/>
<path d="M13 122h1V127h-1zM14 122h1V127h-1zM15 122h1V127h-1zM16 122h1V126h-1zM17 123h1V127h-1zM18 123h1V127h-1zM19 122h1V127h-1zM20 122h1V127h-1zM21 123h1V127h-1zM22 122h1V127h-1zM23 122h1V127h-1zM24 122h1V127h-1zM25 122h1V127h-1zM26 122h1V127h-1zM27 122h1V127h-1zM28 122h1V126h-1zM29 122h1V127h-1zM30 122h1V126h-1zM31 120h1V127h-1zM32 122h1V127h-1zM33 123h1V126h-1zM34 122h1V127h-1zM35 122h1V127h-1zM36 122h1V127h-1zM37 122h1V127h-1zM38 122h1V127h-1zM39 122h1V127h-1zM40 122h1V127h-1zM41 122h1V127h-1zM42 122h1V127h-1zM43 122h1V127h-1zM44 122h1V127h-1zM45 122h1V127h-1zM46 122h1V127h-1zM47 122h1V127h-1zM48 120h1V127h-1zM49 122h1V127h-1zM50 122h1V127h-1zM51 121h1V127h-1zM52 122h1V127h-1zM53 121h1V127h-1zM54 123h1V127h-1zM55 122h1V127h-1zM56 122h1V127h-1zM57 122h1V127h-1zM58 122h1V127h-1zM59 123h1V127h-1zM60 122h1V127h-1zM61 123h1V127h-1zM62 122h1V127h-1zM63 122h1V127h-1zM64 122h1V127h-1zM65 122h1V127h-1zM66 122h1V127h-1zM67 122h1V129h-1zM68 122h1V127h-1zM69 122h1V127h-1zM70 122h1V126h-1zM71 123h1V127h-1zM72 122h1V127h-1zM73 122h1V127h-1zM74 123h1V127h-1zM75 122h1V127h-1zM76 122h1V127h-1zM77 122h1V127h-1zM78 122h1V127h-1zM79 122h1V127h-1zM80 122h1V127h-1zM81 122h1V127h-1zM82 122h1V127h-1zM83 122h1V127h-1zM84 122h1V127h-1zM85 122h1V127h-1zM86 122h1V127h-1zM87 122h1V127h-1zM88 122h1V126h-1zM89 121h1V127h-1zM90 122h1V127h-1zM91 122h1V127h-1zM92 122h1V127h-1zM93 123h1V127h-1zM94 122h1V127h-1zM95 122h1V127h-1zM96 122h1V127h-1zM97 122h1V126h-1zM98 122h1V127h-1zM99 122h1V127h-1zM100 122h1V127h-1zM101 122h1V127h-1zM102 122h1V127h-1zM103 122h1V127h-1zM104 122h1V127h-1zM105 122h1V127h-1zM106 122h1V127h-1zM107 123h1V127h-1zM108 122h1V127h-1zM109 122h1V127h-1zM110 122h1V128h-1zM111 122h1V127h-1zM112 121h1V127h-1zM113 122h1V127h-1zM114 122h1V127h-1zM115 122h1V127h-1zM116 122h1V127h-1zM117 122h1V127h-1zM118 122h1V127h-1zM119 122h1V126h-1zM120 122h1V127h-1zM121 122h1V127h-1zM122 123h1V127h-1zM123 122h1V127h-1zM124 122h1V127h-1zM125 122h1V127h-1zM126 122h1V127h-1zM127 122h1V127h-1zM128 123h1V127h-1zM129 122h1V127h-1zM130 122h1V126h-1zM131 122h1V127h-1zM132 122h1V127h-1zM133 122h1V127h-1zM134 122h1V127h-1zM135 122h1V127h-1zM136 122h1V127h-1zM137 122h1V127h-1zM138 122h1V127h-1zM139 122h1V127h-1zM140 122h1V127h-1zM141 122h1V126h-1zM142 121h1V127h-1zM143 123h1V127h-1zM144 122h1V129h-1zM145 122h1V127h-1zM146 123h1V128h-1zM147 122h1V127h-1zM148 122h1V127h-1zM149 122h1V127h-1zM150 122h1V127h-1zM151 122h1V127h-1zM152 123h1V127h-1zM153 122h1V127h-1zM154 122h1V127h-1zM155 122h1V126h-1zM156 122h1V127h-1zM157 122h1V127h-1zM158 122h1V127h-1zM159 122h1V127h-1zM160 122h1V127h-1zM161 122h1V127h-1zM162 122h1V127h-1zM163 122h1V126h-1zM164 122h1V126h-1zM165 122h1V127h-1zM166 122h1V127h-1zM167 122h1V127h-1zM168 122h1V127h-1zM169 122h1V127h-1zM170 123h1V127h-1zM171 122h1V127h-1zM172 123h1V127h-1zM173 122h1V127h-1zM174 122h1V127h-1zM175 122h1V126h-1zM176 122h1V126h-1zM177 122h1V127h-1zM178 122h1V128h-1zM179 122h1V127h-1zM180 122h1V127h-1zM181 122h1V127h-1zM182 121h1V127h-1zM183 122h1V127h-1zM184 123h1V127h-1zM185 123h1V127h-1zM186 122h1V127h-1zM187 122h1V127h-1zM188 122h1V127h-1zM189 122h1V127h-1zM190 122h1V127h-1zM191 122h1V127h-1zM192 122h1V127h-1zM193 122h1V127h-1zM194 122h1V127h-1zM195 122h1V127h-1zM196 122h1V127h-1zM197 122h1V127h-1zM198 122h1V127h-1zM199 122h1V127h-1zM200 121h1V126h-1zM201 122h1V126h-1zM202 123h1V126h-1zM203 122h1V127h-1zM204 122h1V127h-1zM205 120h1V127h-1zM206 122h1V127h-1zM207 122h1V127h-1zM208 122h1V127h-1zM209 122h1V127h-1zM210 122h1V127h-1zM211 121h1V127h-1zM212 122h1V127h-1zM213 122h1V126h-1zM214 122h1V126h-1zM215 122h1V127h-1zM216 122h1V127h-1zM217 122h1V127h-1zM218 122h1V127h-1zM219 122h1V127h-1zM220 122h1V127h-1zM221 122h1V127h-1zM222 122h1V127h-1zM223 122h1V127h-1zM224 122h1V127h-1zM225 122h1V127h-1zM226 122h1V127h-1zM227 123h1V127h-1zM228 122h1V127h-1zM229 122h1V126h-1zM230 122h1V128h-1zM231 123h1V128h-1zM232 122h1V127h-1zM233 122h1V127h-1zM234 122h1V127h-1zM235 122h1V127h-1zM236 122h1V127h-1zM237 122h1V127h-1zM238 122h1V127h-1zM239 122h1V127h-1zM240 122h1V127h-1zM241 122h1V127h-1zM242 122h1V127h-1zM243 122h1V127h-1zM244 122h1V126h-1zM245 122h1V127h-1zM246 122h1V126h-1zM247 122h1V127h-1zM248 122h1V127h-1zM249 122h1V127h-1zM250 122h1V127h-1zM251 122h1V127h-1zM252 122h1V127h-1zM253 122h1V127h-1zM254 122h1V127h-1zM255 123h1V127h-1zM256 122h1V127h-1zM257 122h1V127h-1zM258 122h1V126h-1zM259 122h1V127h-1zM260 122h1V127h-1zM261 122h1V127h-1zM262 122h1V127h-1zM263 122h1V127h-1zM264 122h1V126h-1zM265 120h1V127h-1zM266 123h1V127h-1zM267 122h1V127h-1zM268 122h1V127h-1zM269 122h1V126h-1zM270 122h1V127h-1zM271 122h1V127h-1zM272 122h1V126h-1zM273 122h1V127h-1zM274 122h1V126h-1zM275 122h1V127h-1zM276 122h1V126h-1zM277 122h1V127h-1zM278 122h1V126h-1zM279 122h1V127h-1zM280 122h1V127h-1zM281 122h1V127h-1zM282 122h1V127h-1zM283 122h1V127h-1zM284 122h1V127h-1zM285 121h1V126h-1zM286 122h1V127h-1zM287 122h1V127h-1zM288 122h1V128h-1zM289 122h1V127h-1zM290 122h1V127h-1zM291 122h1V126h-1zM292 122h1V127h-1zM293 121h1V127h-1zM294 122h1V126h-1zM295 122h1V127h-1zM296 122h1V127h-1zM297 122h1V127h-1zM298 122h1V127h-1zM299 122h1V127h-1zM300 122h1V127h-1zM301 121h1V127h-1zM302 122h1V127h-1zM303 122h1V127h-1zM304 122h1V127h-1zM305 122h1V127h-1zM306 122h1V127h-1zM307 122h1V127h-1zM308 122h1V127h-1zM309 122h1V127h-1zM310 123h1V126h-1zM311 122h1V127h-1zM312 122h1V127h-1zM313 122h1V127h-1zM314 123h1V127h-1zM315 122h1V127h-1zM316 122h1V127h-1zM317 122h1V127h-1zM318 123h1V128h-1zM319 122h1V127h-1zM320 122h1V127h-1zM321 122h1V127h-1zM322 122h1V127h-1zM323 122h1V127h-1zM324 122h1V127h-1zM325 122h1V126h-1zM326 122h1V127h-1zM327 122h1V127h-1zM328 123h1V127h-1zM329 122h1V128h-1zM330 122h1V127h-1zM331 121h1V127h-1zM332 118h1V130h-1zM333 112h1V138h-1zM334 116h1V133h-1zM335 119h1V132h-1zM336 121h1V129h-1zM337 121h1V128h-1zM338 121h1V127h-1zM339 122h1V127h-1zM340 122h1V127h-1zM341 122h1V127h-1zM342 122h1V127h-1zM343 122h1V127h-1zM344 122h1V127h-1zM345 122h1V127h-1zM346 122h1V127h-1zM347 122h1V127h-1zM348 122h1V127h-1zM349 122h1V126h-1zM350 122h1V127h-1zM351 122h1V127h-1zM352 122h1V127h-1zM353 122h1V127h-1zM354 122h1V127h-1zM355 122h1V128h-1zM356 122h1V127h-1zM357 121h1V127h-1zM358 122h1V127h-1zM359 122h1V127h-1zM360 123h1V127h-1zM361 122h1V127h-1zM362 122h1V127h-1zM363 122h1V127h-1zM364 122h1V127h-1zM365 122h1V127h-1zM366 122h1V127h-1zM367 122h1V127h-1zM368 122h1V127h-1zM369 122h1V127h-1zM370 122h1V128h-1zM371 122h1V127h-1zM372 122h1V126h-1zM373 122h1V127h-1zM374 122h1V126h-1zM375 122h1V127h-1zM376 116h1V126h-1zM377 111h1V119h-1zM378 107h1V114h-1zM379 105h1V112h-1zM380 103h1V109h-1zM381 100h1V108h-1zM382 99h1V107h-1zM383 99h1V105h-1zM384 99h1V105h-1zM385 98h1V104h-1zM386 229h1V268h-1zM387 236h1V263h-1zM388 240h1V259h-1zM389 242h1V257h-1zM390 244h1V256h-1zM391 245h1V254h-1zM392 246h1V253h-1zM393 246h1V253h-1zM394 247h1V252h-1zM395 247h1V253h-1zM396 247h1V252h-1zM397 247h1V252h-1zM398 247h1V252h-1zM399 247h1V252h-1zM400 247h1V253h-1zM401 247h1V251h-1zM402 247h1V252h-1zM403 247h1V252h-1zM404 247h1V252h-1zM405 247h1V252h-1zM406 248h1V252h-1zM407 248h1V252h-1zM408 246h1V252h-1zM409 248h1V252h-1zM410 248h1V252h-1zM411 247h1V252h-1zM412 247h1V252h-1zM413 247h1V252h-1zM414 247h1V252h-1zM415 247h1V252h-1zM416 246h1V252h-1zM417 247h1V252h-1zM418 247h1V252h-1zM419 247h1V252h-1zM420 247h1V252h-1zM421 247h1V251h-1zM422 247h1V251h-1zM423 247h1V252h-1zM424 247h1V252h-1zM425 247h1V252h-1zM426 248h1V252h-1zM427 247h1V252h-1zM428 246h1V252h-1zM429 246h1V252h-1zM430 247h1V252h-1zM431 248h1V252h-1zM432 247h1V252h-1zM433 247h1V252h-1zM434 247h1V252h-1zM435 247h1V252h-1zM436 247h1V252h-1zM437 247h1V252h-1zM438 246h1V252h-1zM439 247h1V252h-1zM440 247h1V252h-1zM441 247h1V252h-1zM442 247h1V252h-1zM443 247h1V252h-1zM444 247h1V252h-1zM445 247h1V252h-1zM446 247h1V252h-1zM447 247h1V252h-1zM448 247h1V252h-1zM449 247h1V252h-1zM450 247h1V252h-1zM451 247h1V252h-1zM452 246h1V251h-1zM453 247h1V252h-1zM454 247h1V252h-1zM455 247h1V251h-1zM456 247h1V252h-1zM457 247h1V252h-1zM458 247h1V252h-1zM459 247h1V252h-1zM460 247h1V252h-1zM461 246h1V252h-1zM462 247h1V253h-1zM463 247h1V252h-1zM464 247h1V252h-1zM465 247h1V253h-1zM466 248h1V252h-1zM467 247h1V252h-1zM468 248h1V252h-1zM469 247h1V252h-1zM470 247h1V252h-1zM471 247h1V252h-1zM472 247h1V252h-1zM473 247h1V252h-1zM474 248h1V252h-1zM475 247h1V252h-1zM476 248h1V252h-1zM477 247h1V252h-1zM478 247h1V252h-1zM479 248h1V252h-1zM480 247h1V252h-1zM481 247h1V252h-1zM482 247h1V251h-1zM483 247h1V252h-1zM484 247h1V252h-1zM485 247h1V252h-1zM486 247h1V251h-1zM487 247h1V251h-1zM488 247h1V252h-1zM489 248h1V252h-1zM490 248h1V252h-1zM491 247h1V252h-1zM492 247h1V252h-1zM493 247h1V251h-1zM494 247h1V252h-1zM495 247h1V251h-1zM496 247h1V252h-1zM497 247h1V252h-1zM498 247h1V252h-1zM499 245h1V252h-1zM500 247h1V252h-1zM501 246h1V252h-1zM502 247h1V251h-1zM503 247h1V252h-1zM504 247h1V252h-1zM505 247h1V253h-1zM506 247h1V252h-1zM507 247h1V252h-1zM508 247h1V252h-1zM509 247h1V252h-1zM510 247h1V252h-1zM511 247h1V252h-1zM512 247h1V252h-1zM513 247h1V253h-1zM514 247h1V252h-1zM515 247h1V252h-1zM516 247h1V253h-1zM517 247h1V252h-1zM518 247h1V252h-1zM519 247h1V252h-1zM520 247h1V252h-1zM521 247h1V252h-1zM522 247h1V252h-1zM523 247h1V252h-1zM524 247h1V254h-1zM525 247h1V252h-1zM526 247h1V252h-1zM527 247h1V254h-1zM528 247h1V252h-1zM529 247h1V252h-1zM530 247h1V252h-1zM531 246h1V251h-1zM532 247h1V252h-1zM533 247h1V252h-1zM534 247h1V251h-1zM535 247h1V252h-1zM536 247h1V252h-1zM537 247h1V251h-1zM538 247h1V252h-1zM539 247h1V252h-1zM540 247h1V252h-1zM541 247h1V252h-1zM542 247h1V252h-1zM543 247h1V252h-1zM544 247h1V252h-1zM545 247h1V252h-1zM546 247h1V252h-1zM547 247h1V252h-1zM548 247h1V252h-1zM549 247h1V252h-1zM550 247h1V252h-1zM551 247h1V252h-1zM552 246h1V252h-1zM553 247h1V252h-1zM554 247h1V252h-1zM555 247h1V252h-1zM556 247h1V252h-1zM557 247h1V252h-1zM558 247h1V251h-1zM559 248h1V252h-1zM560 247h1V252h-1zM561 247h1V253h-1zM562 247h1V252h-1zM563 247h1V252h-1zM564 247h1V252h-1zM565 247h1V252h-1zM566 247h1V251h-1zM567 247h1V252h-1zM568 247h1V252h-1zM569 247h1V252h-1zM570 248h1V252h-1zM571 247h1V252h-1zM572 247h1V252h-1zM573 247h1V254h-1zM574 247h1V251h-1zM575 247h1V252h-1zM576 247h1V252h-1zM577 247h1V251h-1zM578 247h1V252h-1zM579 247h1V251h-1zM580 247h1V252h-1zM581 247h1V251h-1zM582 247h1V252h-1zM583 247h1V252h-1zM584 245h1V252h-1zM585 247h1V252h-1zM586 245h1V251h-1zM587 247h1V252h-1zM588 247h1V252h-1zM589 247h1V252h-1zM590 247h1V252h-1zM591 247h1V252h-1zM592 247h1V252h-1zM593 247h1V252h-1zM594 247h1V252h-1zM595 248h1V253h-1zM596 247h1V252h-1zM597 247h1V252h-1zM598 247h1V251h-1zM599 247h1V251h-1zM600 247h1V252h-1zM601 247h1V252h-1zM602 247h1V252h-1zM603 247h1V252h-1zM604 247h1V252h-1zM605 247h1V252h-1zM606 247h1V251h-1zM607 247h1V252h-1zM608 247h1V252h-1zM609 248h1V253h-1zM610 247h1V253h-1zM611 247h1V251h-1zM612 247h1V252h-1zM613 247h1V251h-1zM614 247h1V252h-1zM615 246h1V252h-1zM616 248h1V252h-1zM617 246h1V252h-1zM618 247h1V252h-1zM619 247h1V252h-1zM620 247h1V252h-1zM621 247h1V251h-1zM622 247h1V252h-1zM623 247h1V252h-1zM624 247h1V251h-1zM625 247h1V252h-1zM626 247h1V252h-1zM627 247h1V252h-1zM628 247h1V252h-1zM629 247h1V252h-1zM630 247h1V252h-1zM631 247h1V252h-1zM632 247h1V251h-1zM633 247h1V252h-1zM634 247h1V252h-1zM635 247h1V252h-1zM636 246h1V252h-1zM637 248h1V252h-1zM638 247h1V252h-1zM639 247h1V252h-1zM640 248h1V252h-1zM641 247h1V252h-1zM642 247h1V252h-1zM643 247h1V252h-1zM644 247h1V252h-1zM645 247h1V252h-1zM646 247h1V252h-1zM647 247h1V252h-1zM648 247h1V252h-1zM649 247h1V252h-1zM650 247h1V252h-1zM651 247h1V252h-1zM652 247h1V252h-1zM653 248h1V252h-1zM654 247h1V252h-1zM655 247h1V252h-1zM656 247h1V252h-1zM657 247h1V254h-1zM658 248h1V252h-1zM659 247h1V252h-1zM660 246h1V252h-1zM661 247h1V252h-1zM662 247h1V252h-1zM663 247h1V252h-1zM664 247h1V252h-1zM665 247h1V251h-1zM666 247h1V252h-1zM667 247h1V252h-1zM668 247h1V252h-1zM669 247h1V252h-1zM670 247h1V251h-1zM671 247h1V252h-1zM672 247h1V254h-1zM673 248h1V252h-1zM674 247h1V253h-1zM675 247h1V252h-1zM676 247h1V253h-1zM677 247h1V252h-1zM678 247h1V251h-1zM679 247h1V252h-1zM680 247h1V252h-1zM681 247h1V252h-1zM682 247h1V252h-1zM683 247h1V252h-1zM684 247h1V252h-1zM685 247h1V252h-1zM686 247h1V252h-1zM687 247h1V252h-1zM688 247h1V251h-1zM689 247h1V252h-1zM690 247h1V252h-1zM691 247h1V252h-1zM692 247h1V252h-1zM693 247h1V252h-1zM694 247h1V252h-1zM695 246h1V252h-1zM696 246h1V252h-1zM697 247h1V252h-1zM698 247h1V252h-1zM699 247h1V253h-1zM700 247h1V252h-1zM701 247h1V252h-1zM702 247h1V251h-1zM703 247h1V251h-1zM704 247h1V252h-1zM705 247h1V252h-1zM706 247h1V252h-1zM707 247h1V252h-1zM708 247h1V252h-1zM709 247h1V252h-1zM710 247h1V252h-1zM711 247h1V252h-1zM712 247h1V253h-1zM713 248h1V252h-1zM714 245h1V252h-1zM715 247h1V252h-1zM716 247h1V251h-1zM717 248h1V252h-1zM718 247h1V252h-1zM719 247h1V252h-1zM720 247h1V252h-1zM721 247h1V252h-1zM722 247h1V252h-1zM723 247h1V252h-1zM724 247h1V252h-1zM725 247h1V252h-1zM726 247h1V252h-1zM727 248h1V252h-1zM728 247h1V252h-1zM729 247h1V252h-1zM730 247h1V252h-1zM731 248h1V252h-1zM732 247h1V252h-1zM733 247h1V251h-1zM734 247h1V252h-1zM735 247h1V252h-1zM736 247h1V252h-1zM737 247h1V252h-1zM738 247h1V252h-1zM739 247h1V252h-1zM740 247h1V252h-1zM741 247h1V252h-1zM742 247h1V252h-1zM743 247h1V252h-1zM744 247h1V251h-1zM745 247h1V252h-1zM746 247h1V252h-1zM747 248h1V254h-1zM748 247h1V252h-1zM749 247h1V252h-1zM750 247h1V254h-1zM751 247h1V252h-1zM752 247h1V252h-1zM753 246h1V252h-1zM754 247h1V252h-1zM755 247h1V252h-1zM756 246h1V252h-1zM757 244h1V255h-1zM758 237h1V262h-1zM759 241h1V257h-1zM760 244h1V255h-1zM761 245h1V255h-1zM762 246h1V253h-1zM763 247h1V253h-1zM764 246h1V252h-1zM765 247h1V252h-1zM766 247h1V252h-1zM767 247h1V252h-1zM768 247h1V252h-1zM769 247h1V252h-1zM770 247h1V252h-1zM771 247h1V252h-1zM772 248h1V252h-1zM773 247h1V252h-1zM774 247h1V252h-1zM775 247h1V252h-1zM776 248h1V252h-1zM777 245h1V251h-1zM778 247h1V252h-1zM779 247h1V252h-1zM780 247h1V252h-1zM781 247h1V252h-1zM782 248h1V251h-1zM783 247h1V251h-1zM784 247h1V252h-1zM785 247h1V252h-1zM786 247h1V252h-1zM787 247h1V252h-1zM788 247h1V252h-1zM789 247h1V252h-1zM790 247h1V252h-1zM791 247h1V252h-1zM792 247h1V252h-1zM793 247h1V252h-1zM794 247h1V252h-1zM795 247h1V252h-1zM796 247h1V252h-1zM797 247h1V252h-1zM798 247h1V252h-1zM799 246h1V252h-1zM800 247h1V252h-1zM801 248h1V257h-1zM802 252h1V260h-1zM803 256h1V264h-1zM804 260h1V267h-1zM805 262h1V269h-1zM806 264h1V271h-1zM807 266h1V272h-1zM808 268h1V273h-1zM809 269h1V274h-1zM810 270h1V274h-1zM811 113h1V136h-1zM812 117h1V133h-1zM813 119h1V130h-1zM814 120h1V129h-1zM815 121h1V128h-1zM816 121h1V128h-1zM817 122h1V127h-1zM818 122h1V127h-1zM819 122h1V127h-1zM820 122h1V127h-1zM821 122h1V127h-1zM822 122h1V127h-1zM823 122h1V126h-1zM824 122h1V127h-1zM825 122h1V127h-1zM826 122h1V127h-1zM827 122h1V127h-1zM828 122h1V127h-1zM829 122h1V127h-1zM830 122h1V127h-1zM831 122h1V127h-1zM832 122h1V127h-1zM833 122h1V127h-1zM834 122h1V127h-1zM835 122h1V127h-1zM836 122h1V127h-1zM837 123h1V126h-1zM838 122h1V127h-1zM839 123h1V127h-1zM840 122h1V127h-1zM841 122h1V127h-1zM842 122h1V127h-1zM843 122h1V127h-1zM844 123h1V127h-1zM845 122h1V127h-1zM846 122h1V127h-1zM847 122h1V127h-1zM848 122h1V127h-1zM849 122h1V127h-1zM850 122h1V127h-1zM851 122h1V127h-1zM852 123h1V128h-1zM853 122h1V127h-1zM854 122h1V127h-1zM855 122h1V127h-1zM856 122h1V127h-1zM857 120h1V127h-1zM858 122h1V127h-1zM859 122h1V127h-1zM860 122h1V127h-1zM861 122h1V126h-1zM862 122h1V127h-1zM863 122h1V127h-1zM864 122h1V127h-1zM865 122h1V127h-1zM866 122h1V127h-1zM867 123h1V127h-1zM868 122h1V126h-1zM869 122h1V127h-1zM870 123h1V127h-1zM871 122h1V127h-1zM872 123h1V126h-1zM873 122h1V127h-1zM874 122h1V127h-1zM875 122h1V127h-1zM876 122h1V128h-1zM877 122h1V127h-1zM878 122h1V127h-1zM879 122h1V127h-1zM880 122h1V126h-1zM881 122h1V127h-1zM882 122h1V127h-1zM883 122h1V127h-1zM884 122h1V126h-1zM885 120h1V127h-1zM886 122h1V129h-1zM887 122h1V127h-1zM888 122h1V127h-1zM889 122h1V127h-1zM890 122h1V127h-1zM891 122h1V127h-1zM892 122h1V126h-1zM893 121h1V127h-1zM894 122h1V128h-1zM895 121h1V126h-1zM896 122h1V127h-1zM897 122h1V127h-1zM898 122h1V127h-1zM899 122h1V127h-1zM900 123h1V127h-1zM901 122h1V126h-1zM902 122h1V127h-1zM903 122h1V127h-1zM904 122h1V127h-1zM905 122h1V126h-1zM906 122h1V127h-1zM907 122h1V127h-1zM908 122h1V127h-1zM909 122h1V127h-1zM910 122h1V127h-1zM911 122h1V127h-1zM912 122h1V127h-1zM913 121h1V127h-1zM914 122h1V128h-1zM915 122h1V127h-1zM916 122h1V127h-1zM917 122h1V127h-1zM918 122h1V127h-1zM919 122h1V127h-1zM920 122h1V127h-1zM921 122h1V126h-1zM922 122h1V127h-1zM923 122h1V127h-1zM924 122h1V127h-1zM925 122h1V127h-1zM926 122h1V127h-1zM927 122h1V127h-1zM928 123h1V127h-1zM929 122h1V127h-1zM930 121h1V126h-1zM931 122h1V127h-1zM932 122h1V127h-1zM933 122h1V126h-1zM934 123h1V129h-1zM935 122h1V127h-1zM936 122h1V127h-1zM937 122h1V127h-1zM938 122h1V127h-1zM939 122h1V127h-1zM940 122h1V127h-1zM941 123h1V127h-1zM942 122h1V127h-1zM943 122h1V127h-1zM944 122h1V127h-1zM945 122h1V127h-1zM946 122h1V127h-1zM947 121h1V127h-1zM948 122h1V127h-1zM949 122h1V127h-1zM950 123h1V127h-1zM951 122h1V127h-1zM952 122h1V126h-1zM953 122h1V127h-1zM954 123h1V127h-1zM955 121h1V127h-1zM956 122h1V127h-1zM957 122h1V126h-1zM958 122h1V127h-1zM959 122h1V129h-1zM960 122h1V127h-1zM961 122h1V127h-1zM962 122h1V127h-1zM963 122h1V127h-1zM964 122h1V127h-1zM965 122h1V127h-1zM966 122h1V127h-1zM967 122h1V127h-1zM968 122h1V127h-1zM969 122h1V128h-1zM970 122h1V127h-1zM971 122h1V127h-1zM972 122h1V127h-1zM973 122h1V127h-1zM974 122h1V127h-1zM975 122h1V127h-1zM976 122h1V127h-1zM977 123h1V127h-1zM978 121h1V127h-1zM979 122h1V126h-1zM980 122h1V127h-1zM981 122h1V127h-1zM982 122h1V127h-1zM983 122h1V126h-1zM984 122h1V127h-1zM985 122h1V126h-1zM986 122h1V126h-1zM987 121h1V127h-1zM988 122h1V127h-1zM989 122h1V127h-1zM990 122h1V126h-1zM991 122h1V127h-1zM992 122h1V127h-1zM993 122h1V127h-1zM994 122h1V127h-1zM995 122h1V127h-1zM996 122h1V127h-1zM997 121h1V127h-1zM998 122h1V127h-1zM999 122h1V127h-1zM1000 122h1V127h-1zM1001 123h1V127h-1zM1002 122h1V127h-1zM1003 122h1V127h-1zM1004 122h1V127h-1zM1005 121h1V126h-1zM1006 122h1V126h-1zM1007 122h1V127h-1zM1008 122h1V127h-1zM1009 122h1V127h-1zM1010 122h1V127h-1zM1011 122h1V127h-1zM1012 122h1V127h-1zM1013 122h1V127h-1zM1014 122h1V127h-1zM1015 122h1V127h-1zM1016 122h1V127h-1zM1017 121h1V127h-1zM1018 123h1V126h-1zM1019 121h1V127h-1zM1020 122h1V127h-1zM1021 122h1V127h-1zM1022 123h1V126h-1zM1023 122h1V127h-1zM1024 123h1V127h-1zM1025 122h1V127h-1zM1026 122h1V127h-1zM1027 122h1V127h-1zM1028 122h1V127h-1zM1029 122h1V127h-1zM1030 122h1V127h-1zM1031 122h1V127h-1zM1032 122h1V127h-1zM1033 123h1V127h-1zM1034 122h1V127h-1zM1035 122h1V126h-1zM1036 122h1V127h-1zM1037 123h1V126h-1zM1038 122h1V127h-1zM1039 122h1V126h-1zM1040 122h1V127h-1zM1041 122h1V126h-1zM1042 122h1V127h-1zM1043 122h1V127h-1zM1044 122h1V128h-1zM1045 122h1V127h-1zM1046 122h1V127h-1zM1047 122h1V127h-1zM1048 122h1V127h-1zM1049 122h1V127h-1zM1050 123h1V127h-1zM1051 121h1V127h-1zM1052 122h1V127h-1zM1053 122h1V127h-1zM1054 122h1V127h-1zM1055 123h1V127h-1zM1056 122h1V127h-1zM1057 123h1V127h-1zM1058 123h1V127h-1zM1059 123h1V127h-1zM1060 123h1V127h-1zM1061 122h1V127h-1zM1062 122h1V126h-1zM1063 122h1V127h-1zM1064 122h1V127h-1zM1065 122h1V127h-1zM1066 122h1V127h-1zM1067 122h1V127h-1zM1068 121h1V126h-1zM1069 122h1V126h-1zM1070 122h1V127h-1zM1071 122h1V126h-1zM1072 122h1V127h-1zM1073 122h1V127h-1zM1074 122h1V127h-1zM1075 122h1V127h-1zM1076 122h1V127h-1zM1077 122h1V127h-1zM1078 122h1V129h-1zM1079 122h1V127h-1zM1080 122h1V127h-1zM1081 122h1V127h-1zM1082 122h1V128h-1zM1083 122h1V127h-1zM1084 122h1V127h-1zM1085 123h1V126h-1zM1086 122h1V127h-1zM1087 122h1V127h-1zM1088 122h1V126h-1zM1089 122h1V127h-1zM1090 122h1V127h-1zM1091 122h1V127h-1zM1092 122h1V127h-1zM1093 122h1V127h-1zM1094 123h1V127h-1zM1095 122h1V127h-1zM1096 123h1V127h-1zM1097 122h1V127h-1zM1098 122h1V127h-1zM1099 121h1V127h-1zM1100 122h1V127h-1zM1101 122h1V126h-1zM1102 122h1V127h-1zM1103 122h1V127h-1zM1104 122h1V127h-1zM1105 122h1V126h-1zM1106 122h1V127h-1zM1107 122h1V127h-1zM1108 123h1V127h-1zM1109 122h1V127h-1zM1110 122h1V127h-1zM1111 123h1V127h-1zM1112 122h1V127h-1zM1113 122h1V127h-1zM1114 122h1V127h-1zM1115 122h1V127h-1zM1116 122h1V126h-1zM1117 122h1V127h-1zM1118 122h1V127h-1zM1119 122h1V127h-1zM1120 122h1V127h-1zM1121 121h1V127h-1zM1122 122h1V127h-1zM1123 123h1V129h-1zM1124 122h1V127h-1zM1125 122h1V127h-1zM1126 122h1V127h-1zM1127 122h1V127h-1zM1128 122h1V127h-1zM1129 122h1V127h-1zM1130 122h1V127h-1zM1131 123h1V127h-1zM1132 122h1V127h-1zM1133 122h1V127h-1zM1134 122h1V127h-1zM1135 122h1V126h-1zM1136 122h1V127h-1zM1137 122h1V127h-1zM1138 123h1V126h-1zM1139 122h1V126h-1zM1140 122h1V127h-1zM1141 122h1V127h-1zM1142 122h1V127h-1zM1143 122h1V126h-1zM1144 122h1V126h-1zM1145 123h1V127h-1zM1146 123h1V127h-1zM1147 122h1V127h-1zM1148 121h1V127h-1zM1149 122h1V127h-1zM1150 122h1V128h-1zM1151 122h1V127h-1zM1152 122h1V127h-1zM1153 122h1V128h-1zM1154 123h1V127h-1zM1155 122h1V127h-1zM1156 122h1V127h-1zM1157 122h1V127h-1zM1158 122h1V127h-1zM1159 121h1V127h-1zM1160 122h1V127h-1zM1161 122h1V127h-1zM1162 122h1V127h-1zM1163 122h1V127h-1zM1164 122h1V127h-1zM1165 122h1V126h-1zM1166 122h1V127h-1zM1167 122h1V127h-1zM1168 122h1V127h-1zM1169 122h1V129h-1zM1170 122h1V127h-1zM1171 121h1V127h-1zM1172 122h1V127h-1zM1173 122h1V126h-1zM1174 122h1V127h-1zM1175 122h1V126h-1zM1176 122h1V127h-1zM1177 122h1V127h-1zM1178 122h1V127h-1zM1179 121h1V127h-1zM1180 121h1V128h-1zM1181 119h1V130h-1zM1182 112h1V138h-1zM1183 116h1V134h-1zM1184 119h1V130h-1zM1185 120h1V129h-1zM1186 121h1V128h-1zM1187 122h1V128h-1zM1188 121h1V127h-1zM1189 122h1V127h-1zM1190 122h1V127h-1zM1191 122h1V127h-1zM1192 122h1V127h-1zM1193 122h1V127h-1zM1194 122h1V127h-1zM1195 122h1V127h-1zM1196 122h1V127h-1zM1197 122h1V127h-1zM1198 122h1V127h-1zM1199 121h1V127h-1zM1200 122h1V127h-1zM1201 122h1V127h-1zM1202 122h1V127h-1zM1203 122h1V127h-1zM1204 122h1V127h-1zM1205 122h1V127h-1zM1206 122h1V126h-1zM1207 122h1V127h-1zM1208 123h1V127h-1zM1209 122h1V127h-1zM1210 122h1V127h-1zM1211 122h1V127h-1zM1212 122h1V127h-1zM1213 122h1V127h-1zM1214 122h1V127h-1zM1215 122h1V127h-1zM1216 122h1V127h-1zM1217 122h1V127h-1zM1218 123h1V126h-1zM1219 122h1V127h-1zM1220 122h1V127h-1zM1221 122h1V127h-1zM1222 122h1V126h-1zM1223 122h1V127h-1zM1224 122h1V127h-1zM1225 122h1V127h-1zM1226 116h1V126h-1zM1227 110h1V120h-1zM1228 106h1V115h-1zM1229 104h1V111h-1zM1230 103h1V109h-1zM1231 101h1V107h-1zM1232 100h1V107h-1zM1233 100h1V106h-1zM1234 99h1V105h-1zM1235 99h1V105h-1zM1236 231h1V268h-1zM1237 236h1V263h-1zM1238 240h1V259h-1zM1239 242h1V257h-1zM1240 243h1V255h-1zM1241 245h1V254h-1zM1242 245h1V253h-1zM1243 246h1V253h-1zM1244 247h1V253h-1zM1245 247h1V252h-1zM1246 247h1V252h-1zM1247 247h1V252h-1zM1248 247h1V252h-1zM1249 247h1V252h-1zM1250 247h1V252h-1zM1251 247h1V252h-1zM1252 247h1V252h-1zM1253 247h1V252h-1zM1254 247h1V252h-1zM1255 247h1V252h-1zM1256 247h1V252h-1zM1257 247h1V252h-1zM1258 247h1V252h-1zM1259 247h1V252h-1zM1260 247h1V252h-1zM1261 247h1V252h-1zM1262 247h1V252h-1zM1263 247h1V254h-1zM1264 247h1V252h-1zM1265 247h1V252h-1zM1266 246h1V252h-1zM1267 247h1V252h-1zM1268 247h1V252h-1zM1269 247h1V252h-1zM1270 247h1V254h-1zM1271 247h1V252h-1zM1272 247h1V252h-1zM1273 248h1V252h-1zM1274 247h1V252h-1zM1275 247h1V252h-1zM1276 247h1V252h-1zM1277 246h1V252h-1zM1278 247h1V252h-1zM1279 247h1V252h-1zM1280 246h1V252h-1zM1281 247h1V253h-1zM1282 246h1V252h-1zM1283 247h1V252h-1zM1284 247h1V252h-1zM1285 247h1V251h-1zM1286 247h1V252h-1zM1287 247h1V252h-1zM1288 247h1V252h-1zM1289 247h1V252h-1zM1290 247h1V252h-1zM1291 247h1V251h-1zM1292 247h1V252h-1zM1293 247h1V252h-1zM1294 247h1V252h-1zM1295 247h1V252h-1zM1296 247h1V252h-1zM1297 247h1V252h-1zM1298 247h1V252h-1zM1299 247h1V252h-1zM1300 247h1V252h-1zM1301 247h1V251h-1zM1302 247h1V254h-1zM1303 247h1V252h-1zM1304 247h1V252h-1zM1305 247h1V252h-1zM1306 247h1V251h-1zM1307 247h1V252h-1zM1308 247h1V252h-1zM1309 248h1V252h-1zM1310 247h1V252h-1zM1311 247h1V252h-1zM1312 247h1V252h-1zM1313 247h1V252h-1zM1314 248h1V252h-1zM1315 247h1V252h-1zM1316 247h1V252h-1zM1317 247h1V252h-1zM1318 247h1V252h-1zM1319 247h1V251h-1zM1320 247h1V252h-1zM1321 247h1V252h-1zM1322 247h1V252h-1zM1323 247h1V252h-1zM1324 247h1V252h-1zM1325 247h1V252h-1zM1326 247h1V252h-1zM1327 248h1V252h-1zM1328 247h1V252h-1zM1329 247h1V252h-1zM1330 247h1V252h-1zM1331 247h1V251h-1zM1332 247h1V252h-1zM1333 247h1V252h-1zM1334 247h1V252h-1zM1335 247h1V252h-1zM1336 247h1V252h-1zM1337 247h1V252h-1zM1338 247h1V252h-1zM1339 247h1V251h-1zM1340 247h1V252h-1zM1341 246h1V251h-1zM1342 246h1V252h-1zM1343 247h1V252h-1zM1344 247h1V252h-1zM1345 247h1V252h-1zM1346 247h1V251h-1zM1347 246h1V252h-1zM1348 247h1V251h-1zM1349 247h1V252h-1zM1350 247h1V252h-1zM1351 247h1V252h-1zM1352 247h1V251h-1zM1353 247h1V252h-1zM1354 247h1V252h-1zM1355 247h1V252h-1zM1356 247h1V252h-1zM1357 247h1V252h-1zM1358 248h1V252h-1zM1359 247h1V252h-1zM1360 247h1V252h-1zM1361 246h1V252h-1zM1362 247h1V252h-1zM1363 247h1V252h-1zM1364 247h1V252h-1zM1365 247h1V251h-1zM1366 247h1V252h-1zM1367 247h1V252h-1zM1368 248h1V252h-1zM1369 247h1V252h-1zM1370 247h1V252h-1zM1371 247h1V254h-1zM1372 247h1V252h-1zM1373 247h1V252h-1zM1374 247h1V252h-1zM1375 247h1V251h-1zM1376 247h1V252h-1zM1377 247h1V252h-1zM1378 247h1V252h-1zM1379 247h1V253h-1zM1380 247h1V252h-1zM1381 247h1V252h-1zM1382 247h1V251h-1zM1383 245h1V252h-1zM1384 247h1V253h-1zM1385 247h1V252h-1zM1386 248h1V252h-1zM1387 247h1V251h-1zM1388 247h1V252h-1zM1389 248h1V252h-1zM1390 247h1V253h-1zM1391 247h1V252h-1zM1392 247h1V252h-1zM1393 247h1V252h-1zM1394 247h1V252h-1zM1395 247h1V253h-1zM1396 247h1V252h-1zM1397 247h1V252h-1zM1398 247h1V252h-1zM1399 247h1V252h-1zM1400 247h1V251h-1zM1401 247h1V252h-1zM1402 248h1V252h-1zM1403 247h1V252h-1zM1404 246h1V252h-1zM1405 247h1V253h-1zM1406 247h1V252h-1zM1407 247h1V252h-1zM1408 247h1V252h-1zM1409 247h1V252h-1zM1410 247h1V252h-1zM1411 247h1V252h-1zM1412 247h1V252h-1zM1413 247h1V252h-1zM1414 248h1V252h-1zM1415 247h1V252h-1zM1416 246h1V252h-1zM1417 247h1V251h-1zM1418 247h1V252h-1zM1419 247h1V251h-1zM1420 247h1V251h-1zM1421 247h1V252h-1zM1422 247h1V252h-1zM1423 247h1V251h-1zM1424 247h1V252h-1zM1425 246h1V252h-1zM1426 247h1V252h-1zM1427 248h1V252h-1zM1428 247h1V252h-1zM1429 247h1V252h-1zM1430 247h1V252h-1zM1431 248h1V252h-1zM1432 247h1V252h-1zM1433 247h1V251h-1zM1434 248h1V252h-1zM1435 247h1V252h-1zM1436 247h1V253h-1zM1437 247h1V252h-1zM1438 248h1V252h-1zM1439 247h1V251h-1zM1440 247h1V252h-1zM1441 246h1V252h-1zM1442 247h1V251h-1zM1443 247h1V252h-1zM1444 247h1V252h-1zM1445 247h1V252h-1zM1446 246h1V252h-1zM1447 248h1V252h-1zM1448 247h1V252h-1zM1449 248h1V252h-1zM1450 247h1V251h-1zM1451 248h1V252h-1zM1452 247h1V252h-1zM1453 247h1V252h-1zM1454 247h1V252h-1zM1455 247h1V252h-1zM1456 247h1V252h-1zM1457 247h1V252h-1zM1458 247h1V252h-1zM1459 247h1V252h-1zM1460 247h1V252h-1zM1461 247h1V252h-1zM1462 247h1V252h-1zM1463 247h1V252h-1zM1464 248h1V252h-1zM1465 247h1V252h-1zM1466 247h1V252h-1zM1467 248h1V252h-1zM1468 247h1V252h-1zM1469 247h1V252h-1zM1470 247h1V252h-1zM1471 247h1V251h-1zM1472 247h1V252h-1zM1473 247h1V252h-1zM1474 247h1V252h-1zM1475 247h1V251h-1zM1476 247h1V252h-1zM1477 247h1V252h-1zM1478 247h1V254h-1zM1479 247h1V252h-1zM1480 248h1V252h-1zM1481 246h1V252h-1zM1482 247h1V252h-1zM1483 247h1V252h-1zM1484 247h1V251h-1zM1485 247h1V252h-1zM1486 246h1V252h-1zM1487 247h1V252h-1zM1488 247h1V252h-1zM1489 247h1V251h-1zM1490 246h1V252h-1zM1491 247h1V252h-1zM1492 248h1V252h-1zM1493 247h1V253h-1zM1494 247h1V252h-1zM1495 247h1V252h-1zM1496 247h1V252h-1zM1497 247h1V251h-1zM1498 247h1V252h-1zM1499 248h1V252h-1zM1500 247h1V252h-1zM1501 247h1V252h-1zM1502 247h1V252h-1zM1503 247h1V252h-1zM1504 247h1V252h-1zM1505 247h1V252h-1zM1506 247h1V252h-1zM1507 247h1V252h-1zM1508 248h1V252h-1zM1509 247h1V252h-1zM1510 247h1V251h-1zM1511 247h1V252h-1zM1512 246h1V252h-1zM1513 247h1V252h-1zM1514 246h1V251h-1zM1515 248h1V252h-1zM1516 247h1V252h-1zM1517 247h1V252h-1zM1518 247h1V252h-1zM1519 247h1V252h-1zM1520 247h1V252h-1zM1521 248h1V252h-1zM1522 247h1V252h-1zM1523 247h1V252h-1zM1524 248h1V252h-1zM1525 247h1V252h-1zM1526 248h1V252h-1zM1527 247h1V252h-1zM1528 247h1V252h-1zM1529 247h1V252h-1zM1530 247h1V252h-1zM1531 247h1V252h-1zM1532 248h1V252h-1zM1533 247h1V251h-1zM1534 247h1V252h-1zM1535 247h1V252h-1zM1536 247h1V252h-1zM1537 248h1V252h-1zM1538 247h1V252h-1zM1539 247h1V252h-1zM1540 247h1V252h-1zM1541 247h1V252h-1zM1542 247h1V252h-1zM1543 248h1V252h-1zM1544 247h1V251h-1zM1545 247h1V252h-1zM1546 247h1V254h-1zM1547 247h1V252h-1zM1548 247h1V252h-1zM1549 247h1V252h-1zM1550 247h1V252h-1zM1551 247h1V252h-1zM1552 248h1V252h-1zM1553 248h1V252h-1zM1554 247h1V251h-1zM1555 247h1V252h-1zM1556 247h1V253h-1zM1557 247h1V252h-1zM1558 247h1V251h-1zM1559 247h1V252h-1zM1560 247h1V252h-1zM1561 248h1V252h-1zM1562 247h1V252h-1zM1563 247h1V251h-1zM1564 247h1V252h-1zM1565 248h1V252h-1zM1566 247h1V252h-1zM1567 247h1V253h-1zM1568 247h1V252h-1zM1569 247h1V252h-1zM1570 247h1V252h-1zM1571 247h1V252h-1zM1572 247h1V252h-1zM1573 247h1V251h-1zM1574 248h1V252h-1zM1575 247h1V252h-1zM1576 247h1V252h-1zM1577 247h1V252h-1zM1578 248h1V252h-1zM1579 247h1V252h-1zM1580 247h1V252h-1zM1581 247h1V252h-1zM1582 247h1V252h-1zM1583 248h1V252h-1zM1584 247h1V252h-1zM1585 247h1V252h-1zM1586 247h1V252h-1zM1587 247h1V252h-1zM1588 248h1V252h-1zM1589 245h1V252h-1zM1590 248h1V252h-1zM1591 247h1V252h-1zM1592 247h1V252h-1zM1593 247h1V252h-1zM1594 247h1V252h-1zM1595 247h1V252h-1zM1596 248h1V252h-1zM1597 247h1V252h-1zM1598 247h1V252h-1zM1599 247h1V251h-1zM1600 247h1V252h-1zM1601 247h1V252h-1zM1602 246h1V252h-1zM1603 247h1V252h-1zM1604 247h1V252h-1zM1605 247h1V252h-1zM1606 246h1V253h-1zM1607 244h1V255h-1zM1608 238h1V262h-1zM1609 242h1V257h-1zM1610 244h1V255h-1zM1611 246h1V254h-1zM1612 246h1V253h-1zM1613 246h1V252h-1zM1614 247h1V253h-1zM1615 247h1V252h-1zM1616 247h1V252h-1zM1617 247h1V252h-1zM1618 248h1V252h-1zM1619 247h1V251h-1zM1620 247h1V252h-1zM1621 247h1V252h-1zM1622 247h1V252h-1zM1623 246h1V252h-1zM1624 247h1V252h-1zM1625 247h1V252h-1zM1626 245h1V252h-1zM1627 247h1V252h-1zM1628 247h1V252h-1zM1629 247h1V252h-1zM1630 247h1V252h-1zM1631 247h1V252h-1zM1632 247h1V252h-1zM1633 247h1V252h-1zM1634 247h1V252h-1zM1635 247h1V252h-1zM1636 247h1V252h-1zM1637 247h1V252h-1zM1638 247h1V252h-1zM1639 247h1V252h-1zM1640 247h1V252h-1zM1641 248h1V252h-1zM1642 247h1V252h-1zM1643 247h1V252h-1zM1644 247h1V252h-1zM1645 247h1V252h-1zM1646 247h1V252h-1zM1647 247h1V251h-1zM1648 247h1V252h-1zM1649 247h1V252h-1zM1650 247h1V252h-1zM1651 248h1V257h-1zM1652 253h1V261h-1zM1653 256h1V264h-1zM1654 260h1V267h-1zM1655 263h1V269h-1zM1656 264h1V271h-1zM1657 266h1V272h-1zM1658 267h1V273h-1zM1659 268h1V274h-1zM1660 270h1V275h-1zM1661 113h1V136h-1zM1662 117h1V132h-1zM1663 119h1V130h-1zM1664 120h1V129h-1zM1665 121h1V128h-1zM1666 121h1V128h-1zM1667 122h1V128h-1zM1668 122h1V127h-1zM1669 122h1V127h-1zM1670 122h1V127h-1zM1671 122h1V127h-1zM1672 122h1V127h-1zM1673 122h1V127h-1zM1674 122h1V127h-1zM1675 122h1V127h-1zM1676 122h1V126h-1zM1677 122h1V127h-1zM1678 122h1V127h-1zM1679 122h1V127h-1zM1680 122h1V127h-1zM1681 122h1V127h-1zM1682 122h1V127h-1zM1683 123h1V128h-1zM1684 122h1V127h-1zM1685 123h1V127h-1zM1686 122h1V126h-1zM1687 122h1V127h-1zM1688 122h1V127h-1zM1689 122h1V127h-1zM1690 122h1V127h-1zM1691 122h1V127h-1zM1692 122h1V127h-1zM1693 122h1V127h-1zM1694 122h1V128h-1zM1695 120h1V127h-1zM1696 122h1V127h-1zM1697 122h1V126h-1zM1698 122h1V127h-1zM1699 122h1V127h-1zM1700 122h1V129h-1zM1701 122h1V127h-1zM1702 123h1V127h-1zM1703 122h1V127h-1zM1704 122h1V127h-1zM1705 122h1V127h-1zM1706 122h1V127h-1zM1707 122h1V127h-1zM1708 122h1V127h-1zM1709 122h1V127h-1zM1710 121h1V127h-1z" fill="#f7e81a"/>
<path d="M386 344h1V495h-1zM811 322h1V473h-1zM1236 344h1V495h-1zM1661 322h1V473h-1z" fill="#137078"/>
<path d="M13 471h1V475h-1zM14 472h1V475h-1zM15 471h1V475h-1zM16 472h1V475h-1zM17 471h1V475h-1zM18 472h1V475h-1zM19 472h1V475h-1zM20 471h1V475h-1zM21 471h1V475h-1zM22 471h1V475h-1zM23 472h1V475h-1zM24 471h1V475h-1zM25 471h1V475h-1zM26 471h1V475h-1zM27 471h1V475h-1zM28 472h1V475h-1zM29 472h1V475h-1zM30 471h1V475h-1zM31 472h1V475h-1zM32 471h1V475h-1zM33 471h1V475h-1zM34 472h1V475h-1zM35 471h1V475h-1zM36 472h1V476h-1zM37 471h1V475h-1zM38 472h1V475h-1zM39 471h1V475h-1zM40 471h1V475h-1zM41 471h1V475h-1zM42 471h1V475h-1zM43 471h1V475h-1zM44 471h1V475h-1zM45 471h1V475h-1zM46 471h1V475h-1zM47 472h1V475h-1zM48 472h1V475h-1zM49 471h1V475h-1zM50 472h1V475h-1zM51 472h1V475h-1zM52 471h1V475h-1zM53 471h1V475h-1zM54 471h1V475h-1zM55 471h1V475h-1zM56 472h1V475h-1zM57 470h1V475h-1zM58 472h1V475h-1zM59 471h1V475h-1zM60 472h1V475h-1zM61 472h1V475h-1zM62 472h1V475h-1zM63 472h1V475h-1zM64 471h1V475h-1zM65 471h1V475h-1zM66 472h1V475h-1zM67 471h1V475h-1zM68 472h1V475h-1zM69 471h1V475h-1zM70 471h1V475h-1zM71 471h1V475h-1zM72 471h1V475h-1zM73 471h1V476h-1zM74 471h1V475h-1zM75 471h1V475h-1zM76 471h1V475h-1zM77 472h1V475h-1zM78 471h1V475h-1zM79 471h1V475h-1zM80 472h1V475h-1zM81 472h1V475h-1zM82 472h1V475h-1zM83 472h1V475h-1zM84 472h1V475h-1zM85 471h1V475h-1zM86 472h1V475h-1zM87 471h1V475h-1zM88 472h1V475h-1zM89 472h1V475h-1zM90 472h1V475h-1zM91 471h1V475h-1zM92 472h1V475h-1zM93 471h1V476h-1zM94 471h1V475h-1zM95 472h1V475h-1zM96 471h1V475h-1zM97 471h1V475h-1zM98 472h1V475h-1zM99 472h1V475h-1zM100 471h1V475h-1zM101 471h1V475h-1zM102 471h1V475h-1zM103 472h1V475h-1zM104 472h1V475h-1zM105 471h1V475h-1zM106 471h1V475h-1zM107 472h1V475h-1zM108 472h1V475h-1zM109 471h1V475h-1zM110 472h1V475h-1zM111 471h1V475h-1zM112 472h1V475h-1zM113 472h1V475h-1zM114 471h1V475h-1zM115 471h1V475h-1zM116 472h1V475h-1zM117 472h1V475h-1zM118 471h1V475h-1zM119 472h1V475h-1zM120 471h1V475h-1zM121 471h1V475h-1zM122 471h1V475h-1zM123 471h1V475h-1zM124 471h1V475h-1zM125 471h1V475h-1zM126 471h1V475h-1zM127 471h1V475h-1zM128 472h1V475h-1zM129 471h1V475h-1zM130 471h1V475h-1zM131 472h1V476h-1zM132 471h1V475h-1zM133 472h1V475h-1zM134 471h1V475h-1zM135 472h1V475h-1zM136 472h1V475h-1zM137 472h1V475h-1zM138 472h1V475h-1zM139 471h1V476h-1zM140 471h1V475h-1zM141 472h1V475h-1zM142 471h1V475h-1zM143 472h1V475h-1zM144 472h1V475h-1zM145 471h1V475h-1zM146 471h1V475h-1zM147 472h1V475h-1zM148 471h1V475h-1zM149 472h1V475h-1zM150 471h1V475h-1zM151 472h1V475h-1zM152 471h1V475h-1zM153 472h1V475h-1zM154 472h1V475h-1zM155 472h1V475h-1zM156 471h1V475h-1zM157 471h1V475h-1zM158 472h1V475h-1zM159 471h1V475h-1zM160 471h1V475h-1zM161 471h1V475h-1zM162 470h1V475h-1zM163 472h1V475h-1zM164 470h1V475h-1zM165 471h1V475h-1zM166 472h1V475h-1zM167 471h1V475h-1zM168 472h1V475h-1zM169 472h1V475h-1zM170 472h1V475h-1zM171 471h1V475h-1zM172 471h1V475h-1zM173 471h1V475h-1zM174 470h1V475h-1zM175 471h1V475h-1zM176 472h1V475h-1zM177 471h1V475h-1zM178 471h1V475h-1zM179 471h1V475h-1zM180 471h1V475h-1zM181 471h1V475h-1zM182 471h1V475h-1zM183 471h1V476h-1zM184 471h1V476h-1zM185 472h1V475h-1zM186 471h1V475h-1zM187 472h1V475h-1zM188 472h1V476h-1zM189 471h1V475h-1zM190 471h1V476h-1zM191 472h1V475h-1zM192 471h1V475h-1zM193 471h1V475h-1zM194 471h1V475h-1zM195 472h1V475h-1zM196 472h1V475h-1zM197 471h1V475h-1zM198 472h1V475h-1zM199 472h1V475h-1zM200 471h1V475h-1zM201 471h1V475h-1zM202 471h1V475h-1zM203 471h1V475h-1zM204 471h1V475h-1zM205 472h1V475h-1zM206 471h1V475h-1zM207 471h1V475h-1zM208 472h1V475h-1zM209 471h1V475h-1zM210 471h1V475h-1zM211 471h1V475h-1zM212 472h1V475h-1zM213 472h1V476h-1zM214 471h1V475h-1zM215 472h1V475h-1zM216 471h1V475h-1zM217 471h1V475h-1zM218 471h1V475h-1zM219 471h1V475h-1zM220 472h1V475h-1zM221 471h1V475h-1zM222 472h1V475h-1zM223 472h1V475h-1zM224 471h1V475h-1zM225 471h1V475h-1zM226 472h1V475h-1zM227 471h1V475h-1zM228 472h1V475h-1zM229 471h1V475h-1zM230 471h1V475h-1zM231 471h1V475h-1zM232 471h1V475h-1zM233 471h1V475h-1zM234 471h1V475h-1zM235 472h1V475h-1zM236 472h1V475h-1zM237 470h1V475h-1zM238 472h1V475h-1zM239 472h1V475h-1zM240 471h1V475h-1zM241 471h1V475h-1zM242 471h1V475h-1zM243 471h1V475h-1zM244 471h1V475h-1zM245 472h1V476h-1zM246 471h1V475h-1zM247 471h1V475h-1zM248 471h1V475h-1zM249 472h1V475h-1zM250 472h1V475h-1zM251 471h1V475h-1zM252 471h1V475h-1zM253 471h1V475h-1zM254 472h1V475h-1zM255 471h1V475h-1zM256 471h1V475h-1zM257 471h1V475h-1zM258 471h1V475h-1zM259 471h1V475h-1zM260 471h1V475h-1zM261 472h1V475h-1zM262 472h1V475h-1zM263 471h1V475h-1zM264 471h1V475h-1zM265 472h1V475h-1zM266 471h1V475h-1zM267 471h1V475h-1zM268 471h1V475h-1zM269 471h1V475h-1zM270 471h1V475h-1zM271 471h1V475h-1zM272 471h1V475h-1zM273 472h1V475h-1zM274 472h1V475h-1zM275 470h1V475h-1zM276 471h1V475h-1zM277 471h1V475h-1zM278 471h1V475h-1zM279 471h1V475h-1zM280 471h1V475h-1zM281 471h1V475h-1zM282 471h1V475h-1zM283 472h1V475h-1zM284 472h1V475h-1zM285 471h1V475h-1zM286 471h1V475h-1zM287 472h1V475h-1zM288 471h1V475h-1zM289 472h1V475h-1zM290 471h1V475h-1zM291 471h1V475h-1zM292 471h1V475h-1zM293 472h1V475h-1zM294 472h1V475h-1zM295 472h1V475h-1zM296 471h1V475h-1zM297 470h1V475h-1zM298 472h1V475h-1zM299 471h1V475h-1zM300 472h1V475h-1zM301 471h1V475h-1zM302 471h1V475h-1zM303 471h1V477h-1zM304 471h1V475h-1zM305 471h1V475h-1zM306 472h1V475h-1zM307 471h1V475h-1zM308 471h1V475h-1zM309 471h1V476h-1zM310 471h1V475h-1zM311 471h1V475h-1zM312 471h1V475h-1zM313 472h1V475h-1zM314 471h1V475h-1zM315 472h1V475h-1zM316 471h1V475h-1zM317 471h1V475h-1zM318 472h1V475h-1zM319 471h1V475h-1zM320 471h1V475h-1zM321 471h1V475h-1zM322 471h1V475h-1zM323 471h1V475h-1zM324 471h1V475h-1zM325 471h1V475h-1zM326 472h1V475h-1zM327 471h1V475h-1zM328 471h1V476h-1zM329 471h1V475h-1zM330 471h1V475h-1zM331 471h1V476h-1zM332 468h1V478h-1zM333 462h1V485h-1zM334 466h1V480h-1zM335 468h1V478h-1zM336 470h1V476h-1zM337 471h1V476h-1zM338 470h1V476h-1zM339 471h1V475h-1zM340 471h1V475h-1zM341 471h1V475h-1zM342 471h1V475h-1zM343 471h1V475h-1zM344 472h1V475h-1zM345 471h1V475h-1zM346 471h1V475h-1zM347 471h1V475h-1zM348 471h1V475h-1zM349 471h1V475h-1zM350 472h1V475h-1zM351 472h1V475h-1zM352 471h1V475h-1zM353 471h1V475h-1zM354 471h1V475h-1zM355 471h1V475h-1zM356 471h1V475h-1zM357 472h1V475h-1zM358 472h1V475h-1zM359 471h1V475h-1zM360 471h1V475h-1zM361 472h1V475h-1zM362 472h1V475h-1zM363 471h1V475h-1zM364 472h1V475h-1zM365 472h1V475h-1zM366 471h1V475h-1zM367 471h1V475h-1zM368 471h1V475h-1zM369 471h1V475h-1zM370 472h1V475h-1zM371 472h1V475h-1zM372 472h1V475h-1zM373 471h1V475h-1zM374 471h1V475h-1zM375 471h1V475h-1zM376 472h1V480h-1zM377 477h1V483h-1zM378 481h1V487h-1zM379 483h1V489h-1zM380 486h1V491h-1zM381 488h1V493h-1zM382 489h1V494h-1zM383 491h1V495h-1zM384 492h1V496h-1zM385 493h1V497h-1zM386 327h1V361h-1zM387 331h1V358h-1zM388 334h1V356h-1zM389 336h1V354h-1zM390 338h1V352h-1zM391 339h1V351h-1zM392 339h1V350h-1zM393 340h1V349h-1zM394 341h1V349h-1zM395 341h1V348h-1zM396 342h1V348h-1zM397 342h1V347h-1zM398 342h1V347h-1zM399 343h1V347h-1zM400 343h1V347h-1zM401 343h1V347h-1zM402 343h1V347h-1zM403 343h1V347h-1zM404 343h1V347h-1zM405 343h1V347h-1zM406 343h1V347h-1zM407 343h1V346h-1zM408 342h1V347h-1zM409 343h1V346h-1zM410 343h1V347h-1zM411 343h1V347h-1zM412 343h1V346h-1zM413 343h1V346h-1zM414 343h1V346h-1zM415 343h1V346h-1zM416 343h1V346h-1zM417 343h1V346h-1zM418 343h1V347h-1zM419 343h1V347h-1zM420 343h1V348h-1zM421 343h1V347h-1zM422 343h1V347h-1zM423 343h1V347h-1zM424 343h1V348h-1zM425 343h1V347h-1zM426 343h1V347h-1zM427 343h1V347h-1zM428 342h1V346h-1zM429 343h1V346h-1zM430 343h1V347h-1zM431 343h1V347h-1zM432 343h1V346h-1zM433 343h1V346h-1zM434 343h1V346h-1zM435 343h1V347h-1zM436 343h1V347h-1zM437 343h1V346h-1zM438 343h1V347h-1zM439 343h1V346h-1zM440 343h1V346h-1zM441 343h1V346h-1zM442 343h1V347h-1zM443 343h1V347h-1zM444 343h1V347h-1zM445 343h1V347h-1zM446 343h1V346h-1zM447 343h1V346h-1zM448 343h1V347h-1zM449 343h1V347h-1zM450 343h1V346h-1zM451 343h1V347h-1zM452 343h1V346h-1zM453 343h1V346h-1zM454 343h1V346h-1zM455 343h1V346h-1zM456 343h1V347h-1zM457 343h1V346h-1zM458 343h1V347h-1zM459 343h1V346h-1zM460 343h1V347h-1zM461 343h1V347h-1zM462 343h1V348h-1zM463 343h1V346h-1zM464 343h1V346h-1zM465 343h1V347h-1zM466 343h1V347h-1zM467 343h1V347h-1zM468 343h1V347h-1zM469 343h1V346h-1zM470 343h1V346h-1zM471 343h1V347h-1zM472 343h1V347h-1zM473 343h1V347h-1zM474 343h1V347h-1zM475 343h1V347h-1zM476 343h1V347h-1zM477 343h1V347h-1zM478 343h1V347h-1zM479 343h1V347h-1zM480 343h1V347h-1zM481 343h1V347h-1zM482 343h1V347h-1zM483 343h1V347h-1zM484 343h1V347h-1zM485 343h1V347h-1zM486 343h1V347h-1zM487 343h1V347h-1zM488 343h1V346h-1zM489 343h1V346h-1zM490 343h1V347h-1zM491 343h1V347h-1zM492 343h1V347h-1zM493 343h1V347h-1zM494 343h1V347h-1zM495 343h1V347h-1zM496 343h1V347h-1zM497 343h1V347h-1zM498 342h1V346h-1zM499 343h1V347h-1zM500 343h1V347h-1zM501 343h1V348h-1zM502 343h1V347h-1zM503 343h1V348h-1zM504 343h1V347h-1zM505 343h1V346h-1zM506 343h1V346h-1zM507 343h1V346h-1zM508 343h1V347h-1zM509 342h1V347h-1zM510 343h1V346h-1zM511 343h1V347h-1zM512 342h1V347h-1zM513 343h1V347h-1zM514 343h1V346h-1zM515 342h1V347h-1zM516 343h1V346h-1zM517 343h1V347h-1zM518 343h1V346h-1zM519 343h1V346h-1zM520 343h1V347h-1zM521 343h1V347h-1zM522 343h1V346h-1zM523 343h1V347h-1zM524 343h1V346h-1zM525 343h1V347h-1zM526 343h1V347h-1zM527 343h1V347h-1zM528 343h1V347h-1zM529 343h1V346h-1zM530 343h1V348h-1zM531 343h1V347h-1zM532 343h1V347h-1zM533 343h1V346h-1zM534 343h1V347h-1zM535 343h1V347h-1zM536 343h1V346h-1zM537 342h1V346h-1zM538 343h1V346h-1zM539 343h1V346h-1zM540 343h1V347h-1zM541 343h1V347h-1zM542 343h1V346h-1zM543 343h1V346h-1zM544 343h1V346h-1zM545 343h1V346h-1zM546 343h1V346h-1zM547 343h1V348h-1zM548 343h1V347h-1zM549 343h1V347h-1zM550 343h1V347h-1zM551 343h1V347h-1zM552 343h1V346h-1zM553 343h1V347h-1zM554 343h1V347h-1zM555 343h1V346h-1zM556 343h1V346h-1zM557 343h1V347h-1zM558 343h1V346h-1zM559 343h1V347h-1zM560 343h1V346h-1zM561 343h1V347h-1zM562 343h1V346h-1zM563 343h1V347h-1zM564 343h1V346h-1zM565 342h1V346h-1zM566 343h1V347h-1zM567 343h1V346h-1zM568 343h1V346h-1zM569 343h1V346h-1zM570 343h1V346h-1zM571 343h1V347h-1zM572 343h1V346h-1zM573 343h1V346h-1zM574 343h1V347h-1zM575 343h1V346h-1zM576 343h1V347h-1zM577 343h1V347h-1zM578 343h1V347h-1zM579 343h1V347h-1zM580 343h1V346h-1zM581 343h1V347h-1zM582 343h1V347h-1zM583 343h1V346h-1zM584 343h1V346h-1zM585 343h1V347h-1zM586 343h1V346h-1zM587 343h1V347h-1zM588 343h1V346h-1zM589 343h1V346h-1zM590 343h1V346h-1zM591 343h1V346h-1zM592 343h1V346h-1zM593 343h1V346h-1zM594 343h1V347h-1zM595 343h1V346h-1zM596 343h1V347h-1zM597 343h1V347h-1zM598 343h1V346h-1zM599 343h1V347h-1zM600 343h1V347h-1zM601 343h1V347h-1zM602 343h1V346h-1zM603 343h1V347h-1zM604 343h1V347h-1zM605 343h1V347h-1zM606 343h1V346h-1zM607 343h1V346h-1zM608 343h1V347h-1zM609 343h1V347h-1zM610 343h1V347h-1zM611 343h1V346h-1zM612 343h1V347h-1zM613 343h1V346h-1zM614 343h1V347h-1zM615 343h1V347h-1zM616 343h1V346h-1zM617 343h1V346h-1zM618 343h1V346h-1zM619 343h1V347h-1zM620 343h1V346h-1zM621 343h1V347h-1zM622 343h1V347h-1zM623 341h1V347h-1zM624 343h1V346h-1zM625 343h1V346h-1zM626 343h1V346h-1zM627 343h1V347h-1zM628 343h1V346h-1zM629 343h1V346h-1zM630 343h1V347h-1zM631 343h1V347h-1zM632 343h1V346h-1zM633 343h1V347h-1zM634 343h1V347h-1zM635 343h1V347h-1zM636 343h1V347h-1zM637 343h1V346h-1zM638 343h1V347h-1zM639 343h1V348h-1zM640 343h1V346h-1zM641 343h1V346h-1zM642 343h1V347h-1zM643 343h1V347h-1zM644 343h1V346h-1zM645 343h1V347h-1zM646 343h1V347h-1zM647 343h1V346h-1zM648 343h1V347h-1zM649 343h1V347h-1zM650 343h1V347h-1zM651 343h1V346h-1zM652 343h1V346h-1zM653 343h1V347h-1zM654 343h1V347h-1zM655 343h1V346h-1zM656 343h1V347h-1zM657 343h1V347h-1zM658 343h1V347h-1zM659 343h1V346h-1zM660 343h1V347h-1zM661 343h1V347h-1zM662 342h1V346h-1zM663 343h1V347h-1zM664 343h1V347h-1zM665 343h1V347h-1zM666 343h1V346h-1zM667 343h1V346h-1zM668 343h1V347h-1zM669 343h1V347h-1zM670 343h1V346h-1zM671 343h1V347h-1zM672 343h1V347h-1zM673 343h1V346h-1zM674 343h1V347h-1zM675 343h1V346h-1zM676 343h1V346h-1zM677 343h1V347h-1zM678 343h1V348h-1zM679 343h1V347h-1zM680 343h1V347h-1zM681 343h1V347h-1zM682 343h1V346h-1zM683 343h1V347h-1zM684 343h1V347h-1zM685 343h1V346h-1zM686 343h1V347h-1zM687 343h1V347h-1zM688 343h1V347h-1zM689 343h1V347h-1zM690 343h1V347h-1zM691 343h1V346h-1zM692 343h1V347h-1zM693 343h1V346h-1zM694 342h1V347h-1zM695 343h1V347h-1zM696 343h1V347h-1zM697 343h1V346h-1zM698 343h1V347h-1zM699 343h1V348h-1zM700 342h1V347h-1zM701 343h1V346h-1zM702 343h1V347h-1zM703 343h1V347h-1zM704 343h1V347h-1zM705 343h1V346h-1zM706 343h1V347h-1zM707 343h1V346h-1zM708 343h1V347h-1zM709 342h1V346h-1zM710 343h1V347h-1zM711 343h1V347h-1zM712 343h1V348h-1zM713 343h1V346h-1zM714 343h1V346h-1zM715 343h1V347h-1zM716 342h1V347h-1zM717 343h1V347h-1zM718 343h1V347h-1zM719 343h1V347h-1zM720 343h1V346h-1zM721 343h1V347h-1zM722 343h1V347h-1zM723 343h1V347h-1zM724 343h1V347h-1zM725 343h1V347h-1zM726 343h1V347h-1zM727 343h1V348h-1zM728 343h1V347h-1zM729 343h1V346h-1zM730 343h1V346h-1zM731 343h1V347h-1zM732 343h1V347h-1zM733 343h1V346h-1zM734 343h1V347h-1zM735 343h1V347h-1zM736 343h1V347h-1zM737 343h1V346h-1zM738 343h1V347h-1zM739 343h1V347h-1zM740 343h1V346h-1zM741 343h1V347h-1zM742 343h1V347h-1zM743 343h1V346h-1zM744 343h1V347h-1zM745 343h1V347h-1zM746 343h1V346h-1zM747 343h1V346h-1zM748 343h1V347h-1zM749 343h1V347h-1zM750 343h1V347h-1zM751 343h1V346h-1zM752 343h1V346h-1zM753 343h1V347h-1zM754 343h1V347h-1zM755 343h1V347h-1zM756 342h1V347h-1zM757 340h1V350h-1zM758 334h1V355h-1zM759 338h1V351h-1zM760 340h1V349h-1zM761 341h1V348h-1zM762 342h1V348h-1zM763 343h1V347h-1zM764 343h1V347h-1zM765 343h1V346h-1zM766 343h1V347h-1zM767 343h1V346h-1zM768 343h1V347h-1zM769 343h1V347h-1zM770 343h1V347h-1zM771 343h1V347h-1zM772 343h1V347h-1zM773 343h1V347h-1zM774 343h1V347h-1zM775 343h1V347h-1zM776 343h1V347h-1zM777 343h1V347h-1zM778 343h1V346h-1zM779 343h1V347h-1zM780 343h1V346h-1zM781 343h1V347h-1zM782 343h1V346h-1zM783 343h1V347h-1zM784 343h1V347h-1zM785 343h1V347h-1zM786 343h1V348h-1zM787 343h1V347h-1zM788 343h1V347h-1zM789 343h1V347h-1zM790 343h1V347h-1zM791 343h1V346h-1zM792 343h1V346h-1zM793 343h1V346h-1zM794 343h1V346h-1zM795 343h1V347h-1zM796 343h1V347h-1zM797 343h1V346h-1zM798 343h1V346h-1zM799 343h1V347h-1zM800 343h1V346h-1zM801 337h1V346h-1zM802 332h1V340h-1zM803 329h1V335h-1zM804 326h1V332h-1zM805 324h1V330h-1zM806 322h1V328h-1zM807 322h1V327h-1zM808 322h1V327h-1zM809 321h1V326h-1zM810 321h1V326h-1zM811 465h1V482h-1zM812 467h1V479h-1zM813 468h1V478h-1zM814 469h1V477h-1zM815 470h1V477h-1zM816 471h1V476h-1zM817 471h1V475h-1zM818 471h1V476h-1zM819 471h1V476h-1zM820 471h1V475h-1zM821 471h1V477h-1zM822 471h1V475h-1zM823 471h1V475h-1zM824 472h1V476h-1zM825 471h1V475h-1zM826 472h1V475h-1zM827 472h1V475h-1zM828 471h1V475h-1zM829 471h1V475h-1zM830 472h1V475h-1zM831 472h1V475h-1zM832 471h1V475h-1zM833 471h1V475h-1zM834 472h1V475h-1zM835 472h1V475h-1zM836 472h1V475h-1zM837 471h1V475h-1zM838 472h1V475h-1zM839 472h1V475h-1zM840 472h1V475h-1zM841 471h1V475h-1zM842 472h1V475h-1zM843 471h1V475h-1zM844 471h1V475h-1zM845 471h1V475h-1zM846 472h1V475h-1zM847 471h1V475h-1zM848 472h1V475h-1zM849 471h1V475h-1zM850 472h1V475h-1zM851 472h1V475h-1zM852 471h1V475h-1zM853 471h1V475h-1zM854 471h1V475h-1zM855 471h1V475h-1zM856 472h1V475h-1zM857 471h1V475h-1zM858 472h1V475h-1zM859 472h1V475h-1zM860 470h1V475h-1zM861 471h1V475h-1zM862 472h1V475h-1zM863 471h1V475h-1zM864 471h1V475h-1zM865 472h1V475h-1zM866 471h1V475h-1zM867 471h1V475h-1zM868 472h1V475h-1zM869 471h1V475h-1zM870 471h1V475h-1zM871 471h1V475h-1zM872 471h1V475h-1zM873 471h1V475h-1zM874 471h1V476h-1zM875 471h1V475h-1zM876 471h1V475h-1zM877 471h1V475h-1zM878 471h1V475h-1zM879 472h1V475h-1zM880 471h1V475h-1zM881 472h1V475h-1zM882 471h1V475h-1zM883 472h1V475h-1zM884 470h1V475h-1zM885 470h1V475h-1zM886 471h1V475h-1zM887 472h1V476h-1zM888 471h1V475h-1zM889 471h1V475h-1zM890 471h1V475h-1zM891 472h1V475h-1zM892 471h1V475h-1zM893 472h1V475h-1zM894 471h1V475h-1zM895 471h1V475h-1zM896 472h1V475h-1zM897 471h1V475h-1zM898 472h1V475h-1zM899 471h1V475h-1zM900 471h1V475h-1zM901 471h1V475h-1zM902 472h1V475h-1zM903 471h1V475h-1zM904 471h1V475h-1zM905 471h1V475h-1zM906 471h1V475h-1zM907 471h1V475h-1zM908 471h1V475h-1zM909 472h1V475h-1zM910 472h1V475h-1zM911 472h1V475h-1zM912 472h1V475h-1zM913 471h1V475h-1zM914 471h1V475h-1zM915 471h1V475h-1zM916 472h1V475h-1zM917 471h1V475h-1zM918 472h1V475h-1zM919 472h1V475h-1zM920 472h1V475h-1zM921 471h1V475h-1zM922 471h1V475h-1zM923 471h1V475h-1zM924 471h1V475h-1zM925 472h1V475h-1zM926 471h1V475h-1zM927 472h1V475h-1zM928 472h1V475h-1zM929 470h1V475h-1zM930 471h1V475h-1zM931 471h1V475h-1zM932 471h1V475h-1zM933 471h1V475h-1zM934 472h1V475h-1zM935 471h1V476h-1zM936 471h1V475h-1zM937 472h1V475h-1zM938 471h1V475h-1zM939 471h1V475h-1zM940 471h1V475h-1zM941 471h1V475h-1zM942 471h1V475h-1zM943 471h1V475h-1zM944 471h1V475h-1zM945 472h1V476h-1zM946 472h1V475h-1zM947 471h1V475h-1zM948 471h1V475h-1zM949 472h1V475h-1zM950 471h1V475h-1zM951 470h1V475h-1zM952 471h1V475h-1zM953 472h1V475h-1zM954 472h1V475h-1zM955 471h1V475h-1zM956 471h1V475h-1zM957 471h1V475h-1zM958 471h1V475h-1zM959 471h1V475h-1zM960 471h1V475h-1zM961 471h1V475h-1zM962 471h1V475h-1zM963 471h1V475h-1zM964 471h1V475h-1zM965 471h1V475h-1zM966 472h1V475h-1zM967 472h1V475h-1zM968 471h1V475h-1zM969 471h1V475h-1zM970 472h1V475h-1zM971 471h1V475h-1zM972 471h1V475h-1zM973 471h1V475h-1zM974 471h1V475h-1zM975 471h1V475h-1zM976 472h1V475h-1zM977 471h1V476h-1zM978 471h1V475h-1zM979 471h1V475h-1zM980 472h1V475h-1zM981 472h1V475h-1zM982 471h1V475h-1zM983 472h1V475h-1zM984 472h1V475h-1zM985 471h1V475h-1zM986 471h1V475h-1zM987 471h1V475h-1zM988 472h1V475h-1zM989 471h1V475h-1zM990 471h1V475h-1zM991 471h1V476h-1zM992 471h1V475h-1zM993 470h1V475h-1zM994 472h1V475h-1zM995 471h1V475h-1zM996 471h1V475h-1zM997 472h1V475h-1zM998 472h1V475h-1zM999 471h1V475h-1zM1000 471h1V475h-1zM1001 471h1V475h-1zM1002 471h1V475h-1zM1003 471h1V476h-1zM1004 472h1V475h-1zM1005 472h1V475h-1zM1006 471h1V475h-1zM1007 471h1V475h-1zM1008 471h1V475h-1zM1009 471h1V475h-1zM1010 471h1V475h-1zM1011 471h1V475h-1zM1012 471h1V475h-1zM1013 471h1V475h-1zM1014 472h1V475h-1zM1015 471h1V475h-1zM1016 471h1V476h-1zM1017 471h1V475h-1zM1018 470h1V475h-1zM1019 472h1V475h-1zM1020 471h1V475h-1zM1021 472h1V475h-1zM1022 471h1V475h-1zM1023 471h1V475h-1zM1024 471h1V475h-1zM1025 471h1V475h-1zM1026 471h1V475h-1zM1027 471h1V475h-1zM1028 472h1V475h-1zM1029 471h1V475h-1zM1030 471h1V475h-1zM1031 471h1V475h-1zM1032 471h1V475h-1zM1033 470h1V475h-1zM1034 472h1V475h-1zM1035 471h1V475h-1zM1036 472h1V475h-1zM1037 472h1V475h-1zM1038 471h1V475h-1zM1039 472h1V476h-1zM1040 471h1V475h-1zM1041 471h1V475h-1zM1042 472h1V475h-1zM1043 471h1V475h-1zM1044 471h1V475h-1zM1045 471h1V475h-1zM1046 472h1V475h-1zM1047 471h1V475h-1zM1048 472h1V475h-1zM1049 472h1V475h-1zM1050 471h1V476h-1zM1051 472h1V475h-1zM1052 471h1V475h-1zM1053 471h1V475h-1zM1054 471h1V475h-1zM1055 471h1V475h-1zM1056 472h1V476h-1zM1057 472h1V475h-1zM1058 471h1V475h-1zM1059 471h1V475h-1zM1060 472h1V475h-1zM1061 471h1V475h-1zM1062 471h1V475h-1zM1063 471h1V475h-1zM1064 471h1V475h-1zM1065 472h1V475h-1zM1066 471h1V475h-1zM1067 471h1V476h-1zM1068 472h1V475h-1zM1069 471h1V475h-1zM1070 472h1V475h-1zM1071 472h1V475h-1zM1072 471h1V476h-1zM1073 471h1V475h-1zM1074 472h1V475h-1zM1075 472h1V475h-1zM1076 472h1V475h-1zM1077 471h1V475h-1zM1078 471h1V475h-1zM1079 471h1V475h-1zM1080 472h1V475h-1zM1081 471h1V475h-1zM1082 471h1V475h-1zM1083 472h1V475h-1zM1084 471h1V475h-1zM1085 472h1V475h-1zM1086 471h1V475h-1zM1087 471h1V475h-1zM1088 471h1V475h-1zM1089 471h1V475h-1zM1090 472h1V475h-1zM1091 472h1V475h-1zM1092 472h1V475h-1zM1093 471h1V475h-1zM1094 471h1V476h-1zM1095 471h1V475h-1zM1096 471h1V475h-1zM1097 471h1V475h-1zM1098 471h1V475h-1zM1099 471h1V475h-1zM1100 472h1V475h-1zM1101 472h1V475h-1zM1102 471h1V475h-1zM1103 471h1V475h-1zM1104 471h1V475h-1zM1105 471h1V475h-1zM1106 472h1V475h-1zM1107 472h1V475h-1zM1108 472h1V475h-1zM1109 472h1V475h-1zM1110 472h1V475h-1zM1111 471h1V475h-1zM1112 472h1V475h-1zM1113 471h1V475h-1zM1114 472h1V475h-1zM1115 472h1V475h-1zM1116 472h1V475h-1zM1117 471h1V475h-1zM1118 471h1V476h-1zM1119 471h1V475h-1zM1120 472h1V475h-1zM1121 471h1V475h-1zM1122 471h1V475h-1zM1123 471h1V475h-1zM1124 472h1V475h-1zM1125 472h1V475h-1zM1126 472h1V475h-1zM1127 471h1V475h-1zM1128 472h1V475h-1zM1129 472h1V475h-1zM1130 471h1V475h-1zM1131 472h1V475h-1zM1132 471h1V475h-1zM1133 471h1V475h-1zM1134 472h1V476h-1zM1135 471h1V475h-1zM1136 471h1V475h-1zM1137 472h1V475h-1zM1138 471h1V475h-1zM1139 471h1V475h-1zM1140 471h1V475h-1zM1141 471h1V475h-1zM1142 471h1V475h-1zM1143 471h1V475h-1zM1144 472h1V475h-1zM1145 471h1V475h-1zM1146 472h1V475h-1zM1147 471h1V475h-1zM1148 471h1V475h-1zM1149 472h1V475h-1zM1150 471h1V475h-1zM1151 472h1V475h-1zM1152 471h1V475h-1zM1153 471h1V475h-1zM1154 472h1V475h-1zM1155 471h1V475h-1zM1156 471h1V475h-1zM1157 472h1V475h-1zM1158 472h1V475h-1zM1159 472h1V475h-1zM1160 472h1V475h-1zM1161 471h1V475h-1zM1162 471h1V475h-1zM1163 471h1V476h-1zM1164 471h1V475h-1zM1165 471h1V475h-1zM1166 471h1V475h-1zM1167 471h1V475h-1zM1168 471h1V475h-1zM1169 472h1V475h-1zM1170 471h1V475h-1zM1171 470h1V475h-1zM1172 471h1V475h-1zM1173 472h1V475h-1zM1174 472h1V475h-1zM1175 471h1V475h-1zM1176 471h1V475h-1zM1177 471h1V475h-1zM1178 471h1V475h-1zM1179 471h1V475h-1zM1180 470h1V476h-1zM1181 468h1V478h-1zM1182 462h1V485h-1zM1183 466h1V481h-1zM1184 468h1V478h-1zM1185 470h1V477h-1zM1186 470h1V476h-1zM1187 471h1V476h-1zM1188 471h1V475h-1zM1189 471h1V475h-1zM1190 472h1V475h-1zM1191 472h1V475h-1zM1192 470h1V475h-1zM1193 471h1V475h-1zM1194 472h1V475h-1zM1195 472h1V475h-1zM1196 471h1V475h-1zM1197 472h1V475h-1zM1198 471h1V475h-1zM1199 471h1V477h-1zM1200 472h1V475h-1zM1201 472h1V475h-1zM1202 471h1V476h-1zM1203 471h1V475h-1zM1204 472h1V475h-1zM1205 471h1V475h-1zM1206 472h1V475h-1zM1207 472h1V475h-1zM1208 471h1V475h-1zM1209 472h1V475h-1zM1210 471h1V475h-1zM1211 472h1V475h-1zM1212 471h1V475h-1zM1213 472h1V475h-1zM1214 471h1V475h-1zM1215 472h1V475h-1zM1216 471h1V475h-1zM1217 471h1V475h-1zM1218 471h1V475h-1zM1219 471h1V475h-1zM1220 472h1V475h-1zM1221 471h1V475h-1zM1222 472h1V475h-1zM1223 472h1V475h-1zM1224 472h1V475h-1zM1225 472h1V475h-1zM1226 472h1V479h-1zM1227 477h1V483h-1zM1228 480h1V486h-1zM1229 483h1V489h-1zM1230 486h1V491h-1zM1231 488h1V493h-1zM1232 489h1V494h-1zM1233 491h1V496h-1zM1234 492h1V496h-1zM1235 493h1V497h-1zM1236 328h1V361h-1zM1237 332h1V358h-1zM1238 334h1V356h-1zM1239 336h1V353h-1zM1240 337h1V352h-1zM1241 339h1V351h-1zM1242 340h1V350h-1zM1243 341h1V349h-1zM1244 341h1V348h-1zM1245 341h1V348h-1zM1246 342h1V348h-1zM1247 342h1V347h-1zM1248 342h1V347h-1zM1249 342h1V347h-1zM1250 343h1V347h-1zM1251 343h1V347h-1zM1252 342h1V347h-1zM1253 343h1V346h-1zM1254 342h1V347h-1zM1255 343h1V347h-1zM1256 343h1V347h-1zM1257 343h1V347h-1zM1258 343h1V346h-1zM1259 341h1V347h-1zM1260 343h1V346h-1zM1261 343h1V347h-1zM1262 343h1V346h-1zM1263 343h1V347h-1zM1264 343h1V347h-1zM1265 343h1V347h-1zM1266 343h1V347h-1zM1267 343h1V347h-1zM1268 343h1V346h-1zM1269 343h1V348h-1zM1270 342h1V347h-1zM1271 343h1V346h-1zM1272 343h1V346h-1zM1273 343h1V346h-1zM1274 343h1V346h-1zM1275 343h1V347h-1zM1276 343h1V347h-1zM1277 343h1V347h-1zM1278 343h1V347h-1zM1279 343h1V346h-1zM1280 343h1V346h-1zM1281 343h1V346h-1zM1282 343h1V347h-1zM1283 342h1V347h-1zM1284 343h1V346h-1zM1285 342h1V346h-1zM1286 343h1V347h-1zM1287 343h1V347h-1zM1288 343h1V347h-1zM1289 343h1V347h-1zM1290 343h1V347h-1zM1291 343h1V347h-1zM1292 343h1V347h-1zM1293 343h1V347h-1zM1294 343h1V346h-1zM1295 343h1V346h-1zM1296 343h1V347h-1zM1297 343h1V347h-1zM1298 343h1V347h-1zM1299 343h1V347h-1zM1300 343h1V348h-1zM1301 343h1V347h-1zM1302 343h1V346h-1zM1303 343h1V347h-1zM1304 343h1V346h-1zM1305 343h1V346h-1zM1306 343h1V347h-1zM1307 343h1V347h-1zM1308 343h1V346h-1zM1309 343h1V346h-1zM1310 343h1V347h-1zM1311 343h1V346h-1zM1312 343h1V346h-1zM1313 343h1V347h-1zM1314 343h1V346h-1zM1315 343h1V346h-1zM1316 343h1V347h-1zM1317 343h1V347h-1zM1318 343h1V348h-1zM1319 343h1V347h-1zM1320 343h1V347h-1zM1321 343h1V346h-1zM1322 343h1V347h-1zM1323 343h1V346h-1zM1324 343h1V346h-1zM1325 343h1V347h-1zM1326 343h1V347h-1zM1327 343h1V347h-1zM1328 343h1V346h-1zM1329 343h1V347h-1zM1330 343h1V346h-1zM1331 342h1V347h-1zM1332 343h1V347h-1zM1333 343h1V347h-1zM1334 343h1V347h-1zM1335 343h1V347h-1zM1336 343h1V347h-1zM1337 343h1V347h-1zM1338 343h1V347h-1zM1339 343h1V347h-1zM1340 343h1V347h-1zM1341 343h1V347h-1zM1342 343h1V346h-1zM1343 343h1V347h-1zM1344 343h1V346h-1zM1345 343h1V347h-1zM1346 343h1V346h-1zM1347 343h1V346h-1zM1348 343h1V347h-1zM1349 343h1V347h-1zM1350 343h1V347h-1zM1351 343h1V347h-1zM1352 343h1V346h-1zM1353 343h1V346h-1zM1354 343h1V346h-1zM1355 343h1V347h-1zM1356 343h1V347h-1zM1357 343h1V347h-1zM1358 343h1V346h-1zM1359 343h1V347h-1zM1360 343h1V347h-1zM1361 343h1V347h-1zM1362 343h1V346h-1zM1363 343h1V347h-1zM1364 343h1V346h-1zM1365 343h1V347h-1zM1366 343h1V347h-1zM1367 343h1V346h-1zM1368 343h1V347h-1zM1369 343h1V347h-1zM1370 343h1V346h-1zM1371 343h1V346h-1zM1372 343h1V346h-1zM1373 343h1V346h-1zM1374 343h1V347h-1zM1375 343h1V346h-1zM1376 343h1V347h-1zM1377 343h1V347h-1zM1378 343h1V346h-1zM1379 343h1V347h-1zM1380 343h1V347h-1zM1381 343h1V346h-1zM1382 343h1V347h-1zM1383 343h1V347h-1zM1384 343h1V347h-1zM1385 343h1V347h-1zM1386 343h1V346h-1zM1387 343h1V347h-1zM1388 343h1V347h-1zM1389 343h1V347h-1zM1390 343h1V346h-1zM1391 342h1V347h-1zM1392 343h1V346h-1zM1393 343h1V346h-1zM1394 342h1V347h-1zM1395 343h1V347h-1zM1396 343h1V347h-1zM1397 343h1V348h-1zM1398 343h1V347h-1zM1399 343h1V347h-1zM1400 343h1V347h-1zM1401 343h1V347h-1zM1402 343h1V346h-1zM1403 343h1V347h-1zM1404 343h1V347h-1zM1405 343h1V347h-1zM1406 343h1V347h-1zM1407 343h1V346h-1zM1408 342h1V347h-1zM1409 343h1V347h-1zM1410 343h1V347h-1zM1411 342h1V347h-1zM1412 343h1V347h-1zM1413 343h1V346h-1zM1414 343h1V347h-1zM1415 343h1V346h-1zM1416 343h1V347h-1zM1417 343h1V346h-1zM1418 343h1V346h-1zM1419 343h1V347h-1zM1420 343h1V346h-1zM1421 343h1V346h-1zM1422 343h1V346h-1zM1423 343h1V346h-1zM1424 343h1V347h-1zM1425 343h1V347h-1zM1426 343h1V346h-1zM1427 342h1V347h-1zM1428 342h1V347h-1zM1429 343h1V346h-1zM1430 343h1V347h-1zM1431 343h1V346h-1zM1432 343h1V347h-1zM1433 343h1V347h-1zM1434 343h1V347h-1zM1435 343h1V347h-1zM1436 343h1V348h-1zM1437 343h1V347h-1zM1438 343h1V346h-1zM1439 343h1V347h-1zM1440 343h1V347h-1zM1441 343h1V347h-1zM1442 343h1V347h-1zM1443 343h1V347h-1zM1444 343h1V347h-1zM1445 342h1V347h-1zM1446 343h1V347h-1zM1447 343h1V346h-1zM1448 343h1V346h-1zM1449 343h1V346h-1zM1450 343h1V347h-1zM1451 342h1V347h-1zM1452 343h1V347h-1zM1453 343h1V347h-1zM1454 343h1V347h-1zM1455 343h1V347h-1zM1456 343h1V348h-1zM1457 343h1V346h-1zM1458 343h1V347h-1zM1459 343h1V347h-1zM1460 343h1V347h-1zM1461 343h1V347h-1zM1462 343h1V347h-1zM1463 343h1V347h-1zM1464 343h1V346h-1zM1465 342h1V346h-1zM1466 343h1V347h-1zM1467 343h1V346h-1zM1468 343h1V347h-1zM1469 343h1V346h-1zM1470 343h1V347h-1zM1471 343h1V347h-1zM1472 343h1V346h-1zM1473 343h1V347h-1zM1474 343h1V346h-1zM1475 343h1V347h-1zM1476 343h1V346h-1zM1477 343h1V347h-1zM1478 343h1V346h-1zM1479 343h1V347h-1zM1480 343h1V347h-1zM1481 343h1V348h-1zM1482 343h1V346h-1zM1483 343h1V346h-1zM1484 343h1V347h-1zM1485 343h1V346h-1zM1486 343h1V346h-1zM1487 343h1V347h-1zM1488 343h1V347h-1zM1489 343h1V346h-1zM1490 343h1V346h-1zM1491 343h1V347h-1zM1492 343h1V347h-1zM1493 343h1V347h-1zM1494 343h1V347h-1zM1495 343h1V346h-1zM1496 343h1V347h-1zM1497 343h1V347h-1zM1498 343h1V346h-1zM1499 343h1V347h-1zM1500 343h1V346h-1zM1501 342h1V346h-1zM1502 343h1V346h-1zM1503 343h1V347h-1zM1504 343h1V347h-1zM1505 343h1V347h-1zM1506 343h1V346h-1zM1507 343h1V346h-1zM1508 343h1V347h-1zM1509 343h1V346h-1zM1510 343h1V346h-1zM1511 343h1V347h-1zM1512 343h1V346h-1zM1513 343h1V347h-1zM1514 343h1V346h-1zM1515 343h1V347h-1zM1516 343h1V347h-1zM1517 343h1V347h-1zM1518 343h1V347h-1zM1519 343h1V346h-1zM1520 343h1V347h-1zM1521 343h1V346h-1zM1522 343h1V347h-1zM1523 343h1V347h-1zM1524 343h1V347h-1zM1525 343h1V347h-1zM1526 343h1V347h-1zM1527 343h1V347h-1zM1528 343h1V347h-1zM1529 343h1V347h-1zM1530 343h1V346h-1zM1531 343h1V346h-1zM1532 343h1V347h-1zM1533 343h1V347h-1zM1534 343h1V346h-1zM1535 343h1V347h-1zM1536 343h1V347h-1zM1537 343h1V346h-1zM1538 343h1V347h-1zM1539 343h1V348h-1zM1540 343h1V347h-1zM1541 343h1V347h-1zM1542 343h1V347h-1zM1543 343h1V347h-1zM1544 343h1V347h-1zM1545 343h1V347h-1zM1546 343h1V347h-1zM1547 343h1V347h-1zM1548 343h1V347h-1zM1549 343h1V346h-1zM1550 343h1V347h-1zM1551 343h1V347h-1zM1552 343h1V347h-1zM1553 343h1V347h-1zM1554 343h1V346h-1zM1555 343h1V347h-1zM1556 343h1V346h-1zM1557 343h1V347h-1zM1558 343h1V346h-1zM1559 343h1V347h-1zM1560 343h1V347h-1zM1561 343h1V347h-1zM1562 343h1V346h-1zM1563 343h1V346h-1zM1564 343h1V347h-1zM1565 343h1V347h-1zM1566 343h1V346h-1zM1567 343h1V347h-1zM1568 343h1V347h-1zM1569 343h1V347h-1zM1570 343h1V347h-1zM1571 343h1V347h-1zM1572 343h1V347h-1zM1573 343h1V346h-1zM1574 343h1V347h-1zM1575 343h1V347h-1zM1576 343h1V347h-1zM1577 343h1V347h-1zM1578 342h1V346h-1zM1579 343h1V347h-1zM1580 343h1V347h-1zM1581 343h1V346h-1zM1582 343h1V346h-1zM1583 343h1V346h-1zM1584 343h1V347h-1zM1585 342h1V347h-1zM1586 342h1V346h-1zM1587 343h1V346h-1zM1588 343h1V347h-1zM1589 343h1V347h-1zM1590 343h1V347h-1zM1591 343h1V346h-1zM1592 343h1V347h-1zM1593 343h1V346h-1zM1594 343h1V346h-1zM1595 343h1V346h-1zM1596 343h1V347h-1zM1597 343h1V347h-1zM1598 343h1V347h-1zM1599 343h1V347h-1zM1600 343h1V346h-1zM1601 343h1V347h-1zM1602 343h1V346h-1zM1603 343h1V346h-1zM1604 343h1V346h-1zM1605 343h1V347h-1zM1606 342h1V347h-1zM1607 340h1V350h-1zM1608 334h1V355h-1zM1609 338h1V352h-1zM1610 339h1V349h-1zM1611 342h1V348h-1zM1612 342h1V347h-1zM1613 343h1V348h-1zM1614 343h1V347h-1zM1615 343h1V346h-1zM1616 343h1V347h-1zM1617 343h1V346h-1zM1618 343h1V347h-1zM1619 343h1V346h-1zM1620 343h1V346h-1zM1621 343h1V347h-1zM1622 343h1V346h-1zM1623 343h1V347h-1zM1624 343h1V347h-1zM1625 343h1V346h-1zM1626 342h1V347h-1zM1627 343h1V347h-1zM1628 343h1V346h-1zM1629 343h1V347h-1zM1630 343h1V347h-1zM1631 343h1V347h-1zM1632 343h1V346h-1zM1633 343h1V347h-1zM1634 343h1V347h-1zM1635 343h1V347h-1zM1636 343h1V347h-1zM1637 343h1V347h-1zM1638 343h1V347h-1zM1639 343h1V347h-1zM1640 343h1V347h-1zM1641 343h1V346h-1zM1642 343h1V347h-1zM1643 343h1V346h-1zM1644 343h1V346h-1zM1645 342h1V346h-1zM1646 343h1V346h-1zM1647 343h1V346h-1zM1648 343h1V346h-1zM1649 343h1V346h-1zM1650 343h1V347h-1zM1651 337h1V346h-1zM1652 332h1V339h-1zM1653 328h1V335h-1zM1654 326h1V332h-1zM1655 324h1V330h-1zM1656 323h1V328h-1zM1657 322h1V328h-1zM1658 320h1V326h-1zM1659 321h1V326h-1zM1660 319h1V325h-1zM1661 465h1V482h-1zM1662 466h1V479h-1zM1663 469h1V478h-1zM1664 470h1V477h-1zM1665 470h1V476h-1zM1666 470h1V476h-1zM1667 471h1V476h-1zM1668 471h1V476h-1zM1669 470h1V475h-1zM1670 471h1V475h-1zM1671 471h1V475h-1zM1672 471h1V475h-1zM1673 471h1V475h-1zM1674 471h1V475h-1zM1675 472h1V475h-1zM1676 471h1V475h-1zM1677 472h1V475h-1zM1678 471h1V475h-1zM1679 471h1V475h-1zM1680 471h1V475h-1zM1681 472h1V475h-1zM1682 471h1V475h-1zM1683 471h1V475h-1zM1684 470h1V475h-1zM1685 471h1V476h-1zM1686 471h1V475h-1zM1687 471h1V475h-1zM1688 471h1V475h-1zM1689 472h1V475h-1zM1690 471h1V475h-1zM1691 471h1V475h-1zM1692 471h1V475h-1zM1693 471h1V475h-1zM1694 471h1V475h-1zM1695 471h1V475h-1zM1696 472h1V475h-1zM1697 471h1V475h-1zM1698 471h1V475h-1zM1699 472h1V475h-1zM1700 471h1V475h-1zM1701 471h1V475h-1zM1702 471h1V475h-1zM1703 472h1V475h-1zM1704 472h1V476h-1zM1705 472h1V475h-1zM1706 471h1V475h-1zM1707 471h1V475h-1zM1708 471h1V475h-1zM1709 471h1V475h-1zM1710 472h1V475h-1z" fill="#25c3cf"/>
<path d="M370 577h1V630h-1zM808 577h1V630h-1zM1220 577h1V630h-1zM1658 577h1V630h-1z" fill="#8a1830"/>
<path d="M13 576h1V579h-1zM14 576h1V579h-1zM15 576h1V579h-1zM16 576h1V579h-1zM17 576h1V579h-1zM18 576h1V579h-1zM19 576h1V579h-1zM20 576h1V579h-1zM21 576h1V579h-1zM22 576h1V579h-1zM23 576h1V579h-1zM24 576h1V579h-1zM25 576h1V579h-1zM26 576h1V579h-1zM27 576h1V579h-1zM28 576h1V579h-1zM29 576h1V579h-1zM30 576h1V579h-1zM31 576h1V579h-1zM32 575h1V579h-1zM33 576h1V579h-1zM34 576h1V579h-1zM35 576h1V579h-1zM36 576h1V579h-1zM37 576h1V579h-1zM38 576h1V579h-1zM39 576h1V579h-1zM40 575h1V579h-1zM41 576h1V579h-1zM42 576h1V579h-1zM43 576h1V579h-1zM44 576h1V579h-1zM45 576h1V579h-1zM46 576h1V579h-1zM47 576h1V579h-1zM48 576h1V579h-1zM49 576h1V579h-1zM50 576h1V579h-1zM51 576h1V579h-1zM52 576h1V579h-1zM53 576h1V579h-1zM54 576h1V580h-1zM55 576h1V579h-1zM56 576h1V579h-1zM57 576h1V579h-1zM58 576h1V579h-1zM59 576h1V579h-1zM60 576h1V579h-1zM61 576h1V579h-1zM62 576h1V579h-1zM63 576h1V579h-1zM64 575h1V579h-1zM65 576h1V579h-1zM66 576h1V579h-1zM67 576h1V579h-1zM68 576h1V579h-1zM69 576h1V579h-1zM70 576h1V579h-1zM71 575h1V579h-1zM72 576h1V579h-1zM73 576h1V579h-1zM74 576h1V579h-1zM75 576h1V579h-1zM76 576h1V579h-1zM77 576h1V579h-1zM78 576h1V579h-1zM79 576h1V579h-1zM80 576h1V579h-1zM81 576h1V579h-1zM82 575h1V579h-1zM83 576h1V579h-1zM84 576h1V579h-1zM85 576h1V579h-1zM86 576h1V579h-1zM87 576h1V579h-1zM88 576h1V579h-1zM89 576h1V579h-1zM90 576h1V579h-1zM91 576h1V579h-1zM92 576h1V579h-1zM93 576h1V579h-1zM94 576h1V579h-1zM95 575h1V579h-1zM96 576h1V579h-1zM97 576h1V579h-1zM98 576h1V579h-1zM99 576h1V579h-1zM100 576h1V579h-1zM101 576h1V579h-1zM102 576h1V579h-1zM103 576h1V579h-1zM104 576h1V579h-1zM105 576h1V579h-1zM106 576h1V579h-1zM107 576h1V579h-1zM108 576h1V579h-1zM109 576h1V579h-1zM110 576h1V580h-1zM111 576h1V579h-1zM112 576h1V579h-1zM113 576h1V579h-1zM114 576h1V579h-1zM115 576h1V579h-1zM116 576h1V579h-1zM117 576h1V579h-1zM118 576h1V579h-1zM119 576h1V579h-1zM120 576h1V579h-1zM121 576h1V579h-1zM122 576h1V579h-1zM123 576h1V579h-1zM124 576h1V579h-1zM125 576h1V579h-1zM126 576h1V579h-1zM127 576h1V579h-1zM128 576h1V579h-1zM129 576h1V579h-1zM130 576h1V579h-1zM131 576h1V579h-1zM132 576h1V579h-1zM133 576h1V579h-1zM134 576h1V579h-1zM135 576h1V579h-1zM136 576h1V579h-1zM137 576h1V579h-1zM138 576h1V579h-1zM139 576h1V579h-1zM140 576h1V579h-1zM141 576h1V579h-1zM142 576h1V579h-1zM143 576h1V579h-1zM144 576h1V579h-1zM145 576h1V579h-1zM146 576h1V579h-1zM147 576h1V579h-1zM148 576h1V579h-1zM149 576h1V579h-1zM150 576h1V579h-1zM151 576h1V579h-1zM152 576h1V579h-1zM153 576h1V579h-1zM154 576h1V580h-1zM155 576h1V579h-1zM156 576h1V579h-1zM157 576h1V579h-1zM158 576h1V579h-1zM159 576h1V579h-1zM160 576h1V579h-1zM161 576h1V579h-1zM162 575h1V579h-1zM163 575h1V579h-1zM164 576h1V579h-1zM165 576h1V579h-1zM166 576h1V579h-1zM167 576h1V579h-1zM168 576h1V579h-1zM169 576h1V579h-1zM170 576h1V579h-1zM171 576h1V579h-1zM172 576h1V579h-1zM173 576h1V579h-1zM174 576h1V579h-1zM175 576h1V579h-1zM176 576h1V580h-1zM177 576h1V579h-1zM178 576h1V579h-1zM179 576h1V579h-1zM180 576h1V579h-1zM181 576h1V579h-1zM182 575h1V579h-1zM183 576h1V579h-1zM184 576h1V579h-1zM185 576h1V579h-1zM186 576h1V579h-1zM187 576h1V579h-1zM188 576h1V579h-1zM189 576h1V579h-1zM190 576h1V579h-1zM191 576h1V579h-1zM192 576h1V579h-1zM193 576h1V579h-1zM194 576h1V579h-1zM195 576h1V579h-1zM196 576h1V579h-1zM197 576h1V579h-1zM198 576h1V579h-1zM199 576h1V579h-1zM200 576h1V579h-1zM201 576h1V579h-1zM202 576h1V579h-1zM203 576h1V579h-1zM204 576h1V579h-1zM205 576h1V579h-1zM206 576h1V579h-1zM207 576h1V579h-1zM208 576h1V579h-1zM209 576h1V579h-1zM210 576h1V579h-1zM211 576h1V579h-1zM212 576h1V579h-1zM213 576h1V579h-1zM214 576h1V579h-1zM215 575h1V579h-1zM216 576h1V579h-1zM217 576h1V579h-1zM218 576h1V579h-1zM219 576h1V579h-1zM220 576h1V579h-1zM221 576h1V579h-1zM222 576h1V579h-1zM223 576h1V579h-1zM224 576h1V579h-1zM225 576h1V580h-1zM226 576h1V579h-1zM227 576h1V579h-1zM228 576h1V579h-1zM229 576h1V579h-1zM230 576h1V580h-1zM231 576h1V579h-1zM232 576h1V579h-1zM233 576h1V579h-1zM234 576h1V579h-1zM235 576h1V579h-1zM236 576h1V579h-1zM237 576h1V579h-1zM238 576h1V579h-1zM239 576h1V579h-1zM240 576h1V579h-1zM241 576h1V579h-1zM242 576h1V579h-1zM243 576h1V579h-1zM244 576h1V579h-1zM245 576h1V579h-1zM246 576h1V579h-1zM247 576h1V579h-1zM248 576h1V579h-1zM249 576h1V579h-1zM250 576h1V579h-1zM251 576h1V579h-1zM252 576h1V579h-1zM253 576h1V579h-1zM254 576h1V579h-1zM255 576h1V579h-1zM256 576h1V579h-1zM257 576h1V579h-1zM258 576h1V579h-1zM259 576h1V579h-1zM260 576h1V579h-1zM261 576h1V579h-1zM262 576h1V579h-1zM263 576h1V579h-1zM264 576h1V579h-1zM265 576h1V579h-1zM266 576h1V579h-1zM267 576h1V579h-1zM268 576h1V579h-1zM269 576h1V579h-1zM270 576h1V579h-1zM271 576h1V579h-1zM272 576h1V579h-1zM273 576h1V579h-1zM274 576h1V579h-1zM275 576h1V579h-1zM276 576h1V579h-1zM277 576h1V579h-1zM278 575h1V579h-1zM279 576h1V579h-1zM280 576h1V579h-1zM281 576h1V579h-1zM282 576h1V579h-1zM283 576h1V579h-1zM284 576h1V579h-1zM285 576h1V579h-1zM286 576h1V579h-1zM287 576h1V579h-1zM288 576h1V579h-1zM289 576h1V579h-1zM290 576h1V579h-1zM291 576h1V579h-1zM292 576h1V579h-1zM293 576h1V579h-1zM294 576h1V579h-1zM295 576h1V579h-1zM296 576h1V579h-1zM297 576h1V579h-1zM298 576h1V579h-1zM299 576h1V579h-1zM300 576h1V579h-1zM301 575h1V579h-1zM302 576h1V579h-1zM303 576h1V579h-1zM304 576h1V579h-1zM305 576h1V579h-1zM306 576h1V579h-1zM307 576h1V579h-1zM308 576h1V579h-1zM309 576h1V579h-1zM310 576h1V579h-1zM311 576h1V579h-1zM312 576h1V579h-1zM313 576h1V579h-1zM314 576h1V579h-1zM315 576h1V579h-1zM316 576h1V579h-1zM317 576h1V579h-1zM318 576h1V579h-1zM319 576h1V579h-1zM320 576h1V579h-1zM321 576h1V579h-1zM322 576h1V579h-1zM323 576h1V579h-1zM324 575h1V579h-1zM325 576h1V579h-1zM326 576h1V579h-1zM327 576h1V579h-1zM328 576h1V579h-1zM329 576h1V580h-1zM330 576h1V579h-1zM331 575h1V579h-1zM332 574h1V581h-1zM333 570h1V585h-1zM334 573h1V584h-1zM335 574h1V583h-1zM336 573h1V581h-1zM337 574h1V579h-1zM338 574h1V579h-1zM339 576h1V581h-1zM340 576h1V581h-1zM341 576h1V580h-1zM342 575h1V579h-1zM343 575h1V578h-1zM344 575h1V579h-1zM345 576h1V580h-1zM346 577h1V580h-1zM347 576h1V581h-1zM348 575h1V579h-1zM349 575h1V579h-1zM350 575h1V579h-1zM351 576h1V580h-1zM352 576h1V580h-1zM353 576h1V580h-1zM354 576h1V579h-1zM355 575h1V578h-1zM356 575h1V579h-1zM357 576h1V580h-1zM358 577h1V580h-1zM359 576h1V580h-1zM360 575h1V579h-1zM361 575h1V578h-1zM362 576h1V579h-1zM363 576h1V580h-1zM364 576h1V580h-1zM365 576h1V580h-1zM366 575h1V579h-1zM367 575h1V579h-1zM368 576h1V579h-1zM369 576h1V579h-1zM370 629h1V632h-1zM371 628h1V632h-1zM372 628h1V632h-1zM373 628h1V631h-1zM374 628h1V631h-1zM375 628h1V632h-1zM376 629h1V633h-1zM377 628h1V632h-1zM378 628h1V631h-1zM379 628h1V631h-1zM380 628h1V631h-1zM381 629h1V632h-1zM382 629h1V632h-1zM383 628h1V632h-1zM384 627h1V632h-1zM385 627h1V632h-1zM386 625h1V636h-1zM387 617h1V643h-1zM388 622h1V641h-1zM389 624h1V639h-1zM390 625h1V635h-1zM391 625h1V633h-1zM392 625h1V632h-1zM393 628h1V634h-1zM394 629h1V634h-1zM395 628h1V633h-1zM396 627h1V631h-1zM397 627h1V631h-1zM398 627h1V632h-1zM399 628h1V632h-1zM400 629h1V633h-1zM401 628h1V633h-1zM402 628h1V631h-1zM403 627h1V631h-1zM404 627h1V631h-1zM405 628h1V633h-1zM406 629h1V633h-1zM407 629h1V633h-1zM408 627h1V631h-1zM409 628h1V630h-1zM410 628h1V632h-1zM411 628h1V632h-1zM412 630h1V633h-1zM413 628h1V632h-1zM414 627h1V631h-1zM415 627h1V630h-1zM416 628h1V632h-1zM417 628h1V633h-1zM418 630h1V632h-1zM419 628h1V632h-1zM420 628h1V632h-1zM421 627h1V631h-1zM422 628h1V631h-1zM423 628h1V633h-1zM424 629h1V633h-1zM425 629h1V633h-1zM426 627h1V631h-1zM427 627h1V631h-1zM428 628h1V632h-1zM429 629h1V632h-1zM430 630h1V633h-1zM431 628h1V633h-1zM432 628h1V632h-1zM433 628h1V630h-1zM434 627h1V632h-1zM435 628h1V632h-1zM436 629h1V632h-1zM437 628h1V633h-1zM438 628h1V632h-1zM439 628h1V631h-1zM440 628h1V632h-1zM441 629h1V632h-1zM442 629h1V632h-1zM443 628h1V632h-1zM444 628h1V631h-1zM445 628h1V631h-1zM446 628h1V632h-1zM447 629h1V632h-1zM448 629h1V632h-1zM449 629h1V632h-1zM450 628h1V631h-1zM451 628h1V631h-1zM452 627h1V632h-1zM453 628h1V632h-1zM454 629h1V632h-1zM455 628h1V633h-1zM456 628h1V631h-1zM457 628h1V631h-1zM458 628h1V631h-1zM459 629h1V632h-1zM460 629h1V632h-1zM461 628h1V632h-1zM462 628h1V632h-1zM463 628h1V632h-1zM464 628h1V632h-1zM465 629h1V632h-1zM466 629h1V632h-1zM467 628h1V632h-1zM468 628h1V632h-1zM469 628h1V631h-1zM470 628h1V632h-1zM471 628h1V632h-1zM472 629h1V632h-1zM473 629h1V632h-1zM474 628h1V632h-1zM475 628h1V631h-1zM476 628h1V631h-1zM477 629h1V632h-1zM478 629h1V632h-1zM479 629h1V632h-1zM480 628h1V632h-1zM481 628h1V631h-1zM482 628h1V631h-1zM483 629h1V632h-1zM484 627h1V632h-1zM485 628h1V632h-1zM486 628h1V632h-1zM487 628h1V631h-1zM488 628h1V632h-1zM489 628h1V631h-1zM490 628h1V632h-1zM491 628h1V632h-1zM492 628h1V631h-1zM493 628h1V631h-1zM494 628h1V631h-1zM495 629h1V632h-1zM496 629h1V632h-1zM497 628h1V632h-1zM498 628h1V632h-1zM499 628h1V631h-1zM500 628h1V632h-1zM501 628h1V632h-1zM502 629h1V632h-1zM503 628h1V632h-1zM504 628h1V631h-1zM505 628h1V631h-1zM506 628h1V632h-1zM507 629h1V631h-1zM508 629h1V632h-1zM509 628h1V632h-1zM510 628h1V632h-1zM511 627h1V632h-1zM512 628h1V632h-1zM513 628h1V632h-1zM514 629h1V632h-1zM515 629h1V632h-1zM516 628h1V632h-1zM517 628h1V631h-1zM518 629h1V631h-1zM519 628h1V632h-1zM520 629h1V631h-1zM521 628h1V632h-1zM522 628h1V631h-1zM523 628h1V631h-1zM524 628h1V631h-1zM525 629h1V632h-1zM526 629h1V632h-1zM527 629h1V631h-1zM528 628h1V631h-1zM529 628h1V631h-1zM530 628h1V632h-1zM531 628h1V632h-1zM532 629h1V632h-1zM533 629h1V631h-1zM534 628h1V632h-1zM535 628h1V632h-1zM536 629h1V631h-1zM537 629h1V631h-1zM538 628h1V631h-1zM539 628h1V632h-1zM540 628h1V632h-1zM541 628h1V632h-1zM542 628h1V631h-1zM543 628h1V632h-1zM544 628h1V632h-1zM545 629h1V631h-1zM546 628h1V631h-1zM547 628h1V631h-1zM548 629h1V631h-1zM549 628h1V632h-1zM550 628h1V632h-1zM551 628h1V631h-1zM552 628h1V631h-1zM553 628h1V632h-1zM554 628h1V631h-1zM555 628h1V632h-1zM556 629h1V631h-1zM557 628h1V631h-1zM558 628h1V632h-1zM559 629h1V632h-1zM560 628h1V631h-1zM561 628h1V631h-1zM562 629h1V632h-1zM563 628h1V632h-1zM564 629h1V632h-1zM565 629h1V631h-1zM566 627h1V632h-1zM567 628h1V632h-1zM568 628h1V632h-1zM569 629h1V631h-1zM570 628h1V633h-1zM571 628h1V632h-1zM572 629h1V632h-1zM573 628h1V632h-1zM574 628h1V632h-1zM575 628h1V632h-1zM576 628h1V631h-1zM577 628h1V632h-1zM578 628h1V632h-1zM579 628h1V632h-1zM580 629h1V632h-1zM581 629h1V631h-1zM582 629h1V632h-1zM583 629h1V631h-1zM584 629h1V632h-1zM585 629h1V632h-1zM586 629h1V632h-1zM587 628h1V632h-1zM588 628h1V632h-1zM589 629h1V631h-1zM590 628h1V631h-1zM591 628h1V631h-1zM592 628h1V632h-1zM593 629h1V631h-1zM594 628h1V631h-1zM595 629h1V631h-1zM596 628h1V632h-1zM597 628h1V632h-1zM598 629h1V632h-1zM599 628h1V632h-1zM600 628h1V632h-1zM601 628h1V631h-1zM602 629h1V632h-1zM603 629h1V632h-1zM604 628h1V631h-1zM605 628h1V632h-1zM606 628h1V631h-1zM607 628h1V632h-1zM608 629h1V631h-1zM609 628h1V631h-1zM610 629h1V631h-1zM611 629h1V631h-1zM612 628h1V632h-1zM613 628h1V631h-1zM614 629h1V631h-1zM615 629h1V631h-1zM616 629h1V631h-1zM617 628h1V632h-1zM618 628h1V632h-1zM619 628h1V632h-1zM620 628h1V632h-1zM621 629h1V632h-1zM622 629h1V632h-1zM623 629h1V631h-1zM624 628h1V632h-1zM625 628h1V632h-1zM626 629h1V632h-1zM627 628h1V631h-1zM628 629h1V632h-1zM629 628h1V632h-1zM630 628h1V632h-1zM631 628h1V632h-1zM632 628h1V631h-1zM633 628h1V632h-1zM634 629h1V632h-1zM635 629h1V632h-1zM636 629h1V632h-1zM637 628h1V632h-1zM638 628h1V632h-1zM639 628h1V632h-1zM640 629h1V632h-1zM641 628h1V632h-1zM642 628h1V632h-1zM643 628h1V632h-1zM644 628h1V631h-1zM645 629h1V632h-1zM646 628h1V632h-1zM647 629h1V632h-1zM648 629h1V631h-1zM649 629h1V632h-1zM650 627h1V632h-1zM651 628h1V632h-1zM652 628h1V632h-1zM653 628h1V632h-1zM654 628h1V631h-1zM655 628h1V632h-1zM656 628h1V632h-1zM657 628h1V631h-1zM658 628h1V631h-1zM659 628h1V631h-1zM660 629h1V632h-1zM661 628h1V632h-1zM662 628h1V632h-1zM663 628h1V632h-1zM664 628h1V631h-1zM665 629h1V631h-1zM666 628h1V632h-1zM667 628h1V631h-1zM668 629h1V632h-1zM669 628h1V632h-1zM670 629h1V632h-1zM671 629h1V632h-1zM672 629h1V631h-1zM673 628h1V631h-1zM674 629h1V631h-1zM675 628h1V631h-1zM676 629h1V632h-1zM677 628h1V632h-1zM678 628h1V631h-1zM679 629h1V632h-1zM680 628h1V632h-1zM681 628h1V631h-1zM682 628h1V632h-1zM683 629h1V632h-1zM684 629h1V631h-1zM685 628h1V631h-1zM686 628h1V632h-1zM687 629h1V632h-1zM688 628h1V631h-1zM689 628h1V631h-1zM690 629h1V631h-1zM691 628h1V632h-1zM692 629h1V632h-1zM693 629h1V631h-1zM694 628h1V632h-1zM695 628h1V631h-1zM696 628h1V631h-1zM697 628h1V632h-1zM698 629h1V632h-1zM699 628h1V632h-1zM700 629h1V631h-1zM701 629h1V631h-1zM702 628h1V632h-1zM703 628h1V632h-1zM704 628h1V632h-1zM705 628h1V631h-1zM706 628h1V631h-1zM707 627h1V631h-1zM708 629h1V631h-1zM709 629h1V631h-1zM710 628h1V631h-1zM711 628h1V632h-1zM712 629h1V633h-1zM713 628h1V631h-1zM714 628h1V632h-1zM715 628h1V631h-1zM716 629h1V631h-1zM717 629h1V632h-1zM718 628h1V631h-1zM719 628h1V631h-1zM720 628h1V632h-1zM721 629h1V631h-1zM722 628h1V631h-1zM723 629h1V632h-1zM724 629h1V632h-1zM725 628h1V632h-1zM726 628h1V632h-1zM727 629h1V631h-1zM728 629h1V631h-1zM729 629h1V632h-1zM730 629h1V632h-1zM731 629h1V632h-1zM732 628h1V632h-1zM733 628h1V631h-1zM734 628h1V632h-1zM735 628h1V631h-1zM736 629h1V631h-1zM737 628h1V632h-1zM738 628h1V632h-1zM739 628h1V631h-1zM740 629h1V632h-1zM741 628h1V632h-1zM742 628h1V632h-1zM743 628h1V631h-1zM744 629h1V632h-1zM745 628h1V632h-1zM746 628h1V631h-1zM747 628h1V631h-1zM748 628h1V632h-1zM749 629h1V631h-1zM750 628h1V631h-1zM751 628h1V632h-1zM752 629h1V632h-1zM753 629h1V631h-1zM754 628h1V632h-1zM755 628h1V631h-1zM756 628h1V632h-1zM757 627h1V633h-1zM758 623h1V636h-1zM759 626h1V636h-1zM760 627h1V635h-1zM761 625h1V633h-1zM762 626h1V631h-1zM763 627h1V632h-1zM764 628h1V633h-1zM765 629h1V633h-1zM766 628h1V634h-1zM767 627h1V632h-1zM768 627h1V630h-1zM769 627h1V632h-1zM770 628h1V632h-1zM771 629h1V633h-1zM772 628h1V632h-1zM773 628h1V631h-1zM774 628h1V631h-1zM775 627h1V632h-1zM776 629h1V632h-1zM777 628h1V632h-1zM778 629h1V632h-1zM779 628h1V632h-1zM780 628h1V631h-1zM781 628h1V631h-1zM782 628h1V633h-1zM783 630h1V633h-1zM784 629h1V632h-1zM785 628h1V632h-1zM786 627h1V631h-1zM787 628h1V631h-1zM788 628h1V632h-1zM789 628h1V632h-1zM790 629h1V632h-1zM791 628h1V632h-1zM792 628h1V631h-1zM793 628h1V631h-1zM794 628h1V632h-1zM795 628h1V633h-1zM796 628h1V632h-1zM797 628h1V632h-1zM798 628h1V631h-1zM799 628h1V632h-1zM800 628h1V632h-1zM801 629h1V633h-1zM802 628h1V632h-1zM803 628h1V632h-1zM804 627h1V631h-1zM805 628h1V632h-1zM806 629h1V632h-1zM807 629h1V632h-1zM808 576h1V580h-1zM809 575h1V580h-1zM810 573h1V581h-1zM811 567h1V588h-1zM812 571h1V586h-1zM813 574h1V584h-1zM814 573h1V582h-1zM815 573h1V581h-1zM816 574h1V579h-1zM817 575h1V580h-1zM818 576h1V581h-1zM819 576h1V581h-1zM820 575h1V579h-1zM821 575h1V578h-1zM822 575h1V579h-1zM823 576h1V580h-1zM824 577h1V581h-1zM825 576h1V580h-1zM826 575h1V579h-1zM827 575h1V578h-1zM828 575h1V579h-1zM829 575h1V580h-1zM830 577h1V580h-1zM831 577h1V580h-1zM832 575h1V579h-1zM833 575h1V579h-1zM834 575h1V579h-1zM835 576h1V580h-1zM836 577h1V580h-1zM837 576h1V580h-1zM838 575h1V581h-1zM839 575h1V578h-1zM840 575h1V578h-1zM841 575h1V580h-1zM842 576h1V580h-1zM843 576h1V580h-1zM844 576h1V580h-1zM845 575h1V578h-1zM846 575h1V579h-1zM847 576h1V579h-1zM848 577h1V580h-1zM849 575h1V580h-1zM850 575h1V579h-1zM851 575h1V579h-1zM852 575h1V579h-1zM853 576h1V579h-1zM854 577h1V579h-1zM855 576h1V579h-1zM856 576h1V579h-1zM857 575h1V579h-1zM858 574h1V579h-1zM859 576h1V580h-1zM860 577h1V580h-1zM861 576h1V580h-1zM862 575h1V579h-1zM863 575h1V579h-1zM864 575h1V580h-1zM865 576h1V579h-1zM866 577h1V580h-1zM867 576h1V580h-1zM868 576h1V579h-1zM869 575h1V578h-1zM870 576h1V579h-1zM871 576h1V579h-1zM872 576h1V580h-1zM873 576h1V580h-1zM874 576h1V579h-1zM875 575h1V579h-1zM876 575h1V579h-1zM877 576h1V580h-1zM878 577h1V580h-1zM879 577h1V579h-1zM880 576h1V579h-1zM881 576h1V578h-1zM882 575h1V580h-1zM883 576h1V580h-1zM884 576h1V579h-1zM885 575h1V580h-1zM886 575h1V579h-1zM887 575h1V579h-1zM888 576h1V579h-1zM889 576h1V579h-1zM890 575h1V580h-1zM891 576h1V579h-1zM892 576h1V579h-1zM893 576h1V579h-1zM894 576h1V579h-1zM895 576h1V580h-1zM896 576h1V579h-1zM897 576h1V580h-1zM898 576h1V579h-1zM899 575h1V579h-1zM900 575h1V579h-1zM901 576h1V579h-1zM902 576h1V580h-1zM903 576h1V580h-1zM904 576h1V580h-1zM905 575h1V579h-1zM906 576h1V579h-1zM907 576h1V581h-1zM908 576h1V580h-1zM909 576h1V579h-1zM910 576h1V579h-1zM911 576h1V578h-1zM912 575h1V579h-1zM913 576h1V579h-1zM914 576h1V579h-1zM915 576h1V579h-1zM916 576h1V579h-1zM917 576h1V579h-1zM918 576h1V579h-1zM919 576h1V579h-1zM920 576h1V579h-1zM921 576h1V579h-1zM922 575h1V579h-1zM923 576h1V579h-1zM924 576h1V579h-1zM925 575h1V579h-1zM926 576h1V580h-1zM927 576h1V580h-1zM928 576h1V579h-1zM929 576h1V579h-1zM930 576h1V579h-1zM931 576h1V579h-1zM932 576h1V580h-1zM933 576h1V579h-1zM934 576h1V579h-1zM935 575h1V579h-1zM936 576h1V579h-1zM937 576h1V579h-1zM938 576h1V579h-1zM939 576h1V579h-1zM940 576h1V579h-1zM941 576h1V579h-1zM942 576h1V579h-1zM943 576h1V579h-1zM944 576h1V579h-1zM945 576h1V580h-1zM946 576h1V579h-1zM947 576h1V579h-1zM948 576h1V579h-1zM949 576h1V580h-1zM950 576h1V579h-1zM951 576h1V579h-1zM952 576h1V580h-1zM953 576h1V579h-1zM954 576h1V579h-1zM955 576h1V579h-1zM956 575h1V579h-1zM957 576h1V579h-1zM958 576h1V579h-1zM959 576h1V579h-1zM960 575h1V579h-1zM961 576h1V579h-1zM962 576h1V579h-1zM963 576h1V579h-1zM964 576h1V579h-1zM965 575h1V579h-1zM966 576h1V580h-1zM967 576h1V579h-1zM968 576h1V579h-1zM969 576h1V579h-1zM970 576h1V580h-1zM971 576h1V580h-1zM972 576h1V579h-1zM973 576h1V579h-1zM974 575h1V579h-1zM975 576h1V579h-1zM976 576h1V579h-1zM977 576h1V579h-1zM978 576h1V579h-1zM979 576h1V579h-1zM980 576h1V579h-1zM981 576h1V579h-1zM982 576h1V579h-1zM983 576h1V579h-1zM984 576h1V579h-1zM985 576h1V579h-1zM986 576h1V579h-1zM987 576h1V579h-1zM988 576h1V579h-1zM989 576h1V579h-1zM990 576h1V579h-1zM991 576h1V579h-1zM992 576h1V579h-1zM993 576h1V579h-1zM994 576h1V579h-1zM995 576h1V579h-1zM996 576h1V579h-1zM997 576h1V579h-1zM998 576h1V579h-1zM999 576h1V579h-1zM1000 576h1V579h-1zM1001 575h1V579h-1zM1002 576h1V579h-1zM1003 576h1V579h-1zM1004 576h1V579h-1zM1005 576h1V580h-1zM1006 576h1V580h-1zM1007 576h1V579h-1zM1008 575h1V579h-1zM1009 576h1V579h-1zM1010 576h1V579h-1zM1011 576h1V579h-1zM1012 576h1V579h-1zM1013 576h1V579h-1zM1014 576h1V579h-1zM1015 576h1V579h-1zM1016 576h1V579h-1zM1017 576h1V579h-1zM1018 576h1V579h-1zM1019 576h1V579h-1zM1020 576h1V579h-1zM1021 575h1V579h-1zM1022 576h1V579h-1zM1023 576h1V579h-1zM1024 575h1V579h-1zM1025 576h1V579h-1zM1026 576h1V579h-1zM1027 576h1V579h-1zM1028 576h1V579h-1zM1029 576h1V579h-1zM1030 576h1V579h-1zM1031 576h1V579h-1zM1032 576h1V579h-1zM1033 576h1V579h-1zM1034 576h1V579h-1zM1035 576h1V580h-1zM1036 576h1V579h-1zM1037 576h1V579h-1zM1038 576h1V579h-1zM1039 576h1V579h-1zM1040 576h1V579h-1zM1041 576h1V579h-1zM1042 575h1V579h-1zM1043 576h1V579h-1zM1044 576h1V579h-1zM1045 575h1V579h-1zM1046 576h1V579h-1zM1047 576h1V579h-1zM1048 576h1V579h-1zM1049 576h1V579h-1zM1050 576h1V579h-1zM1051 576h1V579h-1zM1052 576h1V579h-1zM1053 576h1V579h-1zM1054 576h1V579h-1zM1055 575h1V579h-1zM1056 576h1V579h-1zM1057 576h1V579h-1zM1058 576h1V580h-1zM1059 576h1V579h-1zM1060 576h1V579h-1zM1061 576h1V579h-1zM1062 576h1V579h-1zM1063 576h1V579h-1zM1064 576h1V579h-1zM1065 575h1V579h-1zM1066 576h1V579h-1zM1067 576h1V579h-1zM1068 576h1V579h-1zM1069 576h1V579h-1zM1070 576h1V579h-1zM1071 576h1V579h-1zM1072 576h1V579h-1zM1073 576h1V579h-1zM1074 576h1V579h-1zM1075 576h1V579h-1zM1076 576h1V579h-1zM1077 576h1V579h-1zM1078 576h1V579h-1zM1079 576h1V579h-1zM1080 576h1V579h-1zM1081 576h1V579h-1zM1082 576h1V579h-1zM1083 576h1V579h-1zM1084 575h1V579h-1zM1085 576h1V579h-1zM1086 576h1V579h-1zM1087 576h1V579h-1zM1088 576h1V579h-1zM1089 576h1V580h-1zM1090 576h1V579h-1zM1091 576h1V579h-1zM1092 575h1V579h-1zM1093 576h1V579h-1zM1094 576h1V579h-1zM1095 576h1V579h-1zM1096 576h1V579h-1zM1097 576h1V579h-1zM1098 576h1V579h-1zM1099 576h1V579h-1zM1100 576h1V579h-1zM1101 576h1V579h-1zM1102 576h1V579h-1zM1103 576h1V580h-1zM1104 576h1V579h-1zM1105 576h1V579h-1zM1106 576h1V579h-1zM1107 576h1V579h-1zM1108 576h1V579h-1zM1109 576h1V579h-1zM1110 576h1V579h-1zM1111 576h1V579h-1zM1112 576h1V579h-1zM1113 576h1V579h-1zM1114 576h1V579h-1zM1115 576h1V579h-1zM1116 575h1V579h-1zM1117 576h1V579h-1zM1118 575h1V579h-1zM1119 576h1V579h-1zM1120 576h1V579h-1zM1121 576h1V579h-1zM1122 576h1V579h-1zM1123 575h1V579h-1zM1124 576h1V579h-1zM1125 576h1V579h-1zM1126 576h1V579h-1zM1127 576h1V579h-1zM1128 576h1V579h-1zM1129 576h1V579h-1zM1130 576h1V579h-1zM1131 576h1V579h-1zM1132 576h1V579h-1zM1133 576h1V579h-1zM1134 576h1V579h-1zM1135 576h1V579h-1zM1136 576h1V579h-1zM1137 576h1V579h-1zM1138 575h1V579h-1zM1139 576h1V579h-1zM1140 576h1V579h-1zM1141 576h1V579h-1zM1142 576h1V579h-1zM1143 576h1V579h-1zM1144 576h1V579h-1zM1145 576h1V579h-1zM1146 576h1V579h-1zM1147 576h1V579h-1zM1148 576h1V579h-1zM1149 576h1V579h-1zM1150 576h1V579h-1zM1151 576h1V579h-1zM1152 576h1V579h-1zM1153 576h1V579h-1zM1154 575h1V579h-1zM1155 576h1V579h-1zM1156 576h1V579h-1zM1157 576h1V579h-1zM1158 576h1V579h-1zM1159 576h1V579h-1zM1160 576h1V579h-1zM1161 576h1V579h-1zM1162 576h1V579h-1zM1163 576h1V579h-1zM1164 576h1V579h-1zM1165 576h1V579h-1zM1166 576h1V579h-1zM1167 576h1V579h-1zM1168 576h1V579h-1zM1169 576h1V579h-1zM1170 576h1V579h-1zM1171 576h1V579h-1zM1172 576h1V579h-1zM1173 576h1V579h-1zM1174 576h1V579h-1zM1175 576h1V579h-1zM1176 576h1V579h-1zM1177 576h1V579h-1zM1178 576h1V579h-1zM1179 576h1V579h-1zM1180 576h1V580h-1zM1181 576h1V581h-1zM1182 574h1V581h-1zM1183 570h1V585h-1zM1184 573h1V584h-1zM1185 574h1V583h-1zM1186 573h1V581h-1zM1187 573h1V579h-1zM1188 575h1V580h-1zM1189 575h1V581h-1zM1190 577h1V581h-1zM1191 576h1V580h-1zM1192 575h1V579h-1zM1193 575h1V578h-1zM1194 575h1V579h-1zM1195 576h1V580h-1zM1196 577h1V580h-1zM1197 576h1V580h-1zM1198 575h1V579h-1zM1199 575h1V578h-1zM1200 574h1V579h-1zM1201 576h1V580h-1zM1202 577h1V581h-1zM1203 576h1V580h-1zM1204 576h1V579h-1zM1205 575h1V578h-1zM1206 575h1V579h-1zM1207 576h1V580h-1zM1208 576h1V580h-1zM1209 576h1V579h-1zM1210 575h1V579h-1zM1211 575h1V578h-1zM1212 575h1V579h-1zM1213 576h1V580h-1zM1214 577h1V580h-1zM1215 576h1V580h-1zM1216 575h1V579h-1zM1217 574h1V579h-1zM1218 575h1V579h-1zM1219 576h1V580h-1zM1220 629h1V632h-1zM1221 628h1V632h-1zM1222 628h1V631h-1zM1223 627h1V631h-1zM1224 628h1V631h-1zM1225 628h1V632h-1zM1226 629h1V632h-1zM1227 628h1V632h-1zM1228 628h1V632h-1zM1229 628h1V631h-1zM1230 628h1V631h-1zM1231 629h1V632h-1zM1232 628h1V632h-1zM1233 628h1V632h-1zM1234 627h1V633h-1zM1235 624h1V635h-1zM1236 617h1V643h-1zM1237 622h1V641h-1zM1238 625h1V638h-1zM1239 625h1V635h-1zM1240 625h1V633h-1zM1241 626h1V632h-1zM1242 627h1V633h-1zM1243 629h1V634h-1zM1244 628h1V634h-1zM1245 627h1V632h-1zM1246 627h1V631h-1zM1247 627h1V631h-1zM1248 628h1V632h-1zM1249 629h1V633h-1zM1250 629h1V633h-1zM1251 628h1V631h-1zM1252 628h1V631h-1zM1253 627h1V631h-1zM1254 628h1V632h-1zM1255 629h1V633h-1zM1256 629h1V633h-1zM1257 628h1V631h-1zM1258 627h1V631h-1zM1259 627h1V631h-1zM1260 628h1V632h-1zM1261 629h1V632h-1zM1262 629h1V632h-1zM1263 628h1V632h-1zM1264 627h1V631h-1zM1265 627h1V631h-1zM1266 628h1V633h-1zM1267 629h1V632h-1zM1268 629h1V632h-1zM1269 628h1V632h-1zM1270 627h1V631h-1zM1271 628h1V631h-1zM1272 628h1V632h-1zM1273 629h1V633h-1zM1274 629h1V633h-1zM1275 628h1V632h-1zM1276 627h1V631h-1zM1277 628h1V632h-1zM1278 628h1V632h-1zM1279 629h1V632h-1zM1280 629h1V632h-1zM1281 628h1V632h-1zM1282 628h1V631h-1zM1283 628h1V631h-1zM1284 629h1V632h-1zM1285 629h1V632h-1zM1286 628h1V633h-1zM1287 628h1V632h-1zM1288 627h1V631h-1zM1289 627h1V632h-1zM1290 629h1V632h-1zM1291 629h1V632h-1zM1292 628h1V632h-1zM1293 628h1V632h-1zM1294 628h1V631h-1zM1295 628h1V632h-1zM1296 628h1V632h-1zM1297 629h1V632h-1zM1298 628h1V632h-1zM1299 628h1V631h-1zM1300 628h1V631h-1zM1301 628h1V632h-1zM1302 629h1V632h-1zM1303 629h1V632h-1zM1304 628h1V632h-1zM1305 629h1V632h-1zM1306 628h1V631h-1zM1307 628h1V631h-1zM1308 629h1V632h-1zM1309 629h1V632h-1zM1310 629h1V632h-1zM1311 629h1V632h-1zM1312 628h1V631h-1zM1313 628h1V631h-1zM1314 629h1V632h-1zM1315 629h1V632h-1zM1316 629h1V632h-1zM1317 628h1V632h-1zM1318 628h1V631h-1zM1319 628h1V632h-1zM1320 629h1V632h-1zM1321 629h1V632h-1zM1322 629h1V632h-1zM1323 628h1V632h-1zM1324 628h1V632h-1zM1325 629h1V631h-1zM1326 629h1V632h-1zM1327 628h1V632h-1zM1328 628h1V632h-1zM1329 628h1V632h-1zM1330 628h1V631h-1zM1331 629h1V632h-1zM1332 628h1V632h-1zM1333 629h1V631h-1zM1334 628h1V632h-1zM1335 628h1V631h-1zM1336 628h1V631h-1zM1337 628h1V632h-1zM1338 628h1V632h-1zM1339 629h1V632h-1zM1340 628h1V632h-1zM1341 629h1V632h-1zM1342 628h1V631h-1zM1343 628h1V632h-1zM1344 628h1V631h-1zM1345 629h1V632h-1zM1346 629h1V632h-1zM1347 629h1V631h-1zM1348 628h1V631h-1zM1349 629h1V632h-1zM1350 628h1V632h-1zM1351 628h1V631h-1zM1352 629h1V632h-1zM1353 628h1V631h-1zM1354 628h1V631h-1zM1355 628h1V632h-1zM1356 628h1V632h-1zM1357 629h1V632h-1zM1358 629h1V632h-1zM1359 628h1V632h-1zM1360 629h1V632h-1zM1361 628h1V631h-1zM1362 628h1V631h-1zM1363 628h1V632h-1zM1364 629h1V632h-1zM1365 628h1V631h-1zM1366 628h1V632h-1zM1367 629h1V631h-1zM1368 628h1V632h-1zM1369 628h1V632h-1zM1370 629h1V632h-1zM1371 628h1V632h-1zM1372 628h1V631h-1zM1373 628h1V631h-1zM1374 629h1V632h-1zM1375 629h1V631h-1zM1376 629h1V631h-1zM1377 629h1V632h-1zM1378 628h1V632h-1zM1379 628h1V631h-1zM1380 628h1V632h-1zM1381 629h1V631h-1zM1382 628h1V631h-1zM1383 629h1V632h-1zM1384 628h1V631h-1zM1385 628h1V631h-1zM1386 628h1V631h-1zM1387 628h1V631h-1zM1388 628h1V631h-1zM1389 628h1V631h-1zM1390 629h1V632h-1zM1391 628h1V631h-1zM1392 628h1V632h-1zM1393 629h1V632h-1zM1394 629h1V633h-1zM1395 628h1V632h-1zM1396 629h1V631h-1zM1397 629h1V631h-1zM1398 628h1V632h-1zM1399 629h1V632h-1zM1400 629h1V631h-1zM1401 629h1V631h-1zM1402 628h1V632h-1zM1403 628h1V632h-1zM1404 628h1V631h-1zM1405 628h1V632h-1zM1406 628h1V631h-1zM1407 628h1V632h-1zM1408 629h1V631h-1zM1409 628h1V632h-1zM1410 628h1V631h-1zM1411 629h1V632h-1zM1412 628h1V632h-1zM1413 628h1V632h-1zM1414 628h1V631h-1zM1415 629h1V631h-1zM1416 628h1V632h-1zM1417 629h1V632h-1zM1418 627h1V632h-1zM1419 629h1V632h-1zM1420 628h1V631h-1zM1421 629h1V632h-1zM1422 628h1V632h-1zM1423 628h1V631h-1zM1424 629h1V631h-1zM1425 629h1V632h-1zM1426 628h1V632h-1zM1427 628h1V632h-1zM1428 628h1V632h-1zM1429 628h1V632h-1zM1430 629h1V632h-1zM1431 629h1V632h-1zM1432 629h1V632h-1zM1433 628h1V631h-1zM1434 628h1V632h-1zM1435 628h1V631h-1zM1436 629h1V632h-1zM1437 628h1V631h-1zM1438 628h1V631h-1zM1439 628h1V632h-1zM1440 629h1V632h-1zM1441 628h1V632h-1zM1442 628h1V631h-1zM1443 628h1V631h-1zM1444 628h1V632h-1zM1445 629h1V631h-1zM1446 629h1V632h-1zM1447 629h1V631h-1zM1448 629h1V632h-1zM1449 628h1V631h-1zM1450 628h1V631h-1zM1451 628h1V632h-1zM1452 628h1V632h-1zM1453 629h1V632h-1zM1454 628h1V632h-1zM1455 628h1V632h-1zM1456 628h1V631h-1zM1457 628h1V631h-1zM1458 628h1V632h-1zM1459 629h1V632h-1zM1460 628h1V632h-1zM1461 628h1V631h-1zM1462 629h1V632h-1zM1463 629h1V632h-1zM1464 628h1V632h-1zM1465 629h1V631h-1zM1466 628h1V632h-1zM1467 629h1V631h-1zM1468 628h1V631h-1zM1469 629h1V631h-1zM1470 628h1V631h-1zM1471 628h1V632h-1zM1472 629h1V631h-1zM1473 629h1V632h-1zM1474 629h1V631h-1zM1475 629h1V632h-1zM1476 628h1V631h-1zM1477 628h1V632h-1zM1478 628h1V632h-1zM1479 628h1V631h-1zM1480 629h1V633h-1zM1481 629h1V632h-1zM1482 629h1V632h-1zM1483 628h1V632h-1zM1484 628h1V631h-1zM1485 628h1V631h-1zM1486 628h1V631h-1zM1487 628h1V631h-1zM1488 628h1V632h-1zM1489 629h1V632h-1zM1490 628h1V632h-1zM1491 628h1V632h-1zM1492 628h1V631h-1zM1493 629h1V631h-1zM1494 628h1V631h-1zM1495 628h1V632h-1zM1496 629h1V632h-1zM1497 628h1V632h-1zM1498 628h1V631h-1zM1499 629h1V632h-1zM1500 629h1V632h-1zM1501 628h1V632h-1zM1502 628h1V631h-1zM1503 628h1V632h-1zM1504 628h1V632h-1zM1505 628h1V632h-1zM1506 628h1V632h-1zM1507 628h1V631h-1zM1508 629h1V632h-1zM1509 628h1V631h-1zM1510 628h1V631h-1zM1511 628h1V631h-1zM1512 628h1V632h-1zM1513 628h1V631h-1zM1514 628h1V631h-1zM1515 628h1V632h-1zM1516 629h1V631h-1zM1517 629h1V632h-1zM1518 629h1V631h-1zM1519 628h1V632h-1zM1520 628h1V632h-1zM1521 628h1V631h-1zM1522 629h1V631h-1zM1523 629h1V632h-1zM1524 629h1V631h-1zM1525 628h1V632h-1zM1526 629h1V632h-1zM1527 628h1V632h-1zM1528 628h1V631h-1zM1529 628h1V632h-1zM1530 628h1V631h-1zM1531 629h1V631h-1zM1532 628h1V631h-1zM1533 628h1V632h-1zM1534 629h1V632h-1zM1535 628h1V631h-1zM1536 629h1V632h-1zM1537 628h1V632h-1zM1538 629h1V632h-1zM1539 628h1V631h-1zM1540 629h1V632h-1zM1541 628h1V631h-1zM1542 629h1V632h-1zM1543 629h1V632h-1zM1544 628h1V631h-1zM1545 629h1V631h-1zM1546 628h1V632h-1zM1547 628h1V632h-1zM1548 628h1V632h-1zM1549 629h1V631h-1zM1550 629h1V632h-1zM1551 629h1V631h-1zM1552 628h1V632h-1zM1553 629h1V632h-1zM1554 628h1V631h-1zM1555 629h1V632h-1zM1556 629h1V632h-1zM1557 629h1V632h-1zM1558 629h1V632h-1zM1559 629h1V631h-1zM1560 628h1V632h-1zM1561 629h1V632h-1zM1562 628h1V631h-1zM1563 629h1V631h-1zM1564 629h1V631h-1zM1565 629h1V631h-1zM1566 629h1V633h-1zM1567 629h1V631h-1zM1568 629h1V632h-1zM1569 628h1V632h-1zM1570 629h1V631h-1zM1571 629h1V632h-1zM1572 628h1V632h-1zM1573 628h1V632h-1zM1574 628h1V632h-1zM1575 629h1V632h-1zM1576 628h1V631h-1zM1577 629h1V632h-1zM1578 628h1V631h-1zM1579 629h1V631h-1zM1580 628h1V632h-1zM1581 628h1V633h-1zM1582 629h1V631h-1zM1583 628h1V632h-1zM1584 628h1V631h-1zM1585 628h1V632h-1zM1586 628h1V632h-1zM1587 628h1V632h-1zM1588 628h1V632h-1zM1589 628h1V632h-1zM1590 628h1V632h-1zM1591 629h1V632h-1zM1592 629h1V632h-1zM1593 629h1V632h-1zM1594 629h1V631h-1zM1595 629h1V632h-1zM1596 628h1V631h-1zM1597 628h1V631h-1zM1598 628h1V631h-1zM1599 629h1V632h-1zM1600 629h1V632h-1zM1601 628h1V631h-1zM1602 629h1V632h-1zM1603 628h1V632h-1zM1604 629h1V631h-1zM1605 629h1V632h-1zM1606 627h1V632h-1zM1607 627h1V633h-1zM1608 623h1V636h-1zM1609 626h1V636h-1zM1610 627h1V635h-1zM1611 626h1V633h-1zM1612 627h1V632h-1zM1613 627h1V632h-1zM1614 628h1V633h-1zM1615 629h1V633h-1zM1616 628h1V633h-1zM1617 627h1V631h-1zM1618 628h1V631h-1zM1619 628h1V631h-1zM1620 629h1V633h-1zM1621 629h1V632h-1zM1622 628h1V633h-1zM1623 628h1V631h-1zM1624 627h1V631h-1zM1625 627h1V632h-1zM1626 628h1V632h-1zM1627 629h1V633h-1zM1628 628h1V632h-1zM1629 628h1V632h-1zM1630 627h1V630h-1zM1631 627h1V631h-1zM1632 628h1V632h-1zM1633 629h1V632h-1zM1634 628h1V632h-1zM1635 628h1V632h-1zM1636 628h1V631h-1zM1637 627h1V632h-1zM1638 628h1V632h-1zM1639 629h1V633h-1zM1640 628h1V632h-1zM1641 628h1V631h-1zM1642 628h1V631h-1zM1643 628h1V631h-1zM1644 629h1V632h-1zM1645 629h1V633h-1zM1646 628h1V632h-1zM1647 628h1V632h-1zM1648 628h1V631h-1zM1649 628h1V632h-1zM1650 628h1V632h-1zM1651 629h1V632h-1zM1652 629h1V632h-1zM1653 628h1V631h-1zM1654 628h1V631h-1zM1655 628h1V631h-1zM1656 629h1V632h-1zM1657 629h1V632h-1zM1658 576h1V580h-1zM1659 575h1V579h-1zM1660 572h1V581h-1zM1661 567h1V587h-1zM1662 571h1V586h-1zM1663 574h1V585h-1zM1664 573h1V582h-1zM1665 573h1V580h-1zM1666 574h1V580h-1zM1667 575h1V581h-1zM1668 576h1V580h-1zM1669 576h1V580h-1zM1670 574h1V580h-1zM1671 574h1V578h-1zM1672 574h1V579h-1zM1673 576h1V580h-1zM1674 577h1V580h-1zM1675 576h1V580h-1zM1676 575h1V579h-1zM1677 574h1V578h-1zM1678 575h1V578h-1zM1679 575h1V580h-1zM1680 577h1V580h-1zM1681 577h1V580h-1zM1682 576h1V579h-1zM1683 575h1V578h-1zM1684 574h1V579h-1zM1685 575h1V580h-1zM1686 576h1V580h-1zM1687 576h1V580h-1zM1688 576h1V579h-1zM1689 575h1V578h-1zM1690 575h1V579h-1zM1691 575h1V580h-1zM1692 577h1V580h-1zM1693 576h1V580h-1zM1694 575h1V579h-1zM1695 575h1V578h-1zM1696 575h1V579h-1zM1697 576h1V580h-1zM1698 577h1V580h-1zM1699 576h1V580h-1zM1700 575h1V579h-1zM1701 575h1V579h-1zM1702 575h1V579h-1zM1703 576h1V580h-1zM1704 576h1V580h-1zM1705 576h1V580h-1zM1706 575h1V579h-1zM1707 575h1V578h-1zM1708 575h1V579h-1zM1709 576h1V579h-1zM1710 577h1V579h-1z" fill="#ee2d50"/>
<path d="M383 800h1V853h-1zM795 800h1V853h-1zM1232 800h1V853h-1zM1645 800h1V853h-1z" fill="#5a8a22"/>
<path d="M13 852h1V855h-1zM14 853h1V854h-1zM15 853h1V855h-1zM16 852h1V854h-1zM17 852h1V855h-1zM18 853h1V854h-1zM19 852h1V855h-1zM20 852h1V854h-1zM21 853h1V854h-1zM22 852h1V855h-1zM23 852h1V854h-1zM24 852h1V855h-1zM25 853h1V855h-1zM26 852h1V854h-1zM27 852h1V854h-1zM28 853h1V854h-1zM29 852h1V855h-1zM30 853h1V854h-1zM31 853h1V855h-1zM32 853h1V855h-1zM33 853h1V855h-1zM34 852h1V854h-1zM35 853h1V854h-1zM36 852h1V855h-1zM37 852h1V855h-1zM38 852h1V855h-1zM39 852h1V855h-1zM40 853h1V854h-1zM41 851h1V855h-1zM42 852h1V854h-1zM43 852h1V856h-1zM44 853h1V855h-1zM45 853h1V855h-1zM46 853h1V854h-1zM47 853h1V855h-1zM48 853h1V855h-1zM49 853h1V854h-1zM50 852h1V854h-1zM51 852h1V855h-1zM52 853h1V855h-1zM53 852h1V855h-1zM54 852h1V855h-1zM55 853h1V854h-1zM56 853h1V854h-1zM57 852h1V855h-1zM58 853h1V855h-1zM59 852h1V855h-1zM60 852h1V854h-1zM61 852h1V854h-1zM62 853h1V855h-1zM63 852h1V854h-1zM64 852h1V855h-1zM65 853h1V854h-1zM66 853h1V855h-1zM67 852h1V854h-1zM68 852h1V855h-1zM69 852h1V855h-1zM70 852h1V854h-1zM71 852h1V854h-1zM72 852h1V855h-1zM73 853h1V854h-1zM74 852h1V854h-1zM75 852h1V855h-1zM76 853h1V855h-1zM77 853h1V855h-1zM78 853h1V855h-1zM79 852h1V855h-1zM80 852h1V855h-1zM81 852h1V855h-1zM82 853h1V854h-1zM83 853h1V855h-1zM84 852h1V855h-1zM85 852h1V855h-1zM86 852h1V854h-1zM87 852h1V855h-1zM88 852h1V855h-1zM89 852h1V855h-1zM90 852h1V855h-1zM91 853h1V855h-1zM92 852h1V855h-1zM93 852h1V854h-1zM94 852h1V854h-1zM95 853h1V854h-1zM96 852h1V854h-1zM97 852h1V854h-1zM98 853h1V855h-1zM99 853h1V854h-1zM100 852h1V855h-1zM101 853h1V854h-1zM102 852h1V855h-1zM103 853h1V854h-1zM104 852h1V855h-1zM105 853h1V855h-1zM106 852h1V855h-1zM107 852h1V855h-1zM108 853h1V855h-1zM109 851h1V854h-1zM110 852h1V855h-1zM111 852h1V855h-1zM112 852h1V855h-1zM113 853h1V855h-1zM114 852h1V855h-1zM115 852h1V854h-1zM116 851h1V854h-1zM117 852h1V855h-1zM118 852h1V854h-1zM119 852h1V855h-1zM120 851h1V855h-1zM121 853h1V854h-1zM122 852h1V855h-1zM123 853h1V854h-1zM124 852h1V855h-1zM125 853h1V854h-1zM126 852h1V854h-1zM127 853h1V855h-1zM128 853h1V855h-1zM129 852h1V854h-1zM130 852h1V854h-1zM131 852h1V854h-1zM132 853h1V855h-1zM133 853h1V855h-1zM134 852h1V854h-1zM135 853h1V855h-1zM136 853h1V854h-1zM137 853h1V854h-1zM138 853h1V855h-1zM139 853h1V855h-1zM140 852h1V854h-1zM141 853h1V855h-1zM142 852h1V854h-1zM143 852h1V855h-1zM144 853h1V854h-1zM145 852h1V855h-1zM146 852h1V855h-1zM147 853h1V855h-1zM148 852h1V854h-1zM149 853h1V855h-1zM150 852h1V855h-1zM151 852h1V855h-1zM152 852h1V855h-1zM153 852h1V854h-1zM154 852h1V855h-1zM155 853h1V854h-1zM156 851h1V854h-1zM157 853h1V855h-1zM158 852h1V854h-1zM159 853h1V855h-1zM160 853h1V854h-1zM161 853h1V855h-1zM162 852h1V854h-1zM163 852h1V855h-1zM164 853h1V854h-1zM165 853h1V854h-1zM166 852h1V855h-1zM167 853h1V855h-1zM168 852h1V855h-1zM169 852h1V855h-1zM170 852h1V855h-1zM171 853h1V855h-1zM172 852h1V855h-1zM173 852h1V855h-1zM174 852h1V855h-1zM175 852h1V854h-1zM176 852h1V855h-1zM177 852h1V855h-1zM178 852h1V855h-1zM179 853h1V855h-1zM180 853h1V854h-1zM181 853h1V855h-1zM182 852h1V855h-1zM183 852h1V855h-1zM184 852h1V855h-1zM185 852h1V855h-1zM186 852h1V855h-1zM187 852h1V854h-1zM188 852h1V855h-1zM189 852h1V855h-1zM190 852h1V854h-1zM191 853h1V855h-1zM192 853h1V855h-1zM193 852h1V854h-1zM194 852h1V855h-1zM195 853h1V855h-1zM196 852h1V854h-1zM197 853h1V855h-1zM198 852h1V855h-1zM199 852h1V854h-1zM200 853h1V855h-1zM201 853h1V855h-1zM202 852h1V854h-1zM203 852h1V855h-1zM204 852h1V855h-1zM205 852h1V854h-1zM206 853h1V854h-1zM207 853h1V855h-1zM208 852h1V855h-1zM209 853h1V855h-1zM210 852h1V855h-1zM211 852h1V855h-1zM212 853h1V854h-1zM213 853h1V855h-1zM214 852h1V855h-1zM215 852h1V855h-1zM216 853h1V855h-1zM217 852h1V855h-1zM218 852h1V854h-1zM219 852h1V855h-1zM220 852h1V855h-1zM221 852h1V854h-1zM222 853h1V855h-1zM223 852h1V855h-1zM224 853h1V855h-1zM225 852h1V855h-1zM226 852h1V855h-1zM227 851h1V854h-1zM228 853h1V855h-1zM229 852h1V854h-1zM230 852h1V854h-1zM231 852h1V855h-1zM232 853h1V854h-1zM233 852h1V855h-1zM234 853h1V855h-1zM235 852h1V855h-1zM236 853h1V855h-1zM237 853h1V854h-1zM238 853h1V855h-1zM239 853h1V855h-1zM240 852h1V855h-1zM241 852h1V854h-1zM242 852h1V855h-1zM243 852h1V854h-1zM244 853h1V855h-1zM245 852h1V854h-1zM246 853h1V855h-1zM247 852h1V854h-1zM248 852h1V855h-1zM249 852h1V854h-1zM250 852h1V855h-1zM251 853h1V854h-1zM252 852h1V855h-1zM253 852h1V855h-1zM254 853h1V854h-1zM255 853h1V855h-1zM256 853h1V854h-1zM257 852h1V854h-1zM258 852h1V855h-1zM259 852h1V855h-1zM260 852h1V855h-1zM261 852h1V855h-1zM262 852h1V855h-1zM263 852h1V854h-1zM264 852h1V855h-1zM265 852h1V855h-1zM266 852h1V855h-1zM267 852h1V854h-1zM268 852h1V854h-1zM269 852h1V855h-1zM270 853h1V855h-1zM271 852h1V855h-1zM272 853h1V855h-1zM273 853h1V855h-1zM274 853h1V854h-1zM275 852h1V855h-1zM276 852h1V855h-1zM277 853h1V854h-1zM278 852h1V854h-1zM279 853h1V855h-1zM280 853h1V854h-1zM281 853h1V855h-1zM282 852h1V855h-1zM283 853h1V855h-1zM284 853h1V855h-1zM285 852h1V854h-1zM286 853h1V854h-1zM287 852h1V855h-1zM288 853h1V855h-1zM289 852h1V855h-1zM290 852h1V855h-1zM291 853h1V855h-1zM292 852h1V855h-1zM293 852h1V855h-1zM294 853h1V855h-1zM295 852h1V855h-1zM296 853h1V855h-1zM297 853h1V854h-1zM298 852h1V854h-1zM299 852h1V855h-1zM300 853h1V855h-1zM301 852h1V855h-1zM302 853h1V854h-1zM303 853h1V854h-1zM304 852h1V855h-1zM305 852h1V855h-1zM306 853h1V855h-1zM307 852h1V854h-1zM308 853h1V854h-1zM309 852h1V854h-1zM310 852h1V855h-1zM311 853h1V855h-1zM312 852h1V854h-1zM313 852h1V854h-1zM314 852h1V854h-1zM315 852h1V855h-1zM316 853h1V854h-1zM317 852h1V854h-1zM318 853h1V854h-1zM319 852h1V855h-1zM320 853h1V855h-1zM321 852h1V854h-1zM322 852h1V854h-1zM323 852h1V854h-1zM324 853h1V855h-1zM325 852h1V855h-1zM326 852h1V855h-1zM327 853h1V855h-1zM328 852h1V855h-1zM329 853h1V855h-1zM330 852h1V855h-1zM331 852h1V855h-1zM332 852h1V854h-1zM333 852h1V855h-1zM334 853h1V855h-1zM335 852h1V855h-1zM336 853h1V855h-1zM337 852h1V855h-1zM338 853h1V855h-1zM339 852h1V854h-1zM340 852h1V855h-1zM341 852h1V855h-1zM342 853h1V854h-1zM343 853h1V855h-1zM344 852h1V855h-1zM345 853h1V855h-1zM346 852h1V854h-1zM347 852h1V855h-1zM348 852h1V855h-1zM349 852h1V855h-1zM350 852h1V854h-1zM351 852h1V854h-1zM352 852h1V854h-1zM353 853h1V855h-1zM354 852h1V855h-1zM355 852h1V855h-1zM356 851h1V855h-1zM357 852h1V855h-1zM358 852h1V855h-1zM359 852h1V854h-1zM360 852h1V855h-1zM361 853h1V855h-1zM362 853h1V854h-1zM363 853h1V855h-1zM364 852h1V855h-1zM365 852h1V854h-1zM366 853h1V855h-1zM367 853h1V855h-1zM368 852h1V854h-1zM369 852h1V854h-1zM370 852h1V855h-1zM371 852h1V854h-1zM372 851h1V854h-1zM373 853h1V855h-1zM374 853h1V855h-1zM375 853h1V855h-1zM376 853h1V854h-1zM377 853h1V854h-1zM378 853h1V855h-1zM379 852h1V855h-1zM380 852h1V855h-1zM381 853h1V854h-1zM382 852h1V855h-1zM383 799h1V801h-1zM384 799h1V801h-1zM385 799h1V801h-1zM386 799h1V801h-1zM387 799h1V801h-1zM388 799h1V801h-1zM389 799h1V801h-1zM390 799h1V801h-1zM391 799h1V801h-1zM392 799h1V802h-1zM393 799h1V801h-1zM394 799h1V801h-1zM395 799h1V802h-1zM396 799h1V801h-1zM397 799h1V801h-1zM398 798h1V801h-1zM399 798h1V801h-1zM400 799h1V801h-1zM401 799h1V801h-1zM402 799h1V801h-1zM403 799h1V801h-1zM404 799h1V801h-1zM405 799h1V801h-1zM406 799h1V801h-1zM407 799h1V801h-1zM408 798h1V801h-1zM409 799h1V801h-1zM410 799h1V801h-1zM411 799h1V802h-1zM412 799h1V801h-1zM413 799h1V801h-1zM414 799h1V801h-1zM415 799h1V801h-1zM416 799h1V802h-1zM417 799h1V801h-1zM418 798h1V801h-1zM419 799h1V801h-1zM420 799h1V801h-1zM421 799h1V801h-1zM422 798h1V801h-1zM423 799h1V801h-1zM424 799h1V801h-1zM425 799h1V801h-1zM426 799h1V801h-1zM427 799h1V801h-1zM428 799h1V801h-1zM429 799h1V801h-1zM430 799h1V801h-1zM431 799h1V801h-1zM432 798h1V801h-1zM433 799h1V801h-1zM434 799h1V801h-1zM435 799h1V801h-1zM436 799h1V801h-1zM437 799h1V801h-1zM438 799h1V801h-1zM439 799h1V801h-1zM440 799h1V801h-1zM441 799h1V801h-1zM442 799h1V801h-1zM443 799h1V802h-1zM444 798h1V801h-1zM445 799h1V801h-1zM446 799h1V801h-1zM447 798h1V801h-1zM448 799h1V801h-1zM449 799h1V801h-1zM450 799h1V801h-1zM451 799h1V801h-1zM452 799h1V801h-1zM453 799h1V801h-1zM454 799h1V801h-1zM455 799h1V801h-1zM456 799h1V801h-1zM457 799h1V801h-1zM458 799h1V801h-1zM459 798h1V801h-1zM460 799h1V801h-1zM461 799h1V801h-1zM462 799h1V801h-1zM463 799h1V801h-1zM464 799h1V801h-1zM465 799h1V802h-1zM466 799h1V801h-1zM467 799h1V801h-1zM468 799h1V801h-1zM469 799h1V801h-1zM470 799h1V801h-1zM471 799h1V801h-1zM472 799h1V801h-1zM473 799h1V802h-1zM474 799h1V801h-1zM475 799h1V801h-1zM476 799h1V801h-1zM477 799h1V801h-1zM478 799h1V801h-1zM479 799h1V801h-1zM480 799h1V801h-1zM481 799h1V801h-1zM482 799h1V801h-1zM483 799h1V801h-1zM484 799h1V801h-1zM485 798h1V801h-1zM486 799h1V801h-1zM487 799h1V801h-1zM488 799h1V801h-1zM489 799h1V801h-1zM490 799h1V801h-1zM491 799h1V801h-1zM492 799h1V801h-1zM493 799h1V801h-1zM494 799h1V801h-1zM495 799h1V801h-1zM496 799h1V801h-1zM497 799h1V801h-1zM498 799h1V801h-1zM499 799h1V801h-1zM500 799h1V801h-1zM501 799h1V801h-1zM502 799h1V801h-1zM503 799h1V801h-1zM504 799h1V801h-1zM505 799h1V801h-1zM506 799h1V802h-1zM507 799h1V801h-1zM508 798h1V801h-1zM509 798h1V801h-1zM510 799h1V801h-1zM511 799h1V801h-1zM512 799h1V801h-1zM513 799h1V801h-1zM514 799h1V801h-1zM515 798h1V801h-1zM516 799h1V801h-1zM517 799h1V801h-1zM518 799h1V801h-1zM519 799h1V801h-1zM520 799h1V801h-1zM521 799h1V801h-1zM522 799h1V801h-1zM523 799h1V801h-1zM524 798h1V801h-1zM525 799h1V801h-1zM526 799h1V801h-1zM527 799h1V801h-1zM528 799h1V801h-1zM529 799h1V801h-1zM530 799h1V802h-1zM531 799h1V801h-1zM532 799h1V801h-1zM533 799h1V801h-1zM534 799h1V801h-1zM535 799h1V801h-1zM536 798h1V801h-1zM537 799h1V801h-1zM538 799h1V801h-1zM539 798h1V801h-1zM540 799h1V802h-1zM541 799h1V801h-1zM542 799h1V801h-1zM543 799h1V801h-1zM544 799h1V801h-1zM545 799h1V801h-1zM546 799h1V802h-1zM547 799h1V801h-1zM548 798h1V801h-1zM549 799h1V802h-1zM550 799h1V801h-1zM551 799h1V801h-1zM552 799h1V801h-1zM553 799h1V801h-1zM554 799h1V801h-1zM555 799h1V801h-1zM556 799h1V801h-1zM557 799h1V801h-1zM558 799h1V801h-1zM559 799h1V801h-1zM560 799h1V801h-1zM561 799h1V801h-1zM562 799h1V801h-1zM563 799h1V801h-1zM564 799h1V801h-1zM565 799h1V801h-1zM566 799h1V801h-1zM567 799h1V801h-1zM568 798h1V801h-1zM569 799h1V801h-1zM570 799h1V801h-1zM571 799h1V801h-1zM572 799h1V801h-1zM573 799h1V801h-1zM574 799h1V802h-1zM575 799h1V801h-1zM576 799h1V802h-1zM577 799h1V801h-1zM578 799h1V801h-1zM579 799h1V801h-1zM580 799h1V801h-1zM581 799h1V802h-1zM582 799h1V801h-1zM583 799h1V801h-1zM584 799h1V801h-1zM585 799h1V802h-1zM586 799h1V801h-1zM587 799h1V801h-1zM588 799h1V801h-1zM589 799h1V801h-1zM590 799h1V801h-1zM591 799h1V801h-1zM592 799h1V801h-1zM593 799h1V801h-1zM594 799h1V801h-1zM595 799h1V801h-1zM596 799h1V801h-1zM597 799h1V801h-1zM598 799h1V801h-1zM599 799h1V802h-1zM600 799h1V801h-1zM601 799h1V801h-1zM602 799h1V802h-1zM603 798h1V802h-1zM604 799h1V801h-1zM605 799h1V801h-1zM606 799h1V801h-1zM607 799h1V801h-1zM608 798h1V801h-1zM609 799h1V801h-1zM610 799h1V801h-1zM611 799h1V801h-1zM612 798h1V801h-1zM613 799h1V801h-1zM614 799h1V801h-1zM615 799h1V801h-1zM616 799h1V801h-1zM617 799h1V801h-1zM618 798h1V801h-1zM619 799h1V801h-1zM620 799h1V801h-1zM621 799h1V801h-1zM622 799h1V801h-1zM623 799h1V801h-1zM624 799h1V802h-1zM625 799h1V801h-1zM626 799h1V801h-1zM627 799h1V801h-1zM628 799h1V801h-1zM629 799h1V801h-1zM630 799h1V802h-1zM631 799h1V801h-1zM632 799h1V801h-1zM633 799h1V801h-1zM634 799h1V801h-1zM635 799h1V801h-1zM636 799h1V801h-1zM637 799h1V801h-1zM638 799h1V801h-1zM639 799h1V801h-1zM640 799h1V801h-1zM641 799h1V801h-1zM642 799h1V801h-1zM643 799h1V802h-1zM644 799h1V801h-1zM645 799h1V802h-1zM646 799h1V801h-1zM647 799h1V801h-1zM648 799h1V801h-1zM649 799h1V801h-1zM650 799h1V801h-1zM651 799h1V802h-1zM652 799h1V801h-1zM653 799h1V801h-1zM654 799h1V802h-1zM655 799h1V801h-1zM656 799h1V801h-1zM657 799h1V801h-1zM658 799h1V801h-1zM659 799h1V801h-1zM660 798h1V801h-1zM661 799h1V801h-1zM662 799h1V801h-1zM663 799h1V801h-1zM664 799h1V801h-1zM665 798h1V801h-1zM666 799h1V801h-1zM667 799h1V801h-1zM668 799h1V801h-1zM669 799h1V801h-1zM670 799h1V801h-1zM671 799h1V801h-1zM672 798h1V801h-1zM673 799h1V801h-1zM674 799h1V801h-1zM675 799h1V802h-1zM676 799h1V801h-1zM677 799h1V801h-1zM678 799h1V801h-1zM679 799h1V802h-1zM680 799h1V802h-1zM681 798h1V802h-1zM682 799h1V801h-1zM683 799h1V801h-1zM684 799h1V801h-1zM685 799h1V802h-1zM686 798h1V801h-1zM687 799h1V801h-1zM688 798h1V801h-1zM689 799h1V801h-1zM690 798h1V801h-1zM691 799h1V801h-1zM692 799h1V801h-1zM693 799h1V801h-1zM694 799h1V802h-1zM695 799h1V801h-1zM696 799h1V801h-1zM697 799h1V801h-1zM698 799h1V801h-1zM699 799h1V801h-1zM700 799h1V801h-1zM701 799h1V801h-1zM702 799h1V801h-1zM703 799h1V801h-1zM704 799h1V801h-1zM705 799h1V801h-1zM706 799h1V801h-1zM707 799h1V801h-1zM708 799h1V802h-1zM709 799h1V801h-1zM710 798h1V801h-1zM711 799h1V801h-1zM712 799h1V801h-1zM713 799h1V801h-1zM714 799h1V801h-1zM715 799h1V802h-1zM716 799h1V801h-1zM717 799h1V801h-1zM718 799h1V801h-1zM719 799h1V801h-1zM720 799h1V801h-1zM721 799h1V801h-1zM722 799h1V801h-1zM723 799h1V802h-1zM724 799h1V801h-1zM725 799h1V801h-1zM726 799h1V801h-1zM727 799h1V801h-1zM728 799h1V801h-1zM729 799h1V801h-1zM730 799h1V801h-1zM731 799h1V801h-1zM732 799h1V801h-1zM733 799h1V801h-1zM734 799h1V801h-1zM735 799h1V801h-1zM736 799h1V801h-1zM737 799h1V801h-1zM738 799h1V801h-1zM739 799h1V801h-1zM740 799h1V801h-1zM741 798h1V801h-1zM742 799h1V801h-1zM743 799h1V801h-1zM744 799h1V801h-1zM745 799h1V801h-1zM746 799h1V801h-1zM747 799h1V801h-1zM748 799h1V801h-1zM749 799h1V801h-1zM750 799h1V801h-1zM751 799h1V801h-1zM752 799h1V801h-1zM753 799h1V801h-1zM754 799h1V802h-1zM755 799h1V801h-1zM756 799h1V801h-1zM757 798h1V801h-1zM758 799h1V801h-1zM759 799h1V801h-1zM760 799h1V801h-1zM761 799h1V802h-1zM762 799h1V802h-1zM763 799h1V801h-1zM764 799h1V801h-1zM765 799h1V801h-1zM766 799h1V801h-1zM767 798h1V801h-1zM768 799h1V801h-1zM769 799h1V801h-1zM770 799h1V801h-1zM771 799h1V801h-1zM772 799h1V801h-1zM773 799h1V801h-1zM774 799h1V801h-1zM775 799h1V801h-1zM776 798h1V801h-1zM777 798h1V801h-1zM778 799h1V801h-1zM779 799h1V801h-1zM780 799h1V801h-1zM781 799h1V802h-1zM782 799h1V801h-1zM783 799h1V801h-1zM784 799h1V801h-1zM785 799h1V801h-1zM786 799h1V801h-1zM787 799h1V801h-1zM788 799h1V801h-1zM789 799h1V801h-1zM790 799h1V801h-1zM791 799h1V801h-1zM792 799h1V801h-1zM793 799h1V801h-1zM794 799h1V801h-1zM795 852h1V855h-1zM796 852h1V854h-1zM797 852h1V855h-1zM798 852h1V854h-1zM799 852h1V854h-1zM800 852h1V855h-1zM801 853h1V854h-1zM802 853h1V854h-1zM803 852h1V854h-1zM804 852h1V855h-1zM805 852h1V855h-1zM806 852h1V855h-1zM807 852h1V854h-1zM808 852h1V855h-1zM809 852h1V854h-1zM810 852h1V854h-1zM811 853h1V855h-1zM812 853h1V855h-1zM813 852h1V855h-1zM814 852h1V854h-1zM815 853h1V855h-1zM816 852h1V855h-1zM817 852h1V855h-1zM818 852h1V855h-1zM819 852h1V855h-1zM820 853h1V855h-1zM821 853h1V855h-1zM822 851h1V855h-1zM823 852h1V854h-1zM824 852h1V854h-1zM825 852h1V854h-1zM826 853h1V854h-1zM827 853h1V854h-1zM828 852h1V854h-1zM829 852h1V855h-1zM830 852h1V854h-1zM831 852h1V855h-1zM832 853h1V854h-1zM833 852h1V854h-1zM834 852h1V855h-1zM835 852h1V854h-1zM836 852h1V854h-1zM837 852h1V855h-1zM838 853h1V855h-1zM839 852h1V854h-1zM840 852h1V855h-1zM841 853h1V854h-1zM842 853h1V855h-1zM843 852h1V855h-1zM844 852h1V855h-1zM845 852h1V855h-1zM846 853h1V855h-1zM847 853h1V855h-1zM848 853h1V854h-1zM849 853h1V854h-1zM850 852h1V854h-1zM851 852h1V855h-1zM852 852h1V855h-1zM853 853h1V854h-1zM854 853h1V855h-1zM855 853h1V855h-1zM856 852h1V855h-1zM857 852h1V854h-1zM858 853h1V855h-1zM859 853h1V855h-1zM860 852h1V855h-1zM861 852h1V855h-1zM862 853h1V854h-1zM863 852h1V855h-1zM864 853h1V854h-1zM865 852h1V856h-1zM866 853h1V855h-1zM867 853h1V854h-1zM868 852h1V854h-1zM869 853h1V855h-1zM870 852h1V855h-1zM871 852h1V854h-1zM872 853h1V855h-1zM873 852h1V855h-1zM874 852h1V855h-1zM875 852h1V854h-1zM876 853h1V855h-1zM877 853h1V854h-1zM878 853h1V855h-1zM879 852h1V855h-1zM880 852h1V855h-1zM881 852h1V854h-1zM882 853h1V855h-1zM883 853h1V855h-1zM884 853h1V855h-1zM885 852h1V854h-1zM886 852h1V855h-1zM887 852h1V855h-1zM888 852h1V855h-1zM889 853h1V855h-1zM890 852h1V854h-1zM891 852h1V855h-1zM892 852h1V855h-1zM893 852h1V855h-1zM894 853h1V854h-1zM895 852h1V855h-1zM896 852h1V855h-1zM897 853h1V855h-1zM898 852h1V854h-1zM899 853h1V855h-1zM900 852h1V855h-1zM901 853h1V855h-1zM902 853h1V854h-1zM903 852h1V855h-1zM904 852h1V854h-1zM905 852h1V855h-1zM906 852h1V854h-1zM907 852h1V855h-1zM908 853h1V854h-1zM909 852h1V855h-1zM910 853h1V855h-1zM911 853h1V854h-1zM912 852h1V854h-1zM913 852h1V855h-1zM914 852h1V855h-1zM915 852h1V854h-1zM916 852h1V855h-1zM917 853h1V854h-1zM918 852h1V855h-1zM919 853h1V855h-1zM920 853h1V854h-1zM921 852h1V855h-1zM922 853h1V855h-1zM923 853h1V855h-1zM924 853h1V854h-1zM925 852h1V855h-1zM926 852h1V855h-1zM927 852h1V854h-1zM928 852h1V855h-1zM929 852h1V854h-1zM930 852h1V854h-1zM931 852h1V855h-1zM932 853h1V855h-1zM933 853h1V855h-1zM934 853h1V855h-1zM935 852h1V854h-1zM936 852h1V855h-1zM937 853h1V854h-1zM938 852h1V855h-1zM939 853h1V854h-1zM940 852h1V855h-1zM941 853h1V854h-1zM942 853h1V855h-1zM943 853h1V854h-1zM944 852h1V854h-1zM945 852h1V855h-1zM946 852h1V854h-1zM947 853h1V855h-1zM948 853h1V854h-1zM949 852h1V854h-1zM950 852h1V854h-1zM951 853h1V854h-1zM952 852h1V854h-1zM953 852h1V854h-1zM954 852h1V855h-1zM955 852h1V854h-1zM956 852h1V855h-1zM957 853h1V855h-1zM958 852h1V854h-1zM959 852h1V854h-1zM960 853h1V855h-1zM961 852h1V854h-1zM962 852h1V855h-1zM963 853h1V855h-1zM964 851h1V854h-1zM965 853h1V855h-1zM966 852h1V854h-1zM967 852h1V854h-1zM968 852h1V854h-1zM969 853h1V855h-1zM970 853h1V855h-1zM971 852h1V854h-1zM972 852h1V855h-1zM973 853h1V855h-1zM974 852h1V855h-1zM975 852h1V855h-1zM976 852h1V855h-1zM977 852h1V854h-1zM978 852h1V854h-1zM979 851h1V855h-1zM980 853h1V855h-1zM981 853h1V855h-1zM982 853h1V855h-1zM983 852h1V855h-1zM984 852h1V855h-1zM985 853h1V854h-1zM986 852h1V855h-1zM987 851h1V855h-1zM988 852h1V854h-1zM989 852h1V854h-1zM990 852h1V854h-1zM991 852h1V855h-1zM992 852h1V854h-1zM993 853h1V854h-1zM994 853h1V854h-1zM995 852h1V855h-1zM996 852h1V855h-1zM997 852h1V855h-1zM998 852h1V855h-1zM999 852h1V854h-1zM1000 853h1V855h-1zM1001 853h1V854h-1zM1002 852h1V855h-1zM1003 852h1V854h-1zM1004 852h1V855h-1zM1005 852h1V855h-1zM1006 852h1V854h-1zM1007 852h1V855h-1zM1008 852h1V854h-1zM1009 853h1V855h-1zM1010 852h1V855h-1zM1011 852h1V855h-1zM1012 852h1V855h-1zM1013 852h1V856h-1zM1014 852h1V854h-1zM1015 852h1V855h-1zM1016 853h1V854h-1zM1017 852h1V854h-1zM1018 853h1V854h-1zM1019 852h1V855h-1zM1020 852h1V854h-1zM1021 852h1V854h-1zM1022 851h1V855h-1zM1023 852h1V854h-1zM1024 852h1V855h-1zM1025 852h1V855h-1zM1026 852h1V854h-1zM1027 853h1V854h-1zM1028 852h1V855h-1zM1029 853h1V855h-1zM1030 852h1V855h-1zM1031 852h1V855h-1zM1032 852h1V854h-1zM1033 853h1V855h-1zM1034 852h1V854h-1zM1035 852h1V854h-1zM1036 852h1V855h-1zM1037 852h1V855h-1zM1038 853h1V854h-1zM1039 853h1V855h-1zM1040 852h1V855h-1zM1041 852h1V855h-1zM1042 852h1V855h-1zM1043 853h1V854h-1zM1044 853h1V854h-1zM1045 852h1V855h-1zM1046 852h1V854h-1zM1047 852h1V854h-1zM1048 852h1V854h-1zM1049 853h1V854h-1zM1050 852h1V854h-1zM1051 852h1V855h-1zM1052 852h1V854h-1zM1053 852h1V855h-1zM1054 853h1V854h-1zM1055 852h1V854h-1zM1056 853h1V854h-1zM1057 853h1V855h-1zM1058 853h1V854h-1zM1059 853h1V855h-1zM1060 853h1V854h-1zM1061 853h1V855h-1zM1062 853h1V854h-1zM1063 852h1V854h-1zM1064 852h1V855h-1zM1065 852h1V855h-1zM1066 852h1V855h-1zM1067 852h1V855h-1zM1068 853h1V854h-1zM1069 853h1V854h-1zM1070 852h1V855h-1zM1071 852h1V855h-1zM1072 853h1V854h-1zM1073 852h1V855h-1zM1074 852h1V854h-1zM1075 852h1V855h-1zM1076 853h1V854h-1zM1077 853h1V855h-1zM1078 853h1V855h-1zM1079 853h1V855h-1zM1080 852h1V855h-1zM1081 853h1V855h-1zM1082 853h1V854h-1zM1083 852h1V855h-1zM1084 853h1V855h-1zM1085 852h1V854h-1zM1086 852h1V855h-1zM1087 852h1V854h-1zM1088 852h1V854h-1zM1089 853h1V854h-1zM1090 852h1V854h-1zM1091 852h1V855h-1zM1092 853h1V854h-1zM1093 852h1V855h-1zM1094 853h1V855h-1zM1095 853h1V855h-1zM1096 852h1V855h-1zM1097 853h1V855h-1zM1098 852h1V855h-1zM1099 852h1V855h-1zM1100 852h1V854h-1zM1101 852h1V855h-1zM1102 852h1V854h-1zM1103 852h1V855h-1zM1104 852h1V855h-1zM1105 853h1V855h-1zM1106 852h1V855h-1zM1107 852h1V855h-1zM1108 853h1V855h-1zM1109 853h1V854h-1zM1110 852h1V855h-1zM1111 853h1V854h-1zM1112 852h1V854h-1zM1113 852h1V855h-1zM1114 852h1V854h-1zM1115 852h1V855h-1zM1116 853h1V855h-1zM1117 853h1V854h-1zM1118 852h1V855h-1zM1119 853h1V855h-1zM1120 853h1V855h-1zM1121 853h1V855h-1zM1122 852h1V855h-1zM1123 852h1V855h-1zM1124 853h1V855h-1zM1125 852h1V854h-1zM1126 852h1V855h-1zM1127 853h1V855h-1zM1128 852h1V854h-1zM1129 853h1V855h-1zM1130 852h1V855h-1zM1131 853h1V854h-1zM1132 853h1V854h-1zM1133 852h1V855h-1zM1134 852h1V854h-1zM1135 852h1V855h-1zM1136 852h1V854h-1zM1137 852h1V855h-1zM1138 853h1V855h-1zM1139 852h1V855h-1zM1140 852h1V854h-1zM1141 852h1V855h-1zM1142 853h1V855h-1zM1143 852h1V854h-1zM1144 853h1V854h-1zM1145 853h1V854h-1zM1146 853h1V855h-1zM1147 853h1V855h-1zM1148 853h1V855h-1zM1149 853h1V854h-1zM1150 853h1V854h-1zM1151 853h1V854h-1zM1152 852h1V854h-1zM1153 852h1V855h-1zM1154 853h1V855h-1zM1155 852h1V854h-1zM1156 853h1V854h-1zM1157 852h1V855h-1zM1158 852h1V855h-1zM1159 852h1V854h-1zM1160 852h1V855h-1zM1161 852h1V855h-1zM1162 852h1V855h-1zM1163 852h1V855h-1zM1164 852h1V854h-1zM1165 852h1V854h-1zM1166 852h1V854h-1zM1167 852h1V855h-1zM1168 852h1V855h-1zM1169 852h1V854h-1zM1170 853h1V855h-1zM1171 853h1V854h-1zM1172 853h1V854h-1zM1173 852h1V855h-1zM1174 852h1V855h-1zM1175 853h1V854h-1zM1176 852h1V855h-1zM1177 852h1V855h-1zM1178 851h1V855h-1zM1179 853h1V855h-1zM1180 852h1V855h-1zM1181 852h1V854h-1zM1182 852h1V855h-1zM1183 853h1V855h-1zM1184 853h1V855h-1zM1185 852h1V855h-1zM1186 853h1V855h-1zM1187 852h1V855h-1zM1188 852h1V854h-1zM1189 852h1V854h-1zM1190 853h1V855h-1zM1191 852h1V855h-1zM1192 852h1V855h-1zM1193 853h1V855h-1zM1194 853h1V854h-1zM1195 853h1V855h-1zM1196 852h1V855h-1zM1197 853h1V854h-1zM1198 852h1V855h-1zM1199 852h1V854h-1zM1200 852h1V855h-1zM1201 853h1V855h-1zM1202 853h1V855h-1zM1203 852h1V854h-1zM1204 852h1V855h-1zM1205 853h1V854h-1zM1206 852h1V854h-1zM1207 853h1V854h-1zM1208 852h1V855h-1zM1209 853h1V855h-1zM1210 852h1V854h-1zM1211 852h1V854h-1zM1212 853h1V855h-1zM1213 853h1V855h-1zM1214 852h1V855h-1zM1215 853h1V855h-1zM1216 853h1V855h-1zM1217 853h1V855h-1zM1218 853h1V855h-1zM1219 851h1V854h-1zM1220 852h1V855h-1zM1221 853h1V855h-1zM1222 853h1V854h-1zM1223 852h1V855h-1zM1224 853h1V854h-1zM1225 853h1V855h-1zM1226 852h1V855h-1zM1227 853h1V855h-1zM1228 852h1V854h-1zM1229 853h1V855h-1zM1230 852h1V854h-1zM1231 852h1V855h-1zM1232 799h1V801h-1zM1233 799h1V801h-1zM1234 798h1V801h-1zM1235 799h1V801h-1zM1236 799h1V801h-1zM1237 799h1V801h-1zM1238 798h1V801h-1zM1239 799h1V802h-1zM1240 799h1V801h-1zM1241 799h1V801h-1zM1242 799h1V801h-1zM1243 798h1V801h-1zM1244 799h1V801h-1zM1245 799h1V801h-1zM1246 798h1V801h-1zM1247 799h1V801h-1zM1248 798h1V801h-1zM1249 799h1V801h-1zM1250 799h1V801h-1zM1251 799h1V801h-1zM1252 799h1V801h-1zM1253 799h1V802h-1zM1254 799h1V801h-1zM1255 799h1V801h-1zM1256 799h1V801h-1zM1257 799h1V801h-1zM1258 799h1V801h-1zM1259 799h1V801h-1zM1260 799h1V801h-1zM1261 799h1V801h-1zM1262 799h1V802h-1zM1263 799h1V801h-1zM1264 798h1V801h-1zM1265 799h1V801h-1zM1266 799h1V801h-1zM1267 799h1V802h-1zM1268 799h1V801h-1zM1269 799h1V801h-1zM1270 799h1V801h-1zM1271 799h1V801h-1zM1272 799h1V801h-1zM1273 799h1V801h-1zM1274 799h1V801h-1zM1275 799h1V801h-1zM1276 799h1V801h-1zM1277 799h1V801h-1zM1278 798h1V801h-1zM1279 799h1V801h-1zM1280 798h1V801h-1zM1281 799h1V801h-1zM1282 799h1V802h-1zM1283 799h1V801h-1zM1284 799h1V801h-1zM1285 799h1V801h-1zM1286 799h1V802h-1zM1287 799h1V801h-1zM1288 799h1V802h-1zM1289 799h1V801h-1zM1290 799h1V801h-1zM1291 799h1V801h-1zM1292 799h1V801h-1zM1293 799h1V802h-1zM1294 799h1V801h-1zM1295 799h1V801h-1zM1296 799h1V801h-1zM1297 799h1V801h-1zM1298 799h1V801h-1zM1299 799h1V801h-1zM1300 799h1V801h-1zM1301 799h1V802h-1zM1302 799h1V802h-1zM1303 799h1V801h-1zM1304 798h1V801h-1zM1305 799h1V801h-1zM1306 799h1V801h-1zM1307 799h1V801h-1zM1308 799h1V801h-1zM1309 799h1V802h-1zM1310 799h1V801h-1zM1311 799h1V801h-1zM1312 799h1V801h-1zM1313 799h1V802h-1zM1314 799h1V801h-1zM1315 799h1V801h-1zM1316 799h1V801h-1zM1317 799h1V801h-1zM1318 799h1V801h-1zM1319 799h1V801h-1zM1320 799h1V801h-1zM1321 799h1V801h-1zM1322 798h1V801h-1zM1323 799h1V801h-1zM1324 799h1V801h-1zM1325 799h1V801h-1zM1326 799h1V802h-1zM1327 798h1V801h-1zM1328 799h1V801h-1zM1329 799h1V801h-1zM1330 799h1V801h-1zM1331 799h1V801h-1zM1332 799h1V801h-1zM1333 799h1V802h-1zM1334 799h1V801h-1zM1335 799h1V801h-1zM1336 799h1V801h-1zM1337 799h1V801h-1zM1338 799h1V801h-1zM1339 799h1V801h-1zM1340 799h1V801h-1zM1341 799h1V801h-1zM1342 799h1V801h-1zM1343 799h1V801h-1zM1344 799h1V801h-1zM1345 798h1V801h-1zM1346 799h1V801h-1zM1347 799h1V802h-1zM1348 799h1V801h-1zM1349 799h1V801h-1zM1350 799h1V801h-1zM1351 799h1V801h-1zM1352 799h1V801h-1zM1353 799h1V801h-1zM1354 799h1V801h-1zM1355 799h1V801h-1zM1356 799h1V801h-1zM1357 799h1V801h-1zM1358 799h1V801h-1zM1359 799h1V801h-1zM1360 798h1V802h-1zM1361 799h1V801h-1zM1362 799h1V801h-1zM1363 799h1V801h-1zM1364 799h1V801h-1zM1365 799h1V801h-1zM1366 799h1V801h-1zM1367 799h1V801h-1zM1368 799h1V801h-1zM1369 799h1V801h-1zM1370 799h1V801h-1zM1371 799h1V801h-1zM1372 799h1V801h-1zM1373 799h1V801h-1zM1374 799h1V801h-1zM1375 799h1V802h-1zM1376 799h1V801h-1zM1377 799h1V801h-1zM1378 799h1V801h-1zM1379 799h1V801h-1zM1380 799h1V802h-1zM1381 799h1V801h-1zM1382 799h1V801h-1zM1383 799h1V801h-1zM1384 799h1V801h-1zM1385 799h1V801h-1zM1386 799h1V801h-1zM1387 799h1V801h-1zM1388 799h1V801h-1zM1389 799h1V801h-1zM1390 799h1V801h-1zM1391 799h1V801h-1zM1392 799h1V801h-1zM1393 799h1V801h-1zM1394 799h1V801h-1zM1395 798h1V801h-1zM1396 799h1V801h-1zM1397 799h1V801h-1zM1398 799h1V801h-1zM1399 799h1V801h-1zM1400 799h1V801h-1zM1401 799h1V801h-1zM1402 798h1V801h-1zM1403 798h1V801h-1zM1404 799h1V801h-1zM1405 798h1V801h-1zM1406 799h1V802h-1zM1407 799h1V801h-1zM1408 799h1V801h-1zM1409 799h1V801h-1zM1410 799h1V801h-1zM1411 799h1V801h-1zM1412 799h1V801h-1zM1413 799h1V801h-1zM1414 799h1V801h-1zM1415 799h1V802h-1zM1416 799h1V801h-1zM1417 798h1V801h-1zM1418 799h1V801h-1zM1419 799h1V802h-1zM1420 799h1V801h-1zM1421 799h1V801h-1zM1422 799h1V801h-1zM1423 799h1V801h-1zM1424 799h1V801h-1zM1425 799h1V801h-1zM1426 799h1V801h-1zM1427 799h1V801h-1zM1428 798h1V801h-1zM1429 799h1V801h-1zM1430 799h1V802h-1zM1431 799h1V802h-1zM1432 799h1V802h-1zM1433 799h1V802h-1zM1434 798h1V801h-1zM1435 799h1V801h-1zM1436 798h1V801h-1zM1437 799h1V801h-1zM1438 799h1V801h-1zM1439 799h1V801h-1zM1440 799h1V802h-1zM1441 798h1V802h-1zM1442 799h1V801h-1zM1443 799h1V802h-1zM1444 799h1V801h-1zM1445 799h1V801h-1zM1446 799h1V801h-1zM1447 799h1V801h-1zM1448 799h1V801h-1zM1449 798h1V801h-1zM1450 799h1V801h-1zM1451 798h1V801h-1zM1452 799h1V801h-1zM1453 799h1V801h-1zM1454 799h1V801h-1zM1455 799h1V802h-1zM1456 799h1V801h-1zM1457 799h1V801h-1zM1458 799h1V801h-1zM1459 799h1V801h-1zM1460 799h1V801h-1zM1461 799h1V801h-1zM1462 799h1V801h-1zM1463 799h1V801h-1zM1464 799h1V801h-1zM1465 799h1V801h-1zM1466 799h1V801h-1zM1467 799h1V801h-1zM1468 799h1V801h-1zM1469 799h1V801h-1zM1470 799h1V802h-1zM1471 799h1V801h-1zM1472 799h1V801h-1zM1473 798h1V801h-1zM1474 799h1V801h-1zM1475 799h1V801h-1zM1476 799h1V801h-1zM1477 799h1V801h-1zM1478 799h1V801h-1zM1479 799h1V801h-1zM1480 799h1V801h-1zM1481 799h1V801h-1zM1482 799h1V801h-1zM1483 799h1V801h-1zM1484 799h1V801h-1zM1485 799h1V801h-1zM1486 799h1V801h-1zM1487 799h1V801h-1zM1488 799h1V801h-1zM1489 799h1V801h-1zM1490 799h1V801h-1zM1491 799h1V801h-1zM1492 799h1V801h-1zM1493 798h1V801h-1zM1494 799h1V801h-1zM1495 799h1V801h-1zM1496 799h1V801h-1zM1497 799h1V801h-1zM1498 799h1V801h-1zM1499 799h1V801h-1zM1500 799h1V801h-1zM1501 799h1V801h-1zM1502 798h1V801h-1zM1503 799h1V802h-1zM1504 799h1V801h-1zM1505 799h1V801h-1zM1506 799h1V801h-1zM1507 799h1V801h-1zM1508 798h1V801h-1zM1509 799h1V801h-1zM1510 799h1V802h-1zM1511 799h1V801h-1zM1512 799h1V801h-1zM1513 799h1V801h-1zM1514 799h1V801h-1zM1515 799h1V801h-1zM1516 799h1V801h-1zM1517 799h1V801h-1zM1518 799h1V801h-1zM1519 799h1V801h-1zM1520 799h1V801h-1zM1521 799h1V801h-1zM1522 799h1V801h-1zM1523 799h1V801h-1zM1524 799h1V801h-1zM1525 799h1V801h-1zM1526 799h1V801h-1zM1527 798h1V801h-1zM1528 799h1V801h-1zM1529 799h1V801h-1zM1530 799h1V801h-1zM1531 798h1V801h-1zM1532 799h1V801h-1zM1533 799h1V801h-1zM1534 799h1V801h-1zM1535 799h1V801h-1zM1536 799h1V801h-1zM1537 799h1V801h-1zM1538 799h1V801h-1zM1539 799h1V801h-1zM1540 799h1V801h-1zM1541 799h1V801h-1zM1542 799h1V801h-1zM1543 799h1V801h-1zM1544 799h1V801h-1zM1545 799h1V801h-1zM1546 799h1V801h-1zM1547 799h1V801h-1zM1548 798h1V801h-1zM1549 798h1V801h-1zM1550 799h1V801h-1zM1551 799h1V801h-1zM1552 799h1V801h-1zM1553 799h1V801h-1zM1554 799h1V801h-1zM1555 799h1V801h-1zM1556 799h1V801h-1zM1557 799h1V801h-1zM1558 798h1V801h-1zM1559 799h1V801h-1zM1560 799h1V801h-1zM1561 799h1V801h-1zM1562 799h1V801h-1zM1563 799h1V801h-1zM1564 799h1V801h-1zM1565 799h1V801h-1zM1566 799h1V802h-1zM1567 799h1V802h-1zM1568 799h1V801h-1zM1569 799h1V801h-1zM1570 799h1V802h-1zM1571 799h1V801h-1zM1572 799h1V801h-1zM1573 799h1V801h-1zM1574 799h1V801h-1zM1575 799h1V801h-1zM1576 799h1V802h-1zM1577 799h1V801h-1zM1578 799h1V801h-1zM1579 799h1V801h-1zM1580 799h1V801h-1zM1581 799h1V801h-1zM1582 798h1V801h-1zM1583 799h1V801h-1zM1584 799h1V801h-1zM1585 799h1V801h-1zM1586 799h1V801h-1zM1587 799h1V801h-1zM1588 799h1V801h-1zM1589 799h1V801h-1zM1590 799h1V801h-1zM1591 799h1V801h-1zM1592 799h1V801h-1zM1593 799h1V801h-1zM1594 799h1V801h-1zM1595 799h1V802h-1zM1596 799h1V801h-1zM1597 798h1V801h-1zM1598 799h1V801h-1zM1599 799h1V802h-1zM1600 799h1V801h-1zM1601 799h1V801h-1zM1602 799h1V801h-1zM1603 799h1V802h-1zM1604 799h1V802h-1zM1605 799h1V801h-1zM1606 799h1V801h-1zM1607 799h1V801h-1zM1608 799h1V801h-1zM1609 799h1V801h-1zM1610 799h1V801h-1zM1611 798h1V801h-1zM1612 799h1V802h-1zM1613 799h1V802h-1zM1614 799h1V801h-1zM1615 799h1V801h-1zM1616 799h1V801h-1zM1617 799h1V801h-1zM1618 799h1V801h-1zM1619 799h1V801h-1zM1620 799h1V802h-1zM1621 799h1V802h-1zM1622 799h1V801h-1zM1623 799h1V801h-1zM1624 799h1V801h-1zM1625 799h1V801h-1zM1626 799h1V802h-1zM1627 799h1V801h-1zM1628 798h1V801h-1zM1629 799h1V802h-1zM1630 799h1V801h-1zM1631 799h1V801h-1zM1632 798h1V801h-1zM1633 799h1V801h-1zM1634 799h1V801h-1zM1635 799h1V801h-1zM1636 799h1V801h-1zM1637 799h1V801h-1zM1638 799h1V801h-1zM1639 799h1V801h-1zM1640 799h1V801h-1zM1641 799h1V801h-1zM1642 799h1V801h-1zM1643 799h1V801h-1zM1644 799h1V801h-1zM1645 852h1V855h-1zM1646 853h1V855h-1zM1647 853h1V855h-1zM1648 853h1V854h-1zM1649 853h1V854h-1zM1650 852h1V854h-1zM1651 852h1V855h-1zM1652 852h1V854h-1zM1653 853h1V855h-1zM1654 853h1V855h-1zM1655 852h1V856h-1zM1656 853h1V855h-1zM1657 852h1V854h-1zM1658 852h1V855h-1zM1659 852h1V854h-1zM1660 852h1V854h-1zM1661 852h1V855h-1zM1662 853h1V855h-1zM1663 853h1V854h-1zM1664 852h1V854h-1zM1665 852h1V855h-1zM1666 853h1V855h-1zM1667 852h1V855h-1zM1668 852h1V855h-1zM1669 853h1V854h-1zM1670 853h1V855h-1zM1671 852h1V855h-1zM1672 852h1V855h-1zM1673 852h1V854h-1zM1674 852h1V855h-1zM1675 852h1V855h-1zM1676 852h1V854h-1zM1677 852h1V855h-1zM1678 852h1V855h-1zM1679 852h1V854h-1zM1680 852h1V855h-1zM1681 853h1V855h-1zM1682 852h1V854h-1zM1683 852h1V854h-1zM1684 852h1V854h-1zM1685 852h1V854h-1zM1686 852h1V855h-1zM1687 853h1V854h-1zM1688 852h1V854h-1zM1689 852h1V855h-1zM1690 852h1V855h-1zM1691 852h1V855h-1zM1692 853h1V855h-1zM1693 852h1V855h-1zM1694 852h1V855h-1zM1695 853h1V855h-1zM1696 853h1V855h-1zM1697 853h1V855h-1zM1698 852h1V855h-1zM1699 852h1V854h-1zM1700 852h1V854h-1zM1701 852h1V854h-1zM1702 852h1V855h-1zM1703 852h1V855h-1zM1704 852h1V854h-1zM1705 853h1V855h-1zM1706 853h1V855h-1zM1707 853h1V855h-1zM1708 852h1V855h-1zM1709 852h1V855h-1zM1710 853h1V854h-1z" fill="#86c232"/>
</g>
</svg>
<div class="t" style="left:1666.04px;top:90.35px;font-size:14px;line-height:14px;color:#e3d636;text-shadow:0 0 1px #000,0 0 2px #000,0 0 3px #000;-webkit-text-stroke:0.2px #e3d636;">15.4 V</div>
<div class="t" style="left:1666.04px;top:112.35px;font-size:14px;line-height:14px;color:#e3d636;text-shadow:0 0 1px #000,0 0 2px #000,0 0 3px #000;-webkit-text-stroke:0.2px #e3d636;">13.2 V</div>
<div class="t" style="left:1678.71px;top:134.35px;font-size:14px;line-height:14px;color:#e3d636;text-shadow:0 0 1px #000,0 0 2px #000,0 0 3px #000;-webkit-text-stroke:0.2px #e3d636;">11 V</div>
<div class="t" style="left:1673.81px;top:156.35px;font-size:14px;line-height:14px;color:#e3d636;text-shadow:0 0 1px #000,0 0 2px #000,0 0 3px #000;-webkit-text-stroke:0.2px #e3d636;">8.8 V</div>
<div class="t" style="left:1673.81px;top:178.35px;font-size:14px;line-height:14px;color:#e3d636;text-shadow:0 0 1px #000,0 0 2px #000,0 0 3px #000;-webkit-text-stroke:0.2px #e3d636;">6.6 V</div>
<div class="t" style="left:1673.81px;top:200.35px;font-size:14px;line-height:14px;color:#e3d636;text-shadow:0 0 1px #000,0 0 2px #000,0 0 3px #000;-webkit-text-stroke:0.2px #e3d636;">4.4 V</div>
<div class="t" style="left:1673.81px;top:222.35px;font-size:14px;line-height:14px;color:#e3d636;text-shadow:0 0 1px #000,0 0 2px #000,0 0 3px #000;-webkit-text-stroke:0.2px #e3d636;">2.2 V</div>
<div class="t" style="left:1685.50px;top:244.35px;font-size:14px;line-height:14px;color:#e3d636;text-shadow:0 0 1px #000,0 0 2px #000,0 0 3px #000;-webkit-text-stroke:0.2px #e3d636;">0 V</div>
<div class="t" style="left:1669.12px;top:266.35px;font-size:14px;line-height:14px;color:#e3d636;text-shadow:0 0 1px #000,0 0 2px #000,0 0 3px #000;-webkit-text-stroke:0.2px #e3d636;">-2.2 V</div>
<div class="t" style="left:1666.04px;top:312.35px;font-size:14px;line-height:14px;color:#1fb9c9;text-shadow:0 0 1px #000,0 0 2px #000,0 0 3px #000;-webkit-text-stroke:0.2px #1fb9c9;">14.7 V</div>
<div class="t" style="left:1666.04px;top:334.35px;font-size:14px;line-height:14px;color:#1fb9c9;text-shadow:0 0 1px #000,0 0 2px #000,0 0 3px #000;-webkit-text-stroke:0.2px #1fb9c9;">12.6 V</div>
<div class="t" style="left:1666.04px;top:356.35px;font-size:14px;line-height:14px;color:#1fb9c9;text-shadow:0 0 1px #000,0 0 2px #000,0 0 3px #000;-webkit-text-stroke:0.2px #1fb9c9;">10.5 V</div>
<div class="t" style="left:1673.81px;top:378.35px;font-size:14px;line-height:14px;color:#1fb9c9;text-shadow:0 0 1px #000,0 0 2px #000,0 0 3px #000;-webkit-text-stroke:0.2px #1fb9c9;">8.4 V</div>
<div class="t" style="left:1673.81px;top:400.35px;font-size:14px;line-height:14px;color:#1fb9c9;text-shadow:0 0 1px #000,0 0 2px #000,0 0 3px #000;-webkit-text-stroke:0.2px #1fb9c9;">6.3 V</div>
<div class="t" style="left:1673.81px;top:422.35px;font-size:14px;line-height:14px;color:#1fb9c9;text-shadow:0 0 1px #000,0 0 2px #000,0 0 3px #000;-webkit-text-stroke:0.2px #1fb9c9;">4.2 V</div>
<div class="t" style="left:1673.81px;top:444.35px;font-size:14px;line-height:14px;color:#1fb9c9;text-shadow:0 0 1px #000,0 0 2px #000,0 0 3px #000;-webkit-text-stroke:0.2px #1fb9c9;">2.1 V</div>
<div class="t" style="left:1685.50px;top:466.35px;font-size:14px;line-height:14px;color:#1fb9c9;text-shadow:0 0 1px #000,0 0 2px #000,0 0 3px #000;-webkit-text-stroke:0.2px #1fb9c9;">0 V</div>
<div class="t" style="left:1669.12px;top:488.35px;font-size:14px;line-height:14px;color:#1fb9c9;text-shadow:0 0 1px #000,0 0 2px #000,0 0 3px #000;-webkit-text-stroke:0.2px #1fb9c9;">-2.1 V</div>
<div class="t" style="left:1685.50px;top:535.35px;font-size:14px;line-height:14px;color:#e2475f;text-shadow:0 0 1px #000,0 0 2px #000,0 0 3px #000;-webkit-text-stroke:0.2px #e2475f;">8 V</div>
<div class="t" style="left:1685.50px;top:557.35px;font-size:14px;line-height:14px;color:#e2475f;text-shadow:0 0 1px #000,0 0 2px #000,0 0 3px #000;-webkit-text-stroke:0.2px #e2475f;">6 V</div>
<div class="t" style="left:1685.50px;top:579.35px;font-size:14px;line-height:14px;color:#e2475f;text-shadow:0 0 1px #000,0 0 2px #000,0 0 3px #000;-webkit-text-stroke:0.2px #e2475f;">4 V</div>
<div class="t" style="left:1685.50px;top:601.35px;font-size:14px;line-height:14px;color:#e2475f;text-shadow:0 0 1px #000,0 0 2px #000,0 0 3px #000;-webkit-text-stroke:0.2px #e2475f;">2 V</div>
<div class="t" style="left:1685.50px;top:623.35px;font-size:14px;line-height:14px;color:#e2475f;text-shadow:0 0 1px #000,0 0 2px #000,0 0 3px #000;-webkit-text-stroke:0.2px #e2475f;">0 V</div>
<div class="t" style="left:1680.81px;top:645.35px;font-size:14px;line-height:14px;color:#e2475f;text-shadow:0 0 1px #000,0 0 2px #000,0 0 3px #000;-webkit-text-stroke:0.2px #e2475f;">-2 V</div>
<div class="t" style="left:1680.81px;top:667.35px;font-size:14px;line-height:14px;color:#e2475f;text-shadow:0 0 1px #000,0 0 2px #000,0 0 3px #000;-webkit-text-stroke:0.2px #e2475f;">-4 V</div>
<div class="t" style="left:1680.81px;top:689.35px;font-size:14px;line-height:14px;color:#e2475f;text-shadow:0 0 1px #000,0 0 2px #000,0 0 3px #000;-webkit-text-stroke:0.2px #e2475f;">-6 V</div>
<div class="t" style="left:1685.50px;top:757.35px;font-size:14px;line-height:14px;color:#8cc43c;text-shadow:0 0 1px #000,0 0 2px #000,0 0 3px #000;-webkit-text-stroke:0.2px #8cc43c;">8 V</div>
<div class="t" style="left:1685.50px;top:779.35px;font-size:14px;line-height:14px;color:#8cc43c;text-shadow:0 0 1px #000,0 0 2px #000,0 0 3px #000;-webkit-text-stroke:0.2px #8cc43c;">6 V</div>
<div class="t" style="left:1685.50px;top:802.35px;font-size:14px;line-height:14px;color:#8cc43c;text-shadow:0 0 1px #000,0 0 2px #000,0 0 3px #000;-webkit-text-stroke:0.2px #8cc43c;">4 V</div>
<div class="t" style="left:1685.50px;top:824.35px;font-size:14px;line-height:14px;color:#8cc43c;text-shadow:0 0 1px #000,0 0 2px #000,0 0 3px #000;-webkit-text-stroke:0.2px #8cc43c;">2 V</div>
<div class="t" style="left:1685.50px;top:846.35px;font-size:14px;line-height:14px;color:#8cc43c;text-shadow:0 0 1px #000,0 0 2px #000,0 0 3px #000;-webkit-text-stroke:0.2px #8cc43c;">0 V</div>
<div class="t" style="left:1680.81px;top:868.35px;font-size:14px;line-height:14px;color:#8cc43c;text-shadow:0 0 1px #000,0 0 2px #000,0 0 3px #000;-webkit-text-stroke:0.2px #8cc43c;">-2 V</div>
<div class="t" style="left:1680.81px;top:890.35px;font-size:14px;line-height:14px;color:#8cc43c;text-shadow:0 0 1px #000,0 0 2px #000,0 0 3px #000;-webkit-text-stroke:0.2px #8cc43c;">-4 V</div>
<div class="t" style="left:1680.81px;top:913.35px;font-size:14px;line-height:14px;color:#8cc43c;text-shadow:0 0 1px #000,0 0 2px #000,0 0 3px #000;-webkit-text-stroke:0.2px #8cc43c;">-6 V</div>
<div class="t" style="left:1680.81px;top:935.35px;font-size:14px;line-height:14px;color:#8cc43c;text-shadow:0 0 1px #000,0 0 2px #000,0 0 3px #000;-webkit-text-stroke:0.2px #8cc43c;">-8 V</div>
<div class="t" style="left:112.90px;top:722.15px;font-size:14px;line-height:14px;color:#a9a9a9;text-shadow:0 0 1px #000,0 0 2px #000,0 0 3px #000;-webkit-text-stroke:0.2px #a9a9a9;">-80 μs</div>
<div class="t" style="left:282.90px;top:722.15px;font-size:14px;line-height:14px;color:#a9a9a9;text-shadow:0 0 1px #000,0 0 2px #000,0 0 3px #000;-webkit-text-stroke:0.2px #a9a9a9;">-60 μs</div>
<div class="t" style="left:452.90px;top:722.15px;font-size:14px;line-height:14px;color:#a9a9a9;text-shadow:0 0 1px #000,0 0 2px #000,0 0 3px #000;-webkit-text-stroke:0.2px #a9a9a9;">-40 μs</div>
<div class="t" style="left:622.90px;top:722.15px;font-size:14px;line-height:14px;color:#a9a9a9;text-shadow:0 0 1px #000,0 0 2px #000,0 0 3px #000;-webkit-text-stroke:0.2px #a9a9a9;">-20 μs</div>
<div class="t" style="left:803.15px;top:722.15px;font-size:14px;line-height:14px;color:#a9a9a9;text-shadow:0 0 1px #000,0 0 2px #000,0 0 3px #000;-webkit-text-stroke:0.2px #a9a9a9;">0 s</div>
<div class="t" style="left:964.25px;top:722.15px;font-size:14px;line-height:14px;color:#a9a9a9;text-shadow:0 0 1px #000,0 0 2px #000,0 0 3px #000;-webkit-text-stroke:0.2px #a9a9a9;">20 μs</div>
<div class="t" style="left:1134.24px;top:722.15px;font-size:14px;line-height:14px;color:#a9a9a9;text-shadow:0 0 1px #000,0 0 2px #000,0 0 3px #000;-webkit-text-stroke:0.2px #a9a9a9;">40 μs</div>
<div class="t" style="left:1304.24px;top:722.15px;font-size:14px;line-height:14px;color:#a9a9a9;text-shadow:0 0 1px #000,0 0 2px #000,0 0 3px #000;-webkit-text-stroke:0.2px #a9a9a9;">60 μs</div>
<div class="t" style="left:1474.24px;top:722.15px;font-size:14px;line-height:14px;color:#a9a9a9;text-shadow:0 0 1px #000,0 0 2px #000,0 0 3px #000;-webkit-text-stroke:0.2px #a9a9a9;">80 μs</div>
<div class="t" style="left:1640.33px;top:722.15px;font-size:14px;line-height:14px;color:#a9a9a9;text-shadow:0 0 1px #000,0 0 2px #000,0 0 3px #000;-webkit-text-stroke:0.2px #a9a9a9;">100 μs</div>
<svg class="a" style="left:0;top:0" width="1920" height="1080"><path d="M21.25 171.9 H89.8 L97.8 186.8 L89.8 201.7 H21.25 Q17.25 201.7 17.25 197.7 V175.9 Q17.25 171.9 21.25 171.9 Z" fill="#1b1a08" stroke="#f5e835" stroke-width="2"/><rect x="47" y="171.9" width="2" height="29.799999999999983" fill="#f5e835"/><path d="M21.25 393.9 H89.8 L97.8 408.85 L89.8 423.8 H21.25 Q17.25 423.8 17.25 419.8 V397.9 Q17.25 393.9 21.25 393.9 Z" fill="#061618" stroke="#22bfce" stroke-width="2"/><rect x="47" y="393.9" width="2" height="29.900000000000034" fill="#22bfce"/><path d="M20 616 H44 L59 631 L44 646 H20 Q16 646 16 642 V620 Q16 616 20 616 Z" fill="#e8465e"/><path d="M21 840 H43.5 Q45.5 840 47 841.5 L58 854.3 L47 867.5 Q45.5 869 43.5 869 H21 Q17.2 869 17.2 865 V844 Q17.2 840 21 840 Z" fill="#0f1408" stroke="#7cc030" stroke-width="2"/><path d="M1666 84.7 H1701.9 Q1703.9 84.7 1703.9 86.7 V122.7 Q1703.9 124.7 1702 123 L1664.5 86.2 Q1663.3 84.7 1666 84.7 Z" fill="#505050"/><circle cx="1695.5" cy="92.4" r="4.6" fill="none" stroke="#8c8c8c" stroke-width="2"/><path d="M1691.6 96.6 L1684.8 103.2" stroke="#8c8c8c" stroke-width="3" stroke-linecap="round"/><path d="M1691.1 185.3 L1702.8 175.8 V183.5 H1711 V187.3 H1702.8 V195.2 Z" fill="#f5e52a"/></svg>
<div class="t" style="left:22.80px;top:179.80px;font-size:13px;line-height:13px;color:#f5e835;-webkit-text-stroke:0.25px currentColor;">C</div>
<div class="t" style="left:32.19px;top:179.80px;font-size:13px;line-height:13px;color:#f5e835;-webkit-text-stroke:0.25px currentColor;">1</div>
<div class="t" style="left:53.20px;top:179.80px;font-size:13px;line-height:13px;color:#f5e835;letter-spacing:-0.054px;-webkit-text-stroke:0.25px currentColor;">6.49 V</div>
<div class="t" style="left:22.80px;top:401.80px;font-size:13px;line-height:13px;color:#22bfce;-webkit-text-stroke:0.25px currentColor;">C</div>
<div class="t" style="left:33.69px;top:401.80px;font-size:13px;line-height:13px;color:#22bfce;-webkit-text-stroke:0.25px currentColor;">2</div>
<div class="t" style="left:53.20px;top:401.80px;font-size:13px;line-height:13px;color:#22bfce;letter-spacing:-0.054px;-webkit-text-stroke:0.25px currentColor;">6.18 V</div>
<div class="t" style="left:28.40px;top:624.90px;font-size:13px;line-height:13px;color:#ffffff;-webkit-text-stroke:0.25px currentColor;">C</div>
<div class="t" style="left:38.98px;top:624.90px;font-size:13px;line-height:13px;color:#ffffff;-webkit-text-stroke:0.25px currentColor;">3</div>
<div class="t" style="left:27.80px;top:847.60px;font-size:13px;line-height:13px;color:#7cc030;-webkit-text-stroke:0.25px currentColor;">C</div>
<div class="t" style="left:38.89px;top:847.60px;font-size:13px;line-height:13px;color:#7cc030;-webkit-text-stroke:0.25px currentColor;">4</div>
</body></html>
